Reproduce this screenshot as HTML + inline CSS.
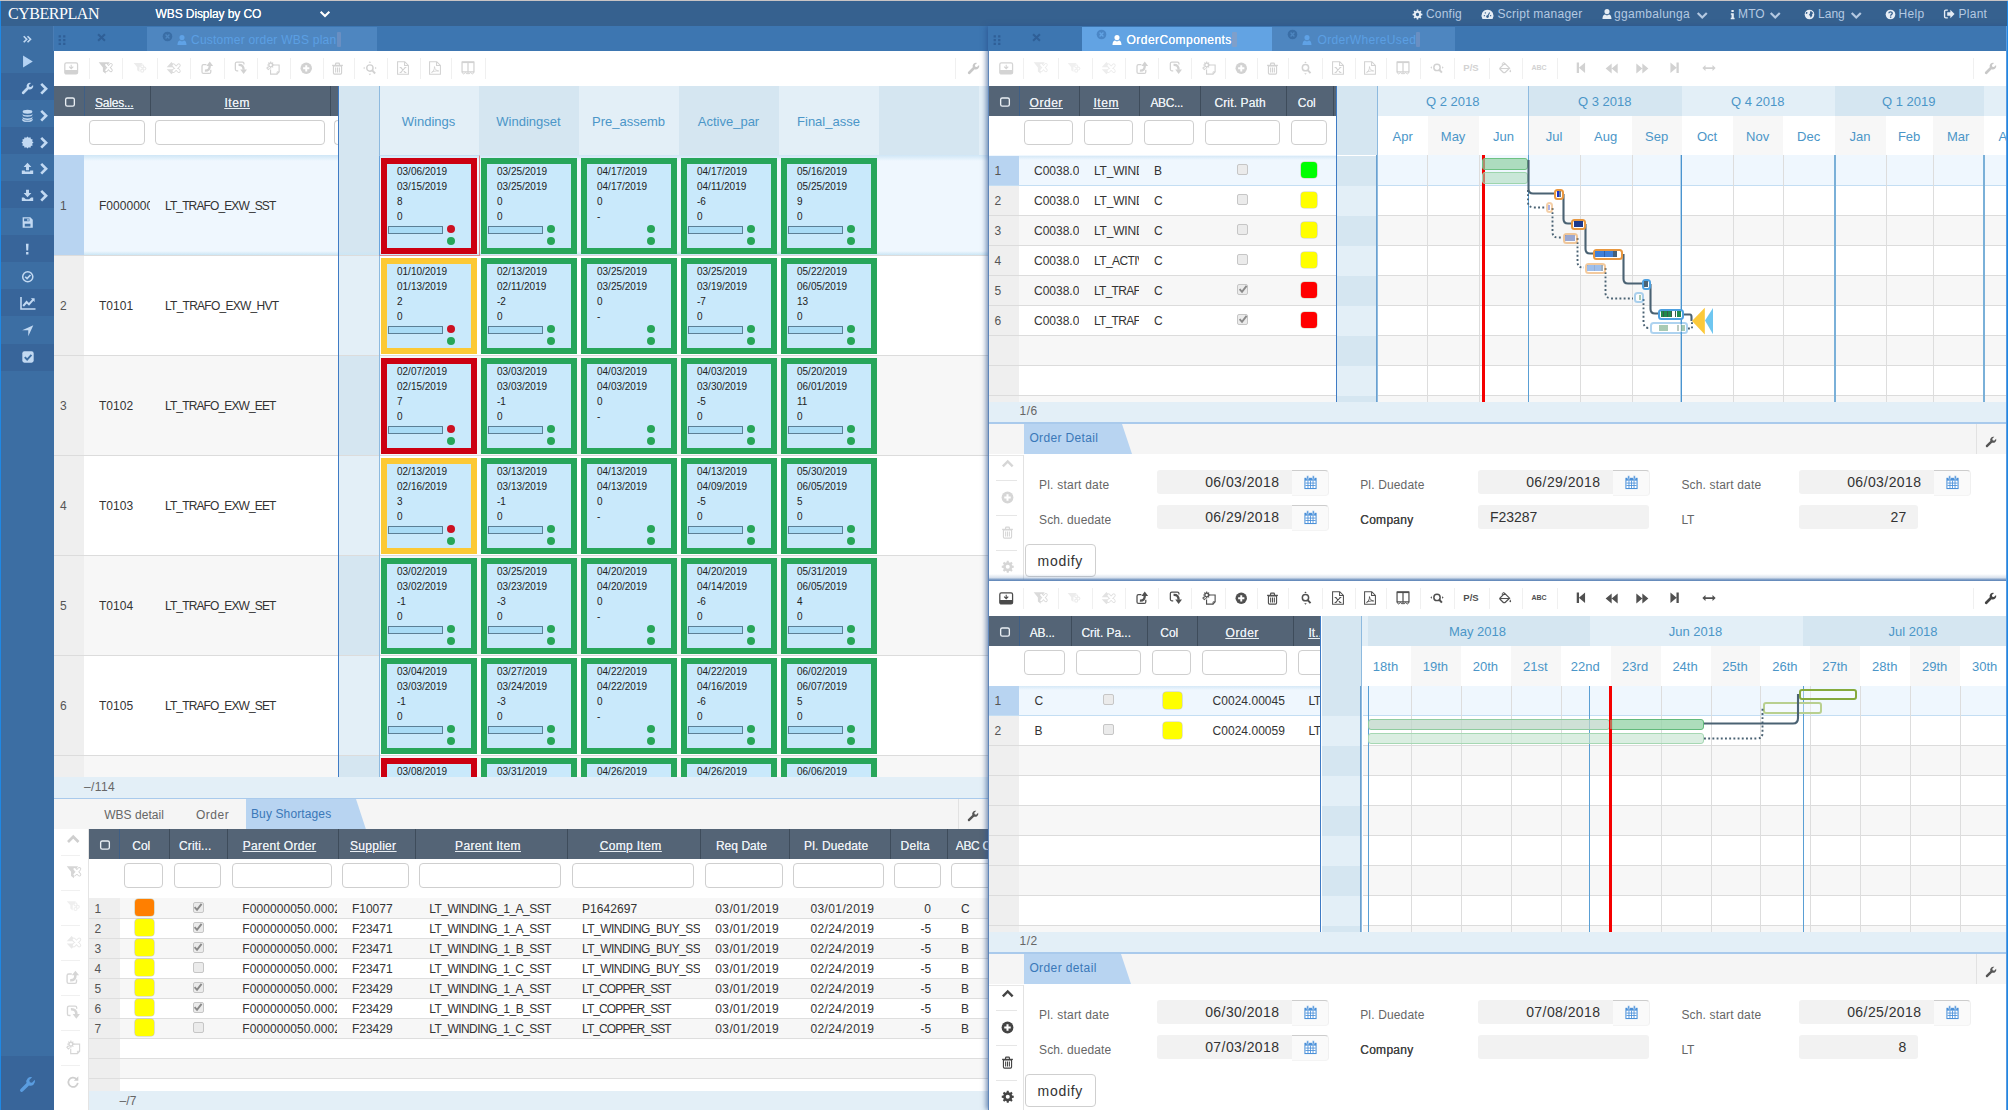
<!DOCTYPE html>
<html lang="en"><head><meta charset="utf-8"><title>Cyberplan</title>
<style>
*{box-sizing:border-box;margin:0;padding:0}
html,body{width:2008px;height:1110px;overflow:hidden;background:#fff}
body{position:relative;font-family:"Liberation Sans",sans-serif;font-size:12px;color:#333}
div,svg,span.a{position:absolute}
svg{overflow:visible}
.clip{overflow:hidden}
.fi{border:1px solid #cfcfcf;border-radius:4px;background:#fff}
.hd{background:#546476}
.u{text-decoration:underline}
</style></head>
<body>
<div style="left:0px;top:0px;width:2008px;height:1px;background:#c9c4c4"></div>
<div style="left:0px;top:1px;width:2008px;height:25px;background:#36618f"></div>
<div style="left:8px;top:3px;height:22px;line-height:22px;font-family:'Liberation Serif',serif;font-size:16px;color:#fff;letter-spacing:-.45px;white-space:nowrap">CYBERPLAN</div>
<div style="left:155.5px;top:5.0px;height:18px;line-height:18px;font-size:12px;color:#fff;letter-spacing:-0.09px;white-space:nowrap;text-shadow:0 0 .4px #fff;">WBS Display by CO</div>
<svg viewBox="0 0 16 16" style="left:319.0px;top:8.0px;width:12px;height:12px;color:#fff;"><path d="M2.2 5 L8 10.8 L13.8 5" fill="none" stroke="currentColor" stroke-width="2.8"/></svg>
<svg viewBox="0 0 16 16" style="left:1412.0px;top:8.5px;width:11px;height:11px;color:#e6edf5;"><path d="M15.11 6.87 L15.11 9.13 L13.23 9.34 L12.65 10.75 L13.82 12.23 L12.23 13.82 L10.75 12.65 L9.34 13.23 L9.13 15.11 L6.87 15.11 L6.66 13.23 L5.25 12.65 L3.77 13.82 L2.18 12.23 L3.35 10.75 L2.77 9.34 L0.89 9.13 L0.89 6.87 L2.77 6.66 L3.35 5.25 L2.18 3.77 L3.77 2.18 L5.25 3.35 L6.66 2.77 L6.87 0.89 L9.13 0.89 L9.34 2.77 L10.75 3.35 L12.23 2.18 L13.82 3.77 L12.65 5.25 L13.23 6.66Z M10.4 8 A2.4 2.4 0 1 0 5.6 8 A2.4 2.4 0 1 0 10.4 8Z" fill="currentColor" fill-rule="evenodd"/></svg>
<div style="left:1426px;top:5.1px;height:18px;line-height:18px;font-size:12px;color:#b4c9e2;letter-spacing:0.20px;white-space:nowrap;">Config</div>
<svg viewBox="0 0 16 16" style="left:1481.0px;top:7.5px;width:13px;height:13px;color:#e6edf5;"><path d="M8 2 A7.4 7.4 0 0 1 14.2 13.4 H1.8 A7.4 7.4 0 0 1 8 2Z" fill="currentColor"/><circle cx="8" cy="10.6" r="1.6" fill="#36618f"/><path d="M8 10.4 L10.6 5.6" stroke="#36618f" stroke-width="1.3"/><circle cx="4.2" cy="9.4" r=".9" fill="#36618f"/><circle cx="5.4" cy="6" r=".9" fill="#36618f"/><circle cx="11.8" cy="9.4" r=".9" fill="#36618f"/></svg>
<div style="left:1497.5px;top:5.1px;height:18px;line-height:18px;font-size:12px;color:#b4c9e2;letter-spacing:0.26px;white-space:nowrap;">Script manager</div>
<svg viewBox="0 0 16 16" style="left:1600.5px;top:8.0px;width:12px;height:12px;color:#e6edf5;"><path d="M8 1.2 A3.4 3.6 0 0 1 8 8.4 A3.4 3.6 0 0 1 8 1.2Z M2 14.8 C2 10 4 8.6 5.6 8.6 C6.4 9.4 7.2 9.7 8 9.7 C8.8 9.7 9.6 9.4 10.4 8.6 C12 8.6 14 10 14 14.8Z" fill="currentColor"/></svg>
<div style="left:1614px;top:5.1px;height:18px;line-height:18px;font-size:12px;color:#b4c9e2;letter-spacing:0.30px;white-space:nowrap;">ggambalunga</div>
<svg viewBox="0 0 16 16" style="left:1726.5px;top:8.5px;width:11px;height:11px;color:#e6edf5;"><path d="M6.4 1.4 H9.8 V4.4 H6.4Z M5.6 6.2 H9.9 V12.8 H11 V14.8 H5.4 V12.8 H6.6 V8.2 H5.6Z" fill="currentColor"/></svg>
<div style="left:1738px;top:5.1px;height:18px;line-height:18px;font-size:12px;color:#b4c9e2;letter-spacing:0.13px;white-space:nowrap;">MTO</div>
<svg viewBox="0 0 16 16" style="left:1804.0px;top:8.5px;width:11px;height:11px;color:#e6edf5;"><circle cx="8" cy="8" r="7" fill="currentColor"/><path d="M9.5 2.6 C11 4 12.6 4.4 13.6 6.6 C12 6.2 11.4 7.6 12.2 9 C11.2 10.6 10.6 11.8 9.8 12.8 C9 11.6 9.4 10.2 8.4 9.6 C7 9.2 7.2 7.6 8.2 7 C9.4 6.4 8.2 5 9 4.2Z" fill="#36618f"/><path d="M3.2 4.4 C4.4 4 5.4 4.8 5 6 C4.6 6.8 3.6 6.6 2.8 7.4 C2.4 6.4 2.6 5.2 3.2 4.4Z" fill="#36618f"/></svg>
<div style="left:1818px;top:5.1px;height:18px;line-height:18px;font-size:12px;color:#b4c9e2;letter-spacing:0.03px;white-space:nowrap;">Lang</div>
<svg viewBox="0 0 16 16" style="left:1884.5px;top:8.5px;width:11px;height:11px;color:#e6edf5;"><circle cx="8" cy="8" r="7" fill="currentColor"/><path d="M5.6 6.2 C5.6 3.4 10.6 3.4 10.6 6.2 C10.6 8 8.2 8 8.2 9.8" fill="none" stroke="#36618f" stroke-width="1.9"/><rect x="7.2" y="10.9" width="2" height="1.9" fill="#36618f"/></svg>
<div style="left:1898.6px;top:5.1px;height:18px;line-height:18px;font-size:12px;color:#b4c9e2;letter-spacing:0.33px;white-space:nowrap;">Help</div>
<svg viewBox="0 0 16 16" style="left:1943.0px;top:8.0px;width:12px;height:12px;color:#e6edf5;"><path d="M6.4 2 H3.6 A2.4 2.4 0 0 0 1.2 4.4 V11.6 A2.4 2.4 0 0 0 3.6 14 H6.4 V12.2 H3.8 A.8 .8 0 0 1 3 11.4 V4.6 A.8 .8 0 0 1 3.8 3.8 H6.4Z M9.8 2.4 L15.4 8 L9.8 13.6 V10.2 H5.6 V5.8 H9.8Z" fill="currentColor"/></svg>
<div style="left:1958.6px;top:5.1px;height:18px;line-height:18px;font-size:12px;color:#b4c9e2;letter-spacing:0.23px;white-space:nowrap;">Plant</div>
<svg viewBox="0 0 16 16" style="left:1695.8px;top:8.6px;width:12.5px;height:12.5px;color:#b4c9e2;"><path d="M2.2 5 L8 10.8 L13.8 5" fill="none" stroke="currentColor" stroke-width="2.8"/></svg>
<svg viewBox="0 0 16 16" style="left:1769.2px;top:8.6px;width:12.5px;height:12.5px;color:#b4c9e2;"><path d="M2.2 5 L8 10.8 L13.8 5" fill="none" stroke="currentColor" stroke-width="2.8"/></svg>
<svg viewBox="0 0 16 16" style="left:1849.8px;top:8.6px;width:12.5px;height:12.5px;color:#b4c9e2;"><path d="M2.2 5 L8 10.8 L13.8 5" fill="none" stroke="currentColor" stroke-width="2.8"/></svg>
<div style="left:0px;top:26px;width:54px;height:1084px;background:#3c6ea3"></div>
<div style="left:0px;top:73px;width:54px;height:27px;background:#38659a"></div>
<div style="left:0px;top:127.1px;width:54px;height:27.099999999999994px;background:#38659a"></div>
<div style="left:0px;top:181.2px;width:54px;height:27.0px;background:#38659a"></div>
<div style="left:0px;top:235.3px;width:54px;height:27.0px;background:#38659a"></div>
<div style="left:0px;top:289.4px;width:54px;height:27.0px;background:#38659a"></div>
<div style="left:0px;top:343.5px;width:54px;height:27.0px;background:#38659a"></div>
<div style="left:0px;top:1056px;width:54px;height:54px;background:#38659a"></div>
<div style="left:0px;top:1px;width:1px;height:1109px;background:#1e88e5"></div>
<svg viewBox="0 0 16 16" style="left:21.8px;top:34.0px;width:10.5px;height:10.5px;color:#c2d9f2;"><path d="M2.6 3.4 L7.2 8 L2.6 12.6 M8.4 3.4 L13 8 L8.4 12.6" fill="none" stroke="currentColor" stroke-width="2.5"/></svg>
<svg viewBox="0 0 16 16" style="left:20.5px;top:54.5px;width:13px;height:13px;color:#b5d3f3;"><path d="M2.5 0.5 L14.5 8 L2.5 15.5Z" fill="currentColor"/></svg>
<svg viewBox="0 0 16 16" style="left:21.0px;top:81.5px;width:13px;height:13px;color:#c2d9f2;"><path d="M14.9 3.6 L12.2 6.3 L10.2 5.8 L9.7 3.8 L12.4 1.1 A4.3 4.3 0 0 0 7.1 6.6 L1.3 12.4 A1.65 1.65 0 0 0 3.6 14.7 L9.4 8.9 A4.3 4.3 0 0 0 14.9 3.6Z" fill="currentColor"/></svg>
<svg viewBox="0 0 16 16" style="left:36.8px;top:81.8px;width:13.5px;height:13.5px;color:#c2d9f2;"><path d="M5 2.2 L10.8 8 L5 13.8" fill="none" stroke="currentColor" stroke-width="3.1" stroke-linejoin="miter"/></svg>
<svg viewBox="0 0 16 16" style="left:21.0px;top:108.5px;width:13px;height:13px;color:#c2d9f2;"><path d="M2 3.4 A6 2.4 0 0 1 14 3.4 A6 2.4 0 0 1 2 3.4Z M2 5.4 A6 2.4 0 0 0 14 5.4 V7.2 A6 2.4 0 0 1 2 7.2Z M2 9.2 A6 2.4 0 0 0 14 9.2 V11 A6 2.4 0 0 1 2 11Z M2 13 A6 2.4 0 0 0 14 13 V13.4 A6 2.4 0 0 1 2 13.4Z" fill="currentColor"/><path d="M2 12.6 A6 2.4 0 0 0 14 12.6" fill="none" stroke="currentColor" stroke-width="1.6"/></svg>
<svg viewBox="0 0 16 16" style="left:36.8px;top:108.8px;width:13.5px;height:13.5px;color:#c2d9f2;"><path d="M5 2.2 L10.8 8 L5 13.8" fill="none" stroke="currentColor" stroke-width="3.1" stroke-linejoin="miter"/></svg>
<svg viewBox="0 0 16 16" style="left:21.0px;top:135.5px;width:13px;height:13px;color:#c2d9f2;"><path d="M15.40 8.00 L13.70 9.53 L14.41 11.70 L12.17 12.17 L11.70 14.41 L9.53 13.70 L8.00 15.40 L6.47 13.70 L4.30 14.41 L3.83 12.17 L1.59 11.70 L2.30 9.53 L0.60 8.00 L2.30 6.47 L1.59 4.30 L3.83 3.83 L4.30 1.59 L6.47 2.30 L8.00 0.60 L9.53 2.30 L11.70 1.59 L12.17 3.83 L14.41 4.30 L13.70 6.47Z" fill="currentColor"/></svg>
<svg viewBox="0 0 16 16" style="left:36.8px;top:135.8px;width:13.5px;height:13.5px;color:#c2d9f2;"><path d="M5 2.2 L10.8 8 L5 13.8" fill="none" stroke="currentColor" stroke-width="3.1" stroke-linejoin="miter"/></svg>
<svg viewBox="0 0 16 16" style="left:21.0px;top:162.0px;width:13px;height:13px;color:#c2d9f2;"><path d="M8 0.8 L12.8 6 H9.8 V10 H6.2 V6 H3.2Z M1 10.5 H4.8 V11.6 H11.2 V10.5 H15 V14.8 H1Z" fill="currentColor"/></svg>
<svg viewBox="0 0 16 16" style="left:36.8px;top:162.2px;width:13.5px;height:13.5px;color:#c2d9f2;"><path d="M5 2.2 L10.8 8 L5 13.8" fill="none" stroke="currentColor" stroke-width="3.1" stroke-linejoin="miter"/></svg>
<svg viewBox="0 0 16 16" style="left:21.0px;top:189.0px;width:13px;height:13px;color:#c2d9f2;"><path d="M6.2 0.8 H9.8 V5 H12.8 L8 10.2 L3.2 5 H6.2Z M1 10.5 H3.6 L6 12.6 H10 L12.4 10.5 H15 V14.8 H1Z" fill="currentColor"/></svg>
<svg viewBox="0 0 16 16" style="left:36.8px;top:189.2px;width:13.5px;height:13.5px;color:#c2d9f2;"><path d="M5 2.2 L10.8 8 L5 13.8" fill="none" stroke="currentColor" stroke-width="3.1" stroke-linejoin="miter"/></svg>
<svg viewBox="0 0 16 16" style="left:21.0px;top:216.0px;width:13px;height:13px;color:#c2d9f2;"><path d="M2 1.5 H11.5 L14.5 4.5 V14.5 H2Z M3.8 3.2 V6.6 H10.4 V3.2Z M4.6 9.4 V12.9 H11.6 V9.4Z" fill="currentColor" fill-rule="evenodd"/><rect x="7.8" y="3.6" width="1.6" height="2.4" fill="currentColor"/></svg>
<svg viewBox="0 0 16 16" style="left:21.2px;top:242.8px;width:12.5px;height:12.5px;color:#c2d9f2;"><path d="M6.3 1 H9.7 L9.2 9.6 H6.8Z M6.5 11.6 H9.5 V14.8 H6.5Z" fill="currentColor"/></svg>
<svg viewBox="0 0 16 16" style="left:20.8px;top:269.6px;width:13.5px;height:13.5px;color:#c2d9f2;"><circle cx="8" cy="8" r="6" fill="none" stroke="currentColor" stroke-width="1.8"/><path d="M5 8 L7.2 10.2 L11.2 5.9" fill="none" stroke="currentColor" stroke-width="2"/></svg>
<svg viewBox="0 0 16 16" style="left:19.5px;top:295.0px;width:16px;height:16px;color:#c2d9f2;"><path d="M1 2 V14 H15.5" fill="none" stroke="currentColor" stroke-width="1.6"/><path d="M3.2 11 L6.6 7 L9 9.4 L13.6 4.2" fill="none" stroke="currentColor" stroke-width="2"/><path d="M10.8 3.2 H14.6 V7Z" fill="currentColor"/></svg>
<svg viewBox="0 0 16 16" style="left:20.8px;top:323.8px;width:13.5px;height:13.5px;color:#c2d9f2;"><path d="M14.6 1.4 L8.6 14.6 V7.4 H1.4Z" fill="currentColor"/></svg>
<svg viewBox="0 0 16 16" style="left:20.5px;top:350.0px;width:14px;height:14px;color:#c2d9f2;"><rect x="1.5" y="1.5" width="13" height="13" rx="2.4" fill="currentColor"/><path d="M4.3 8.2 L7 10.9 L11.9 5.6" fill="none" stroke="#3c6ea3" stroke-width="2.2"/></svg>
<svg viewBox="0 0 16 16" style="left:19.0px;top:1075.5px;width:17px;height:17px;color:#5a9de0;"><path d="M14.9 3.6 L12.2 6.3 L10.2 5.8 L9.7 3.8 L12.4 1.1 A4.3 4.3 0 0 0 7.1 6.6 L1.3 12.4 A1.65 1.65 0 0 0 3.6 14.7 L9.4 8.9 A4.3 4.3 0 0 0 14.9 3.6Z" fill="currentColor"/></svg>
<div style="left:54px;top:26px;width:1954px;height:25px;background:#3d76b1"></div>
<div style="left:53px;top:26px;width:1px;height:25px;background:#4a7db5"></div>
<svg viewBox="0 0 16 16" style="left:55.5px;top:33.5px;width:12px;height:12px;color:#2f5f97;"><path d="M3.5 1.5 h3 v3 h-3Z M9.5 1.5 h3 v3 h-3Z M3.5 6.5 h3 v3 h-3Z M9.5 6.5 h3 v3 h-3Z M3.5 11.5 h3 v3 h-3Z M9.5 11.5 h3 v3 h-3Z" fill="currentColor"/></svg>
<svg viewBox="0 0 16 16" style="left:96.0px;top:32.0px;width:11px;height:11px;color:#2f5f97;"><path d="M3 3.4 L13 12.6 M13 3.4 L3 12.6" stroke="currentColor" stroke-width="3" fill="none"/></svg>
<div style="left:146.5px;top:27px;width:230px;height:24px;background:#4e86c0"></div>
<svg viewBox="0 0 16 16" style="left:161.5px;top:31.0px;width:11px;height:11px;color:#3a6ea6;"><circle cx="8" cy="8" r="7" fill="currentColor"/><path d="M5.2 5.2 L10.8 10.8 M10.8 5.2 L5.2 10.8" stroke="#4e86c0" stroke-width="2" fill="none"/></svg>
<svg viewBox="0 0 16 16" style="left:175.5px;top:34.0px;width:12px;height:12px;color:#5fa2e6;"><path d="M8 1.2 A3.4 3.6 0 0 1 8 8.4 A3.4 3.6 0 0 1 8 1.2Z M2 14.8 C2 10 4 8.6 5.6 8.6 C6.4 9.4 7.2 9.7 8 9.7 C8.8 9.7 9.6 9.4 10.4 8.6 C12 8.6 14 10 14 14.8Z" fill="currentColor"/></svg>
<div style="left:191px;top:30.5px;height:18px;line-height:18px;font-size:12px;color:#5b9fe3;letter-spacing:0.23px;white-space:nowrap;">Customer order WBS plan</div>
<div style="left:336.5px;top:31.5px;width:4.5px;height:15px;background:#6a8fc2;border-radius:1px"></div>
<div style="left:54px;top:51px;width:934px;height:35px;background:#fff"></div>
<div style="left:89px;top:58px;width:1px;height:21px;background:#f0f0f0"></div>
<div style="left:122px;top:58px;width:1px;height:21px;background:#f0f0f0"></div>
<div style="left:157px;top:58px;width:1px;height:21px;background:#f0f0f0"></div>
<div style="left:190px;top:58px;width:1px;height:21px;background:#f0f0f0"></div>
<div style="left:224px;top:58px;width:1px;height:21px;background:#f0f0f0"></div>
<div style="left:257px;top:58px;width:1px;height:21px;background:#f0f0f0"></div>
<div style="left:290px;top:58px;width:1px;height:21px;background:#f0f0f0"></div>
<div style="left:323px;top:58px;width:1px;height:21px;background:#f0f0f0"></div>
<div style="left:354px;top:58px;width:1px;height:21px;background:#f0f0f0"></div>
<div style="left:387px;top:58px;width:1px;height:21px;background:#f0f0f0"></div>
<div style="left:420px;top:58px;width:1px;height:21px;background:#f0f0f0"></div>
<div style="left:451px;top:58px;width:1px;height:21px;background:#f0f0f0"></div>
<div style="left:485px;top:58px;width:1px;height:21px;background:#f0f0f0"></div>
<div style="left:955px;top:58px;width:1px;height:21px;background:#f0f0f0"></div>
<svg viewBox="0 0 16 16" style="left:64.0px;top:60.8px;width:14.4px;height:14.4px;color:#d2d2d2;"><rect x="0.9" y="2.1" width="14.2" height="12.3" rx="1.7" fill="none" stroke="currentColor" stroke-width="1.4"/><path d="M0.9 9.9 H15.1 V13 A1.5 1.5 0 0 1 13.6 14.5 H2.4 A1.5 1.5 0 0 1 0.9 13Z" fill="currentColor"/><path d="M8 4.2 V8 M5.7 6.2 L8 8.5 L10.3 6.2" fill="none" stroke="currentColor" stroke-width="1.2"/></svg>
<svg viewBox="0 0 16 16" style="left:98.3px;top:61.0px;width:14px;height:14px;color:#d2d2d2;"><path d="M0.8 1.4 H13.4 L8.8 7.4 V14.6 L5.6 12 V7.4Z" fill="currentColor"/><path d="M9.3 4.4 L14.7 10.6 M14.7 4.4 L9.3 10.6" stroke="currentColor" stroke-width="4.2" stroke-linecap="round" fill="none"/><path d="M9.3 4.4 L14.7 10.6 M14.7 4.4 L9.3 10.6" stroke="#fff" stroke-width="2.2" stroke-linecap="round" fill="none"/></svg>
<svg viewBox="0 0 16 16" style="left:132.6px;top:61.0px;width:14px;height:14px;color:#ececec;"><path d="M0.8 2.4 H11 L7.4 7 V12.6 L4.8 10.6 V7Z" fill="currentColor"/><circle cx="10.5" cy="6" r="2.3" fill="currentColor"/><circle cx="13" cy="8.6" r="2.3" fill="currentColor"/><circle cx="10.5" cy="11" r="2.3" fill="currentColor"/><circle cx="10.5" cy="6" r="1" fill="#fff"/><circle cx="13" cy="8.6" r="1" fill="#fff"/><circle cx="10.5" cy="11" r="1" fill="#fff"/></svg>
<svg viewBox="0 0 16 16" style="left:165.8px;top:61.0px;width:14px;height:14px;color:#dcdcdc;"><path d="M0.8 7 L6.2 1.2 L11.6 7Z M0.8 9.4 L6.2 15.2 L11.6 9.4Z" fill="currentColor"/><path d="M8.6 5 L14.6 11.4 M14.6 5 L8.6 11.4" stroke="currentColor" stroke-width="4.4" stroke-linecap="round" fill="none"/><path d="M8.6 5 L14.6 11.4 M14.6 5 L8.6 11.4" stroke="#fff" stroke-width="2.3" stroke-linecap="round" fill="none"/></svg>
<svg viewBox="0 0 16 16" style="left:200.8px;top:61.2px;width:13.5px;height:13.5px;color:#d2d2d2;"><path d="M11.6 10.4 V13 A1.8 1.8 0 0 1 9.8 14.8 H3 A1.8 1.8 0 0 1 1.2 13 V6.2 A1.8 1.8 0 0 1 3 4.4 H6.4" fill="none" stroke="currentColor" stroke-width="1.5"/><path d="M4.6 11.4 C8.8 11.6 10.4 9.6 10.4 5.4" fill="none" stroke="currentColor" stroke-width="2.8"/><path d="M6.4 5.9 L10.4 0.7 L14.4 5.9Z" fill="currentColor"/></svg>
<svg viewBox="0 0 16 16" style="left:233.8px;top:61.2px;width:13.5px;height:13.5px;color:#d2d2d2;"><path d="M5 11.6 H3.4 A1.8 1.8 0 0 1 1.6 9.8 V3 A1.8 1.8 0 0 1 3.4 1.2 H10 A1.8 1.8 0 0 1 11.8 3 V4.2" fill="none" stroke="currentColor" stroke-width="1.5"/><path d="M5.4 4.6 C9.6 4.4 11.4 6.4 11.4 10.4" fill="none" stroke="currentColor" stroke-width="2.8"/><path d="M7.4 10 L11.4 15.3 L15.4 10Z" fill="currentColor"/></svg>
<svg viewBox="0 0 16 16" style="left:266.4px;top:61.0px;width:14px;height:14px;color:#d2d2d2;"><path d="M7.4 4.6 H15 V12.4 L12.6 15 H5.2 V9.6" fill="none" stroke="currentColor" stroke-width="1.3"/><path d="M15 12.4 H12.6 V15" fill="none" stroke="currentColor" stroke-width="1"/><g transform="translate(1.2 0.4) scale(.52)"><path d="M15.51 6.81 L15.51 9.19 L13.23 9.34 L12.65 10.75 L14.15 12.47 L12.47 14.15 L10.75 12.65 L9.34 13.23 L9.19 15.51 L6.81 15.51 L6.66 13.23 L5.25 12.65 L3.53 14.15 L1.85 12.47 L3.35 10.75 L2.77 9.34 L0.49 9.19 L0.49 6.81 L2.77 6.66 L3.35 5.25 L1.85 3.53 L3.53 1.85 L5.25 3.35 L6.66 2.77 L6.81 0.49 L9.19 0.49 L9.34 2.77 L10.75 3.35 L12.47 1.85 L14.15 3.53 L12.65 5.25 L13.23 6.66Z M10.6 8 A2.6 2.6 0 1 0 5.4 8 A2.6 2.6 0 1 0 10.6 8Z" fill="currentColor" fill-rule="evenodd"/></g><path d="M2.4 6.6 L1 8 L2.6 9.8 L4.2 8.4" fill="none" stroke="currentColor" stroke-width="1.2"/></svg>
<svg viewBox="0 0 16 16" style="left:299.8px;top:61.8px;width:12.5px;height:12.5px;color:#d2d2d2;"><circle cx="8" cy="8" r="7.3" fill="currentColor"/><path d="M8 4 V12 M4 8 H12" stroke="#fff" stroke-width="2.5"/></svg>
<svg viewBox="0 0 16 16" style="left:331.1px;top:61.5px;width:13px;height:13px;color:#d2d2d2;"><path d="M3 4.8 H13 V13.6 A1.3 1.3 0 0 1 11.7 14.9 H4.3 A1.3 1.3 0 0 1 3 13.6Z" fill="none" stroke="currentColor" stroke-width="1.4"/><path d="M1.4 4.2 H14.6" stroke="currentColor" stroke-width="1.6"/><path d="M5.6 3.8 V2.4 A1 1 0 0 1 6.6 1.4 H9.4 A1 1 0 0 1 10.4 2.4 V3.8" fill="none" stroke="currentColor" stroke-width="1.4"/><path d="M5.7 6.8 V12.8 M8 6.8 V12.8 M10.3 6.8 V12.8" stroke="currentColor" stroke-width="1.3"/></svg>
<svg viewBox="0 0 16 16" style="left:362.8px;top:60.8px;width:14.5px;height:14.5px;color:#d2d2d2;"><circle cx="7.6" cy="7.8" r="3.5" fill="none" stroke="currentColor" stroke-width="1.6"/><path d="M10.2 10.4 L13.4 13.8" stroke="currentColor" stroke-width="2.1"/><path d="M7.6 0.4 L9 2 H6.2Z M7.6 15.6 L9 14 H6.2Z M0.2 7.8 L1.8 6.4 V9.2Z M15 7.8 L13.4 6.4 V9.2Z" fill="currentColor"/></svg>
<svg viewBox="0 0 16 16" style="left:396.0px;top:61.0px;width:14px;height:14px;color:#d2d2d2;"><path d="M1.8 0.8 H10 L14.2 5 V15.2 H1.8Z M9.8 1 V5.2 H14" fill="none" stroke="currentColor" stroke-width="1.2"/><path d="M5.2 7.4 L10.8 13.2 M10.8 7.4 L5.2 13.2 M4.2 7.4 H6.4 M9.6 7.4 H11.8 M4.2 13.2 H6.4 M9.6 13.2 H11.8" stroke="currentColor" stroke-width="1.2" fill="none"/></svg>
<svg viewBox="0 0 16 16" style="left:428.2px;top:61.0px;width:14px;height:14px;color:#d2d2d2;"><path d="M1.8 0.8 H10 L14.2 5 V15.2 H1.8Z M9.8 1 V5.2 H14" fill="none" stroke="currentColor" stroke-width="1.2"/><path d="M4 13 C6.4 11.8 7.6 9.2 7.4 6.4 C7.8 9.6 9.6 11.2 12.2 11.4 C9.2 11 6.4 11.8 4 13Z" fill="none" stroke="currentColor" stroke-width="1"/></svg>
<svg viewBox="0 0 16 16" style="left:460.8px;top:61.0px;width:14px;height:14px;color:#d2d2d2;"><path d="M1.2 1.2 H14.8 V12.4 H1.2Z" fill="none" stroke="currentColor" stroke-width="1.4"/><path d="M1.2 1.4 H14.8" stroke="currentColor" stroke-width="2"/><path d="M8 1.4 V12.4" stroke="currentColor" stroke-width="1.4"/><path d="M1.2 12.4 L2.6 15 L5.4 13.2 L7 15 L8 13 L9 15 L10.6 13.2 L13.4 15 L14.8 12.4" fill="none" stroke="currentColor" stroke-width="1"/></svg>
<svg viewBox="0 0 16 16" style="left:966.5px;top:62.0px;width:13px;height:13px;color:#c8c8c8;"><path d="M14.9 3.6 L12.2 6.3 L10.2 5.8 L9.7 3.8 L12.4 1.1 A4.3 4.3 0 0 0 7.1 6.6 L1.3 12.4 A1.65 1.65 0 0 0 3.6 14.7 L9.4 8.9 A4.3 4.3 0 0 0 14.9 3.6Z" fill="currentColor"/></svg>
<div style="left:54px;top:86px;width:284px;height:30px;background:#546476"></div>
<svg viewBox="0 0 16 16" style="left:63.8px;top:96.0px;width:12px;height:12px;color:#e9eef3;"><rect x="2.2" y="2.6" width="11.6" height="10.8" rx="2.2" fill="none" stroke="currentColor" stroke-width="1.8"/></svg>
<div style="left:84px;top:86px;width:1px;height:30px;background:#3e4c5b"></div>
<div style="left:95.0px;top:93.7px;height:18px;line-height:18px;font-size:12px;color:#e9eef3;letter-spacing:-0.21px;white-space:nowrap;text-shadow:0 0 .3px #e9eef3;text-decoration:underline;">Sales...</div>
<div style="left:150px;top:86px;width:1px;height:30px;background:#3e4c5b"></div>
<div style="left:224.5px;top:93.7px;height:18px;line-height:18px;font-size:12px;color:#e9eef3;letter-spacing:0.53px;white-space:nowrap;text-shadow:0 0 .3px #e9eef3;text-decoration:underline;">Item</div>
<div style="left:330px;top:86px;width:1px;height:30px;background:#3e4c5b"></div>
<div style="left:338px;top:86px;width:1px;height:30px;background:#3e4c5b"></div>
<div style="left:84px;top:86px;width:1px;height:30px;background:#3f5f86"></div>
<div style="left:54px;top:116px;width:284px;height:39px;background:#fff"></div>
<div class="fi" style="left:89px;top:120px;width:56px;height:25px;"></div>
<div class="fi" style="left:155px;top:120px;width:170px;height:25px;"></div>
<div class="fi" style="left:334px;top:120px;width:10px;height:25px;border-right:0;border-radius:4px 0 0 4px"></div>
<div style="left:339px;top:86px;width:40px;height:691px;background:#d5e6f1"></div>
<div style="left:380px;top:86px;width:99px;height:69px;background:#e3eff7"></div>
<div style="left:479px;top:86px;width:100px;height:69px;background:#d5e6f1"></div>
<div style="left:579px;top:86px;width:100px;height:69px;background:#e3eff7"></div>
<div style="left:679px;top:86px;width:100px;height:69px;background:#d5e6f1"></div>
<div style="left:779px;top:86px;width:100px;height:69px;background:#e3eff7"></div>
<div style="left:879px;top:86px;width:100px;height:69px;background:#d5e6f1"></div>
<div style="left:979px;top:86px;width:9px;height:69px;background:#e3eff7"></div>
<div style="left:401.767734375px;top:112.0px;height:19px;line-height:19px;font-size:13px;color:#4b96c8;letter-spacing:0.00px;white-space:nowrap;">Windings</div>
<div style="left:496.34734375px;top:112.0px;height:19px;line-height:19px;font-size:13px;color:#4b96c8;letter-spacing:0.00px;white-space:nowrap;">Windingset</div>
<div style="left:592.01265625px;top:112.0px;height:19px;line-height:19px;font-size:13px;color:#4b96c8;letter-spacing:0.00px;white-space:nowrap;">Pre_assemb</div>
<div style="left:697.7915625px;top:112.0px;height:19px;line-height:19px;font-size:13px;color:#4b96c8;letter-spacing:0.00px;white-space:nowrap;">Active_par</div>
<div style="left:797.0684375px;top:112.0px;height:19px;line-height:19px;font-size:13px;color:#4b96c8;letter-spacing:0.00px;white-space:nowrap;">Final_asse</div>
<div style="left:84px;top:155px;width:254px;height:101px;background:#eff7fe"></div>
<div style="left:54px;top:155px;width:30px;height:101px;background:#b8d4f1"></div>
<div style="left:380px;top:155px;width:608px;height:101px;background:#eff7fe"></div>
<div style="left:84px;top:155px;width:254px;height:6px;background:linear-gradient(#cfe6f6,#eff7fe)"></div>
<div style="left:380px;top:155px;width:608px;height:6px;background:linear-gradient(#cfe6f6,#eff7fe)"></div>
<div style="left:84px;top:251px;width:904px;height:4px;background:linear-gradient(rgba(200,230,245,0),#cbe6f5)"></div>
<div style="left:54px;top:255px;width:934px;height:1px;background:#dcdcdc"></div>
<div style="left:60px;top:196.5px;height:18px;line-height:18px;font-size:12px;color:#555;letter-spacing:0.19px;white-space:nowrap;">1</div>
<div class="clip" style="left:99px;top:196px;width:51px;height:20px"><div style="left:0px;top:1.0px;height:18px;line-height:18px;font-size:12px;color:#333;letter-spacing:0.02px;white-space:nowrap;">F0000000</div></div>
<div style="left:165px;top:196.5px;height:18px;line-height:18px;font-size:12px;color:#333;letter-spacing:-0.88px;white-space:nowrap;">LT_TRAFO_EXW_SST</div>
<div style="left:84px;top:256px;width:254px;height:100px;background:#fff"></div>
<div style="left:54px;top:256px;width:30px;height:100px;background:#efefef"></div>
<div style="left:380px;top:256px;width:608px;height:100px;background:#fff"></div>
<div style="left:339px;top:256px;width:40px;height:100px;background:#e3eff7"></div>
<div style="left:54px;top:355px;width:934px;height:1px;background:#dcdcdc"></div>
<div style="left:60px;top:296.5px;height:18px;line-height:18px;font-size:12px;color:#555;letter-spacing:0.19px;white-space:nowrap;">2</div>
<div class="clip" style="left:99px;top:296px;width:51px;height:20px"><div style="left:0px;top:1.0px;height:18px;line-height:18px;font-size:12px;color:#333;letter-spacing:0.01px;white-space:nowrap;">T0101</div></div>
<div style="left:165px;top:296.5px;height:18px;line-height:18px;font-size:12px;color:#333;letter-spacing:-0.74px;white-space:nowrap;">LT_TRAFO_EXW_HVT</div>
<div style="left:84px;top:356px;width:254px;height:100px;background:#f7f7f7"></div>
<div style="left:54px;top:356px;width:30px;height:100px;background:#efefef"></div>
<div style="left:380px;top:356px;width:608px;height:100px;background:#f7f7f7"></div>
<div style="left:54px;top:455px;width:934px;height:1px;background:#dcdcdc"></div>
<div style="left:60px;top:396.5px;height:18px;line-height:18px;font-size:12px;color:#555;letter-spacing:0.19px;white-space:nowrap;">3</div>
<div class="clip" style="left:99px;top:396px;width:51px;height:20px"><div style="left:0px;top:1.0px;height:18px;line-height:18px;font-size:12px;color:#333;letter-spacing:0.01px;white-space:nowrap;">T0102</div></div>
<div style="left:165px;top:396.5px;height:18px;line-height:18px;font-size:12px;color:#333;letter-spacing:-0.87px;white-space:nowrap;">LT_TRAFO_EXW_EET</div>
<div style="left:84px;top:456px;width:254px;height:100px;background:#fff"></div>
<div style="left:54px;top:456px;width:30px;height:100px;background:#efefef"></div>
<div style="left:380px;top:456px;width:608px;height:100px;background:#fff"></div>
<div style="left:339px;top:456px;width:40px;height:100px;background:#e3eff7"></div>
<div style="left:54px;top:555px;width:934px;height:1px;background:#dcdcdc"></div>
<div style="left:60px;top:496.5px;height:18px;line-height:18px;font-size:12px;color:#555;letter-spacing:0.19px;white-space:nowrap;">4</div>
<div class="clip" style="left:99px;top:496px;width:51px;height:20px"><div style="left:0px;top:1.0px;height:18px;line-height:18px;font-size:12px;color:#333;letter-spacing:0.01px;white-space:nowrap;">T0103</div></div>
<div style="left:165px;top:496.5px;height:18px;line-height:18px;font-size:12px;color:#333;letter-spacing:-0.87px;white-space:nowrap;">LT_TRAFO_EXW_EET</div>
<div style="left:84px;top:556px;width:254px;height:100px;background:#f7f7f7"></div>
<div style="left:54px;top:556px;width:30px;height:100px;background:#efefef"></div>
<div style="left:380px;top:556px;width:608px;height:100px;background:#f7f7f7"></div>
<div style="left:54px;top:655px;width:934px;height:1px;background:#dcdcdc"></div>
<div style="left:60px;top:596.5px;height:18px;line-height:18px;font-size:12px;color:#555;letter-spacing:0.19px;white-space:nowrap;">5</div>
<div class="clip" style="left:99px;top:596px;width:51px;height:20px"><div style="left:0px;top:1.0px;height:18px;line-height:18px;font-size:12px;color:#333;letter-spacing:0.01px;white-space:nowrap;">T0104</div></div>
<div style="left:165px;top:596.5px;height:18px;line-height:18px;font-size:12px;color:#333;letter-spacing:-0.87px;white-space:nowrap;">LT_TRAFO_EXW_SET</div>
<div style="left:84px;top:656px;width:254px;height:100px;background:#fff"></div>
<div style="left:54px;top:656px;width:30px;height:100px;background:#efefef"></div>
<div style="left:380px;top:656px;width:608px;height:100px;background:#fff"></div>
<div style="left:339px;top:656px;width:40px;height:100px;background:#e3eff7"></div>
<div style="left:54px;top:755px;width:934px;height:1px;background:#dcdcdc"></div>
<div style="left:60px;top:696.5px;height:18px;line-height:18px;font-size:12px;color:#555;letter-spacing:0.19px;white-space:nowrap;">6</div>
<div class="clip" style="left:99px;top:696px;width:51px;height:20px"><div style="left:0px;top:1.0px;height:18px;line-height:18px;font-size:12px;color:#333;letter-spacing:0.01px;white-space:nowrap;">T0105</div></div>
<div style="left:165px;top:696.5px;height:18px;line-height:18px;font-size:12px;color:#333;letter-spacing:-0.87px;white-space:nowrap;">LT_TRAFO_EXW_SET</div>
<div style="left:84px;top:756px;width:254px;height:21px;background:#f7f7f7"></div>
<div style="left:54px;top:756px;width:30px;height:21px;background:#efefef"></div>
<div style="left:380px;top:756px;width:608px;height:21px;background:#f7f7f7"></div>
<div style="left:338px;top:86px;width:1px;height:691px;background:#3f7bc4"></div>
<div style="left:379px;top:86px;width:1px;height:691px;background:#8ebadf"></div>
<div class="clip" style="left:380px;top:155px;width:608px;height:622px">
<div style="left:1px;top:3px;width:96px;height:96px;border:6px solid #cc0011;background:#c9e9fb"></div>
<div style="left:17px;top:9px;height:15px;line-height:15px;font-size:10px;color:#222;white-space:nowrap">03/06/2019</div>
<div style="left:17px;top:24px;height:15px;line-height:15px;font-size:10px;color:#222;white-space:nowrap">03/15/2019</div>
<div style="left:17px;top:39px;height:15px;line-height:15px;font-size:10px;color:#222;white-space:nowrap">8</div>
<div style="left:17px;top:54px;height:15px;line-height:15px;font-size:10px;color:#222;white-space:nowrap">0</div>
<div style="left:8px;top:71px;width:55px;height:8px;border:1px solid #5b7f95;background:#a9dcf6"></div>
<div style="left:67px;top:70px;width:8px;height:8px;border-radius:50%;background:#cc1122"></div>
<div style="left:67px;top:82px;width:8px;height:8px;border-radius:50%;background:#27a558"></div>
<div style="left:101px;top:3px;width:96px;height:96px;border:6px solid #27a65a;background:#c9e9fb"></div>
<div style="left:117px;top:9px;height:15px;line-height:15px;font-size:10px;color:#222;white-space:nowrap">03/25/2019</div>
<div style="left:117px;top:24px;height:15px;line-height:15px;font-size:10px;color:#222;white-space:nowrap">03/25/2019</div>
<div style="left:117px;top:39px;height:15px;line-height:15px;font-size:10px;color:#222;white-space:nowrap">0</div>
<div style="left:117px;top:54px;height:15px;line-height:15px;font-size:10px;color:#222;white-space:nowrap">0</div>
<div style="left:108px;top:71px;width:55px;height:8px;border:1px solid #5b7f95;background:#a9dcf6"></div>
<div style="left:167px;top:70px;width:8px;height:8px;border-radius:50%;background:#27a558"></div>
<div style="left:167px;top:82px;width:8px;height:8px;border-radius:50%;background:#27a558"></div>
<div style="left:201px;top:3px;width:96px;height:96px;border:6px solid #27a65a;background:#c9e9fb"></div>
<div style="left:217px;top:9px;height:15px;line-height:15px;font-size:10px;color:#222;white-space:nowrap">04/17/2019</div>
<div style="left:217px;top:24px;height:15px;line-height:15px;font-size:10px;color:#222;white-space:nowrap">04/17/2019</div>
<div style="left:217px;top:39px;height:15px;line-height:15px;font-size:10px;color:#222;white-space:nowrap">0</div>
<div style="left:217px;top:54px;height:15px;line-height:15px;font-size:10px;color:#222;white-space:nowrap">-</div>
<div style="left:267px;top:70px;width:8px;height:8px;border-radius:50%;background:#27a558"></div>
<div style="left:267px;top:82px;width:8px;height:8px;border-radius:50%;background:#27a558"></div>
<div style="left:301px;top:3px;width:96px;height:96px;border:6px solid #27a65a;background:#c9e9fb"></div>
<div style="left:317px;top:9px;height:15px;line-height:15px;font-size:10px;color:#222;white-space:nowrap">04/17/2019</div>
<div style="left:317px;top:24px;height:15px;line-height:15px;font-size:10px;color:#222;white-space:nowrap">04/11/2019</div>
<div style="left:317px;top:39px;height:15px;line-height:15px;font-size:10px;color:#222;white-space:nowrap">-6</div>
<div style="left:317px;top:54px;height:15px;line-height:15px;font-size:10px;color:#222;white-space:nowrap">0</div>
<div style="left:308px;top:71px;width:55px;height:8px;border:1px solid #5b7f95;background:#a9dcf6"></div>
<div style="left:367px;top:70px;width:8px;height:8px;border-radius:50%;background:#27a558"></div>
<div style="left:367px;top:82px;width:8px;height:8px;border-radius:50%;background:#27a558"></div>
<div style="left:401px;top:3px;width:96px;height:96px;border:6px solid #27a65a;background:#c9e9fb"></div>
<div style="left:417px;top:9px;height:15px;line-height:15px;font-size:10px;color:#222;white-space:nowrap">05/16/2019</div>
<div style="left:417px;top:24px;height:15px;line-height:15px;font-size:10px;color:#222;white-space:nowrap">05/25/2019</div>
<div style="left:417px;top:39px;height:15px;line-height:15px;font-size:10px;color:#222;white-space:nowrap">9</div>
<div style="left:417px;top:54px;height:15px;line-height:15px;font-size:10px;color:#222;white-space:nowrap">0</div>
<div style="left:408px;top:71px;width:55px;height:8px;border:1px solid #5b7f95;background:#a9dcf6"></div>
<div style="left:467px;top:70px;width:8px;height:8px;border-radius:50%;background:#27a558"></div>
<div style="left:467px;top:82px;width:8px;height:8px;border-radius:50%;background:#27a558"></div>
<div style="left:1px;top:103px;width:96px;height:96px;border:6px solid #fcc935;background:#c9e9fb"></div>
<div style="left:17px;top:109px;height:15px;line-height:15px;font-size:10px;color:#222;white-space:nowrap">01/10/2019</div>
<div style="left:17px;top:124px;height:15px;line-height:15px;font-size:10px;color:#222;white-space:nowrap">01/13/2019</div>
<div style="left:17px;top:139px;height:15px;line-height:15px;font-size:10px;color:#222;white-space:nowrap">2</div>
<div style="left:17px;top:154px;height:15px;line-height:15px;font-size:10px;color:#222;white-space:nowrap">0</div>
<div style="left:8px;top:171px;width:55px;height:8px;border:1px solid #5b7f95;background:#a9dcf6"></div>
<div style="left:67px;top:170px;width:8px;height:8px;border-radius:50%;background:#cc1122"></div>
<div style="left:67px;top:182px;width:8px;height:8px;border-radius:50%;background:#27a558"></div>
<div style="left:101px;top:103px;width:96px;height:96px;border:6px solid #27a65a;background:#c9e9fb"></div>
<div style="left:117px;top:109px;height:15px;line-height:15px;font-size:10px;color:#222;white-space:nowrap">02/13/2019</div>
<div style="left:117px;top:124px;height:15px;line-height:15px;font-size:10px;color:#222;white-space:nowrap">02/11/2019</div>
<div style="left:117px;top:139px;height:15px;line-height:15px;font-size:10px;color:#222;white-space:nowrap">-2</div>
<div style="left:117px;top:154px;height:15px;line-height:15px;font-size:10px;color:#222;white-space:nowrap">0</div>
<div style="left:108px;top:171px;width:55px;height:8px;border:1px solid #5b7f95;background:#a9dcf6"></div>
<div style="left:167px;top:170px;width:8px;height:8px;border-radius:50%;background:#27a558"></div>
<div style="left:167px;top:182px;width:8px;height:8px;border-radius:50%;background:#27a558"></div>
<div style="left:201px;top:103px;width:96px;height:96px;border:6px solid #27a65a;background:#c9e9fb"></div>
<div style="left:217px;top:109px;height:15px;line-height:15px;font-size:10px;color:#222;white-space:nowrap">03/25/2019</div>
<div style="left:217px;top:124px;height:15px;line-height:15px;font-size:10px;color:#222;white-space:nowrap">03/25/2019</div>
<div style="left:217px;top:139px;height:15px;line-height:15px;font-size:10px;color:#222;white-space:nowrap">0</div>
<div style="left:217px;top:154px;height:15px;line-height:15px;font-size:10px;color:#222;white-space:nowrap">-</div>
<div style="left:267px;top:170px;width:8px;height:8px;border-radius:50%;background:#27a558"></div>
<div style="left:267px;top:182px;width:8px;height:8px;border-radius:50%;background:#27a558"></div>
<div style="left:301px;top:103px;width:96px;height:96px;border:6px solid #27a65a;background:#c9e9fb"></div>
<div style="left:317px;top:109px;height:15px;line-height:15px;font-size:10px;color:#222;white-space:nowrap">03/25/2019</div>
<div style="left:317px;top:124px;height:15px;line-height:15px;font-size:10px;color:#222;white-space:nowrap">03/19/2019</div>
<div style="left:317px;top:139px;height:15px;line-height:15px;font-size:10px;color:#222;white-space:nowrap">-7</div>
<div style="left:317px;top:154px;height:15px;line-height:15px;font-size:10px;color:#222;white-space:nowrap">0</div>
<div style="left:308px;top:171px;width:55px;height:8px;border:1px solid #5b7f95;background:#a9dcf6"></div>
<div style="left:367px;top:170px;width:8px;height:8px;border-radius:50%;background:#27a558"></div>
<div style="left:367px;top:182px;width:8px;height:8px;border-radius:50%;background:#27a558"></div>
<div style="left:401px;top:103px;width:96px;height:96px;border:6px solid #27a65a;background:#c9e9fb"></div>
<div style="left:417px;top:109px;height:15px;line-height:15px;font-size:10px;color:#222;white-space:nowrap">05/22/2019</div>
<div style="left:417px;top:124px;height:15px;line-height:15px;font-size:10px;color:#222;white-space:nowrap">06/05/2019</div>
<div style="left:417px;top:139px;height:15px;line-height:15px;font-size:10px;color:#222;white-space:nowrap">13</div>
<div style="left:417px;top:154px;height:15px;line-height:15px;font-size:10px;color:#222;white-space:nowrap">0</div>
<div style="left:408px;top:171px;width:55px;height:8px;border:1px solid #5b7f95;background:#a9dcf6"></div>
<div style="left:467px;top:170px;width:8px;height:8px;border-radius:50%;background:#27a558"></div>
<div style="left:467px;top:182px;width:8px;height:8px;border-radius:50%;background:#27a558"></div>
<div style="left:1px;top:203px;width:96px;height:96px;border:6px solid #cc0011;background:#c9e9fb"></div>
<div style="left:17px;top:209px;height:15px;line-height:15px;font-size:10px;color:#222;white-space:nowrap">02/07/2019</div>
<div style="left:17px;top:224px;height:15px;line-height:15px;font-size:10px;color:#222;white-space:nowrap">02/15/2019</div>
<div style="left:17px;top:239px;height:15px;line-height:15px;font-size:10px;color:#222;white-space:nowrap">7</div>
<div style="left:17px;top:254px;height:15px;line-height:15px;font-size:10px;color:#222;white-space:nowrap">0</div>
<div style="left:8px;top:271px;width:55px;height:8px;border:1px solid #5b7f95;background:#a9dcf6"></div>
<div style="left:67px;top:270px;width:8px;height:8px;border-radius:50%;background:#cc1122"></div>
<div style="left:67px;top:282px;width:8px;height:8px;border-radius:50%;background:#27a558"></div>
<div style="left:101px;top:203px;width:96px;height:96px;border:6px solid #27a65a;background:#c9e9fb"></div>
<div style="left:117px;top:209px;height:15px;line-height:15px;font-size:10px;color:#222;white-space:nowrap">03/03/2019</div>
<div style="left:117px;top:224px;height:15px;line-height:15px;font-size:10px;color:#222;white-space:nowrap">03/03/2019</div>
<div style="left:117px;top:239px;height:15px;line-height:15px;font-size:10px;color:#222;white-space:nowrap">-1</div>
<div style="left:117px;top:254px;height:15px;line-height:15px;font-size:10px;color:#222;white-space:nowrap">0</div>
<div style="left:108px;top:271px;width:55px;height:8px;border:1px solid #5b7f95;background:#a9dcf6"></div>
<div style="left:167px;top:270px;width:8px;height:8px;border-radius:50%;background:#27a558"></div>
<div style="left:167px;top:282px;width:8px;height:8px;border-radius:50%;background:#27a558"></div>
<div style="left:201px;top:203px;width:96px;height:96px;border:6px solid #27a65a;background:#c9e9fb"></div>
<div style="left:217px;top:209px;height:15px;line-height:15px;font-size:10px;color:#222;white-space:nowrap">04/03/2019</div>
<div style="left:217px;top:224px;height:15px;line-height:15px;font-size:10px;color:#222;white-space:nowrap">04/03/2019</div>
<div style="left:217px;top:239px;height:15px;line-height:15px;font-size:10px;color:#222;white-space:nowrap">0</div>
<div style="left:217px;top:254px;height:15px;line-height:15px;font-size:10px;color:#222;white-space:nowrap">-</div>
<div style="left:267px;top:270px;width:8px;height:8px;border-radius:50%;background:#27a558"></div>
<div style="left:267px;top:282px;width:8px;height:8px;border-radius:50%;background:#27a558"></div>
<div style="left:301px;top:203px;width:96px;height:96px;border:6px solid #27a65a;background:#c9e9fb"></div>
<div style="left:317px;top:209px;height:15px;line-height:15px;font-size:10px;color:#222;white-space:nowrap">04/03/2019</div>
<div style="left:317px;top:224px;height:15px;line-height:15px;font-size:10px;color:#222;white-space:nowrap">03/30/2019</div>
<div style="left:317px;top:239px;height:15px;line-height:15px;font-size:10px;color:#222;white-space:nowrap">-5</div>
<div style="left:317px;top:254px;height:15px;line-height:15px;font-size:10px;color:#222;white-space:nowrap">0</div>
<div style="left:308px;top:271px;width:55px;height:8px;border:1px solid #5b7f95;background:#a9dcf6"></div>
<div style="left:367px;top:270px;width:8px;height:8px;border-radius:50%;background:#27a558"></div>
<div style="left:367px;top:282px;width:8px;height:8px;border-radius:50%;background:#27a558"></div>
<div style="left:401px;top:203px;width:96px;height:96px;border:6px solid #27a65a;background:#c9e9fb"></div>
<div style="left:417px;top:209px;height:15px;line-height:15px;font-size:10px;color:#222;white-space:nowrap">05/20/2019</div>
<div style="left:417px;top:224px;height:15px;line-height:15px;font-size:10px;color:#222;white-space:nowrap">06/01/2019</div>
<div style="left:417px;top:239px;height:15px;line-height:15px;font-size:10px;color:#222;white-space:nowrap">11</div>
<div style="left:417px;top:254px;height:15px;line-height:15px;font-size:10px;color:#222;white-space:nowrap">0</div>
<div style="left:408px;top:271px;width:55px;height:8px;border:1px solid #5b7f95;background:#a9dcf6"></div>
<div style="left:467px;top:270px;width:8px;height:8px;border-radius:50%;background:#27a558"></div>
<div style="left:467px;top:282px;width:8px;height:8px;border-radius:50%;background:#27a558"></div>
<div style="left:1px;top:303px;width:96px;height:96px;border:6px solid #fcc935;background:#c9e9fb"></div>
<div style="left:17px;top:309px;height:15px;line-height:15px;font-size:10px;color:#222;white-space:nowrap">02/13/2019</div>
<div style="left:17px;top:324px;height:15px;line-height:15px;font-size:10px;color:#222;white-space:nowrap">02/16/2019</div>
<div style="left:17px;top:339px;height:15px;line-height:15px;font-size:10px;color:#222;white-space:nowrap">3</div>
<div style="left:17px;top:354px;height:15px;line-height:15px;font-size:10px;color:#222;white-space:nowrap">0</div>
<div style="left:8px;top:371px;width:55px;height:8px;border:1px solid #5b7f95;background:#a9dcf6"></div>
<div style="left:67px;top:370px;width:8px;height:8px;border-radius:50%;background:#cc1122"></div>
<div style="left:67px;top:382px;width:8px;height:8px;border-radius:50%;background:#27a558"></div>
<div style="left:101px;top:303px;width:96px;height:96px;border:6px solid #27a65a;background:#c9e9fb"></div>
<div style="left:117px;top:309px;height:15px;line-height:15px;font-size:10px;color:#222;white-space:nowrap">03/13/2019</div>
<div style="left:117px;top:324px;height:15px;line-height:15px;font-size:10px;color:#222;white-space:nowrap">03/13/2019</div>
<div style="left:117px;top:339px;height:15px;line-height:15px;font-size:10px;color:#222;white-space:nowrap">-1</div>
<div style="left:117px;top:354px;height:15px;line-height:15px;font-size:10px;color:#222;white-space:nowrap">0</div>
<div style="left:108px;top:371px;width:55px;height:8px;border:1px solid #5b7f95;background:#a9dcf6"></div>
<div style="left:167px;top:370px;width:8px;height:8px;border-radius:50%;background:#27a558"></div>
<div style="left:167px;top:382px;width:8px;height:8px;border-radius:50%;background:#27a558"></div>
<div style="left:201px;top:303px;width:96px;height:96px;border:6px solid #27a65a;background:#c9e9fb"></div>
<div style="left:217px;top:309px;height:15px;line-height:15px;font-size:10px;color:#222;white-space:nowrap">04/13/2019</div>
<div style="left:217px;top:324px;height:15px;line-height:15px;font-size:10px;color:#222;white-space:nowrap">04/13/2019</div>
<div style="left:217px;top:339px;height:15px;line-height:15px;font-size:10px;color:#222;white-space:nowrap">0</div>
<div style="left:217px;top:354px;height:15px;line-height:15px;font-size:10px;color:#222;white-space:nowrap">-</div>
<div style="left:267px;top:370px;width:8px;height:8px;border-radius:50%;background:#27a558"></div>
<div style="left:267px;top:382px;width:8px;height:8px;border-radius:50%;background:#27a558"></div>
<div style="left:301px;top:303px;width:96px;height:96px;border:6px solid #27a65a;background:#c9e9fb"></div>
<div style="left:317px;top:309px;height:15px;line-height:15px;font-size:10px;color:#222;white-space:nowrap">04/13/2019</div>
<div style="left:317px;top:324px;height:15px;line-height:15px;font-size:10px;color:#222;white-space:nowrap">04/09/2019</div>
<div style="left:317px;top:339px;height:15px;line-height:15px;font-size:10px;color:#222;white-space:nowrap">-5</div>
<div style="left:317px;top:354px;height:15px;line-height:15px;font-size:10px;color:#222;white-space:nowrap">0</div>
<div style="left:308px;top:371px;width:55px;height:8px;border:1px solid #5b7f95;background:#a9dcf6"></div>
<div style="left:367px;top:370px;width:8px;height:8px;border-radius:50%;background:#27a558"></div>
<div style="left:367px;top:382px;width:8px;height:8px;border-radius:50%;background:#27a558"></div>
<div style="left:401px;top:303px;width:96px;height:96px;border:6px solid #27a65a;background:#c9e9fb"></div>
<div style="left:417px;top:309px;height:15px;line-height:15px;font-size:10px;color:#222;white-space:nowrap">05/30/2019</div>
<div style="left:417px;top:324px;height:15px;line-height:15px;font-size:10px;color:#222;white-space:nowrap">06/05/2019</div>
<div style="left:417px;top:339px;height:15px;line-height:15px;font-size:10px;color:#222;white-space:nowrap">5</div>
<div style="left:417px;top:354px;height:15px;line-height:15px;font-size:10px;color:#222;white-space:nowrap">0</div>
<div style="left:408px;top:371px;width:55px;height:8px;border:1px solid #5b7f95;background:#a9dcf6"></div>
<div style="left:467px;top:370px;width:8px;height:8px;border-radius:50%;background:#27a558"></div>
<div style="left:467px;top:382px;width:8px;height:8px;border-radius:50%;background:#27a558"></div>
<div style="left:1px;top:403px;width:96px;height:96px;border:6px solid #27a65a;background:#c9e9fb"></div>
<div style="left:17px;top:409px;height:15px;line-height:15px;font-size:10px;color:#222;white-space:nowrap">03/02/2019</div>
<div style="left:17px;top:424px;height:15px;line-height:15px;font-size:10px;color:#222;white-space:nowrap">03/02/2019</div>
<div style="left:17px;top:439px;height:15px;line-height:15px;font-size:10px;color:#222;white-space:nowrap">-1</div>
<div style="left:17px;top:454px;height:15px;line-height:15px;font-size:10px;color:#222;white-space:nowrap">0</div>
<div style="left:8px;top:471px;width:55px;height:8px;border:1px solid #5b7f95;background:#a9dcf6"></div>
<div style="left:67px;top:470px;width:8px;height:8px;border-radius:50%;background:#27a558"></div>
<div style="left:67px;top:482px;width:8px;height:8px;border-radius:50%;background:#27a558"></div>
<div style="left:101px;top:403px;width:96px;height:96px;border:6px solid #27a65a;background:#c9e9fb"></div>
<div style="left:117px;top:409px;height:15px;line-height:15px;font-size:10px;color:#222;white-space:nowrap">03/25/2019</div>
<div style="left:117px;top:424px;height:15px;line-height:15px;font-size:10px;color:#222;white-space:nowrap">03/23/2019</div>
<div style="left:117px;top:439px;height:15px;line-height:15px;font-size:10px;color:#222;white-space:nowrap">-3</div>
<div style="left:117px;top:454px;height:15px;line-height:15px;font-size:10px;color:#222;white-space:nowrap">0</div>
<div style="left:108px;top:471px;width:55px;height:8px;border:1px solid #5b7f95;background:#a9dcf6"></div>
<div style="left:167px;top:470px;width:8px;height:8px;border-radius:50%;background:#27a558"></div>
<div style="left:167px;top:482px;width:8px;height:8px;border-radius:50%;background:#27a558"></div>
<div style="left:201px;top:403px;width:96px;height:96px;border:6px solid #27a65a;background:#c9e9fb"></div>
<div style="left:217px;top:409px;height:15px;line-height:15px;font-size:10px;color:#222;white-space:nowrap">04/20/2019</div>
<div style="left:217px;top:424px;height:15px;line-height:15px;font-size:10px;color:#222;white-space:nowrap">04/20/2019</div>
<div style="left:217px;top:439px;height:15px;line-height:15px;font-size:10px;color:#222;white-space:nowrap">0</div>
<div style="left:217px;top:454px;height:15px;line-height:15px;font-size:10px;color:#222;white-space:nowrap">-</div>
<div style="left:267px;top:470px;width:8px;height:8px;border-radius:50%;background:#27a558"></div>
<div style="left:267px;top:482px;width:8px;height:8px;border-radius:50%;background:#27a558"></div>
<div style="left:301px;top:403px;width:96px;height:96px;border:6px solid #27a65a;background:#c9e9fb"></div>
<div style="left:317px;top:409px;height:15px;line-height:15px;font-size:10px;color:#222;white-space:nowrap">04/20/2019</div>
<div style="left:317px;top:424px;height:15px;line-height:15px;font-size:10px;color:#222;white-space:nowrap">04/14/2019</div>
<div style="left:317px;top:439px;height:15px;line-height:15px;font-size:10px;color:#222;white-space:nowrap">-6</div>
<div style="left:317px;top:454px;height:15px;line-height:15px;font-size:10px;color:#222;white-space:nowrap">0</div>
<div style="left:308px;top:471px;width:55px;height:8px;border:1px solid #5b7f95;background:#a9dcf6"></div>
<div style="left:367px;top:470px;width:8px;height:8px;border-radius:50%;background:#27a558"></div>
<div style="left:367px;top:482px;width:8px;height:8px;border-radius:50%;background:#27a558"></div>
<div style="left:401px;top:403px;width:96px;height:96px;border:6px solid #27a65a;background:#c9e9fb"></div>
<div style="left:417px;top:409px;height:15px;line-height:15px;font-size:10px;color:#222;white-space:nowrap">05/31/2019</div>
<div style="left:417px;top:424px;height:15px;line-height:15px;font-size:10px;color:#222;white-space:nowrap">06/05/2019</div>
<div style="left:417px;top:439px;height:15px;line-height:15px;font-size:10px;color:#222;white-space:nowrap">4</div>
<div style="left:417px;top:454px;height:15px;line-height:15px;font-size:10px;color:#222;white-space:nowrap">0</div>
<div style="left:408px;top:471px;width:55px;height:8px;border:1px solid #5b7f95;background:#a9dcf6"></div>
<div style="left:467px;top:470px;width:8px;height:8px;border-radius:50%;background:#27a558"></div>
<div style="left:467px;top:482px;width:8px;height:8px;border-radius:50%;background:#27a558"></div>
<div style="left:1px;top:503px;width:96px;height:96px;border:6px solid #27a65a;background:#c9e9fb"></div>
<div style="left:17px;top:509px;height:15px;line-height:15px;font-size:10px;color:#222;white-space:nowrap">03/04/2019</div>
<div style="left:17px;top:524px;height:15px;line-height:15px;font-size:10px;color:#222;white-space:nowrap">03/03/2019</div>
<div style="left:17px;top:539px;height:15px;line-height:15px;font-size:10px;color:#222;white-space:nowrap">-1</div>
<div style="left:17px;top:554px;height:15px;line-height:15px;font-size:10px;color:#222;white-space:nowrap">0</div>
<div style="left:8px;top:571px;width:55px;height:8px;border:1px solid #5b7f95;background:#a9dcf6"></div>
<div style="left:67px;top:570px;width:8px;height:8px;border-radius:50%;background:#27a558"></div>
<div style="left:67px;top:582px;width:8px;height:8px;border-radius:50%;background:#27a558"></div>
<div style="left:101px;top:503px;width:96px;height:96px;border:6px solid #27a65a;background:#c9e9fb"></div>
<div style="left:117px;top:509px;height:15px;line-height:15px;font-size:10px;color:#222;white-space:nowrap">03/27/2019</div>
<div style="left:117px;top:524px;height:15px;line-height:15px;font-size:10px;color:#222;white-space:nowrap">03/24/2019</div>
<div style="left:117px;top:539px;height:15px;line-height:15px;font-size:10px;color:#222;white-space:nowrap">-3</div>
<div style="left:117px;top:554px;height:15px;line-height:15px;font-size:10px;color:#222;white-space:nowrap">0</div>
<div style="left:108px;top:571px;width:55px;height:8px;border:1px solid #5b7f95;background:#a9dcf6"></div>
<div style="left:167px;top:570px;width:8px;height:8px;border-radius:50%;background:#27a558"></div>
<div style="left:167px;top:582px;width:8px;height:8px;border-radius:50%;background:#27a558"></div>
<div style="left:201px;top:503px;width:96px;height:96px;border:6px solid #27a65a;background:#c9e9fb"></div>
<div style="left:217px;top:509px;height:15px;line-height:15px;font-size:10px;color:#222;white-space:nowrap">04/22/2019</div>
<div style="left:217px;top:524px;height:15px;line-height:15px;font-size:10px;color:#222;white-space:nowrap">04/22/2019</div>
<div style="left:217px;top:539px;height:15px;line-height:15px;font-size:10px;color:#222;white-space:nowrap">0</div>
<div style="left:217px;top:554px;height:15px;line-height:15px;font-size:10px;color:#222;white-space:nowrap">-</div>
<div style="left:267px;top:570px;width:8px;height:8px;border-radius:50%;background:#27a558"></div>
<div style="left:267px;top:582px;width:8px;height:8px;border-radius:50%;background:#27a558"></div>
<div style="left:301px;top:503px;width:96px;height:96px;border:6px solid #27a65a;background:#c9e9fb"></div>
<div style="left:317px;top:509px;height:15px;line-height:15px;font-size:10px;color:#222;white-space:nowrap">04/22/2019</div>
<div style="left:317px;top:524px;height:15px;line-height:15px;font-size:10px;color:#222;white-space:nowrap">04/16/2019</div>
<div style="left:317px;top:539px;height:15px;line-height:15px;font-size:10px;color:#222;white-space:nowrap">-6</div>
<div style="left:317px;top:554px;height:15px;line-height:15px;font-size:10px;color:#222;white-space:nowrap">0</div>
<div style="left:308px;top:571px;width:55px;height:8px;border:1px solid #5b7f95;background:#a9dcf6"></div>
<div style="left:367px;top:570px;width:8px;height:8px;border-radius:50%;background:#27a558"></div>
<div style="left:367px;top:582px;width:8px;height:8px;border-radius:50%;background:#27a558"></div>
<div style="left:401px;top:503px;width:96px;height:96px;border:6px solid #27a65a;background:#c9e9fb"></div>
<div style="left:417px;top:509px;height:15px;line-height:15px;font-size:10px;color:#222;white-space:nowrap">06/02/2019</div>
<div style="left:417px;top:524px;height:15px;line-height:15px;font-size:10px;color:#222;white-space:nowrap">06/07/2019</div>
<div style="left:417px;top:539px;height:15px;line-height:15px;font-size:10px;color:#222;white-space:nowrap">5</div>
<div style="left:417px;top:554px;height:15px;line-height:15px;font-size:10px;color:#222;white-space:nowrap">0</div>
<div style="left:408px;top:571px;width:55px;height:8px;border:1px solid #5b7f95;background:#a9dcf6"></div>
<div style="left:467px;top:570px;width:8px;height:8px;border-radius:50%;background:#27a558"></div>
<div style="left:467px;top:582px;width:8px;height:8px;border-radius:50%;background:#27a558"></div>
<div style="left:1px;top:603px;width:96px;height:96px;border:6px solid #cc0011;background:#c9e9fb"></div>
<div style="left:17px;top:609px;height:15px;line-height:15px;font-size:10px;color:#222;white-space:nowrap">03/08/2019</div>
<div style="left:17px;top:624px;height:15px;line-height:15px;font-size:10px;color:#222;white-space:nowrap"></div>
<div style="left:17px;top:639px;height:15px;line-height:15px;font-size:10px;color:#222;white-space:nowrap"></div>
<div style="left:17px;top:654px;height:15px;line-height:15px;font-size:10px;color:#222;white-space:nowrap"></div>
<div style="left:8px;top:671px;width:55px;height:8px;border:1px solid #5b7f95;background:#a9dcf6"></div>
<div style="left:67px;top:670px;width:8px;height:8px;border-radius:50%;background:#27a558"></div>
<div style="left:67px;top:682px;width:8px;height:8px;border-radius:50%;background:#27a558"></div>
<div style="left:101px;top:603px;width:96px;height:96px;border:6px solid #27a65a;background:#c9e9fb"></div>
<div style="left:117px;top:609px;height:15px;line-height:15px;font-size:10px;color:#222;white-space:nowrap">03/31/2019</div>
<div style="left:117px;top:624px;height:15px;line-height:15px;font-size:10px;color:#222;white-space:nowrap"></div>
<div style="left:117px;top:639px;height:15px;line-height:15px;font-size:10px;color:#222;white-space:nowrap"></div>
<div style="left:117px;top:654px;height:15px;line-height:15px;font-size:10px;color:#222;white-space:nowrap"></div>
<div style="left:108px;top:671px;width:55px;height:8px;border:1px solid #5b7f95;background:#a9dcf6"></div>
<div style="left:167px;top:670px;width:8px;height:8px;border-radius:50%;background:#27a558"></div>
<div style="left:167px;top:682px;width:8px;height:8px;border-radius:50%;background:#27a558"></div>
<div style="left:201px;top:603px;width:96px;height:96px;border:6px solid #27a65a;background:#c9e9fb"></div>
<div style="left:217px;top:609px;height:15px;line-height:15px;font-size:10px;color:#222;white-space:nowrap">04/26/2019</div>
<div style="left:217px;top:624px;height:15px;line-height:15px;font-size:10px;color:#222;white-space:nowrap"></div>
<div style="left:217px;top:639px;height:15px;line-height:15px;font-size:10px;color:#222;white-space:nowrap"></div>
<div style="left:217px;top:654px;height:15px;line-height:15px;font-size:10px;color:#222;white-space:nowrap"></div>
<div style="left:208px;top:671px;width:55px;height:8px;border:1px solid #5b7f95;background:#a9dcf6"></div>
<div style="left:267px;top:670px;width:8px;height:8px;border-radius:50%;background:#27a558"></div>
<div style="left:267px;top:682px;width:8px;height:8px;border-radius:50%;background:#27a558"></div>
<div style="left:301px;top:603px;width:96px;height:96px;border:6px solid #27a65a;background:#c9e9fb"></div>
<div style="left:317px;top:609px;height:15px;line-height:15px;font-size:10px;color:#222;white-space:nowrap">04/26/2019</div>
<div style="left:317px;top:624px;height:15px;line-height:15px;font-size:10px;color:#222;white-space:nowrap"></div>
<div style="left:317px;top:639px;height:15px;line-height:15px;font-size:10px;color:#222;white-space:nowrap"></div>
<div style="left:317px;top:654px;height:15px;line-height:15px;font-size:10px;color:#222;white-space:nowrap"></div>
<div style="left:308px;top:671px;width:55px;height:8px;border:1px solid #5b7f95;background:#a9dcf6"></div>
<div style="left:367px;top:670px;width:8px;height:8px;border-radius:50%;background:#27a558"></div>
<div style="left:367px;top:682px;width:8px;height:8px;border-radius:50%;background:#27a558"></div>
<div style="left:401px;top:603px;width:96px;height:96px;border:6px solid #27a65a;background:#c9e9fb"></div>
<div style="left:417px;top:609px;height:15px;line-height:15px;font-size:10px;color:#222;white-space:nowrap">06/06/2019</div>
<div style="left:417px;top:624px;height:15px;line-height:15px;font-size:10px;color:#222;white-space:nowrap"></div>
<div style="left:417px;top:639px;height:15px;line-height:15px;font-size:10px;color:#222;white-space:nowrap"></div>
<div style="left:417px;top:654px;height:15px;line-height:15px;font-size:10px;color:#222;white-space:nowrap"></div>
<div style="left:408px;top:671px;width:55px;height:8px;border:1px solid #5b7f95;background:#a9dcf6"></div>
<div style="left:467px;top:670px;width:8px;height:8px;border-radius:50%;background:#27a558"></div>
<div style="left:467px;top:682px;width:8px;height:8px;border-radius:50%;background:#27a558"></div>
</div>
<div style="left:379px;top:155px;width:101px;height:101px;border:1px solid #e08a8a;border-left-color:#6aa4dc;border-top-color:#c4def3"></div>
<div style="left:54px;top:777px;width:934px;height:21px;background:#e3eff7"></div>
<div style="left:84px;top:777.5px;height:18px;line-height:18px;font-size:12px;color:#666;letter-spacing:0.37px;white-space:nowrap;">–/114</div>
<div style="left:54px;top:797.5px;width:934px;height:1.5px;background:#a9caec"></div>
<div style="left:54px;top:798.5px;width:934px;height:312px;background:#fff"></div>
<div style="left:54px;top:798.5px;width:934px;height:30.5px;background:#f5f5f5"></div>
<svg viewBox="0 0 120 31" preserveAspectRatio="none" style="left:246px;top:798.5px;width:120px;height:30.5px"><path d="M0 0 H110 L120 31 H0Z" fill="#b8d4f1"/></svg>
<div style="left:104.2px;top:805.7px;height:18px;line-height:18px;font-size:12px;color:#666;letter-spacing:0.03px;white-space:nowrap;">WBS detail</div>
<div style="left:196px;top:805.7px;height:18px;line-height:18px;font-size:12px;color:#666;letter-spacing:0.51px;white-space:nowrap;">Order</div>
<div style="left:251px;top:804.7px;height:18px;line-height:18px;font-size:12px;color:#3a78b8;letter-spacing:0.12px;white-space:nowrap;">Buy Shortages</div>
<div style="left:958px;top:798.5px;width:1px;height:30.5px;background:#e2e2e2"></div>
<svg viewBox="0 0 16 16" style="left:967.0px;top:810.0px;width:12px;height:12px;color:#555;"><path d="M14.9 3.6 L12.2 6.3 L10.2 5.8 L9.7 3.8 L12.4 1.1 A4.3 4.3 0 0 0 7.1 6.6 L1.3 12.4 A1.65 1.65 0 0 0 3.6 14.7 L9.4 8.9 A4.3 4.3 0 0 0 14.9 3.6Z" fill="currentColor"/></svg>
<svg viewBox="0 0 16 16" style="left:65.5px;top:831.5px;width:14.5px;height:14.5px;color:#cfcfcf;"><path d="M2.2 11 L8 5.2 L13.8 11" fill="none" stroke="currentColor" stroke-width="2.9"/></svg>
<svg viewBox="0 0 16 16" style="left:65.5px;top:864.8px;width:14.5px;height:14.5px;color:#d6d6d6;"><path d="M0.8 1.4 H13.4 L8.8 7.4 V14.6 L5.6 12 V7.4Z" fill="currentColor"/><path d="M9.3 4.4 L14.7 10.6 M14.7 4.4 L9.3 10.6" stroke="currentColor" stroke-width="4.2" stroke-linecap="round" fill="none"/><path d="M9.3 4.4 L14.7 10.6 M14.7 4.4 L9.3 10.6" stroke="#fff" stroke-width="2.2" stroke-linecap="round" fill="none"/></svg>
<svg viewBox="0 0 16 16" style="left:65.5px;top:899.4px;width:14.5px;height:14.5px;color:#efefef;"><path d="M0.8 2.4 H11 L7.4 7 V12.6 L4.8 10.6 V7Z" fill="currentColor"/><circle cx="10.5" cy="6" r="2.3" fill="currentColor"/><circle cx="13" cy="8.6" r="2.3" fill="currentColor"/><circle cx="10.5" cy="11" r="2.3" fill="currentColor"/><circle cx="10.5" cy="6" r="1" fill="#fff"/><circle cx="13" cy="8.6" r="1" fill="#fff"/><circle cx="10.5" cy="11" r="1" fill="#fff"/></svg>
<svg viewBox="0 0 16 16" style="left:65.5px;top:934.8px;width:14.5px;height:14.5px;color:#e9e9e9;"><path d="M0.8 7 L6.2 1.2 L11.6 7Z M0.8 9.4 L6.2 15.2 L11.6 9.4Z" fill="currentColor"/><path d="M8.6 5 L14.6 11.4 M14.6 5 L8.6 11.4" stroke="currentColor" stroke-width="4.4" stroke-linecap="round" fill="none"/><path d="M8.6 5 L14.6 11.4 M14.6 5 L8.6 11.4" stroke="#fff" stroke-width="2.3" stroke-linecap="round" fill="none"/></svg>
<svg viewBox="0 0 16 16" style="left:65.5px;top:970.2px;width:14.5px;height:14.5px;color:#d6d6d6;"><path d="M11.6 10.4 V13 A1.8 1.8 0 0 1 9.8 14.8 H3 A1.8 1.8 0 0 1 1.2 13 V6.2 A1.8 1.8 0 0 1 3 4.4 H6.4" fill="none" stroke="currentColor" stroke-width="1.5"/><path d="M4.6 11.4 C8.8 11.6 10.4 9.6 10.4 5.4" fill="none" stroke="currentColor" stroke-width="2.8"/><path d="M6.4 5.9 L10.4 0.7 L14.4 5.9Z" fill="currentColor"/></svg>
<svg viewBox="0 0 16 16" style="left:65.5px;top:1004.8px;width:14.5px;height:14.5px;color:#d6d6d6;"><path d="M5 11.6 H3.4 A1.8 1.8 0 0 1 1.6 9.8 V3 A1.8 1.8 0 0 1 3.4 1.2 H10 A1.8 1.8 0 0 1 11.8 3 V4.2" fill="none" stroke="currentColor" stroke-width="1.5"/><path d="M5.4 4.6 C9.6 4.4 11.4 6.4 11.4 10.4" fill="none" stroke="currentColor" stroke-width="2.8"/><path d="M7.4 10 L11.4 15.3 L15.4 10Z" fill="currentColor"/></svg>
<svg viewBox="0 0 16 16" style="left:65.5px;top:1040.2px;width:14.5px;height:14.5px;color:#d6d6d6;"><path d="M7.4 4.6 H15 V12.4 L12.6 15 H5.2 V9.6" fill="none" stroke="currentColor" stroke-width="1.3"/><path d="M15 12.4 H12.6 V15" fill="none" stroke="currentColor" stroke-width="1"/><g transform="translate(1.2 0.4) scale(.52)"><path d="M15.51 6.81 L15.51 9.19 L13.23 9.34 L12.65 10.75 L14.15 12.47 L12.47 14.15 L10.75 12.65 L9.34 13.23 L9.19 15.51 L6.81 15.51 L6.66 13.23 L5.25 12.65 L3.53 14.15 L1.85 12.47 L3.35 10.75 L2.77 9.34 L0.49 9.19 L0.49 6.81 L2.77 6.66 L3.35 5.25 L1.85 3.53 L3.53 1.85 L5.25 3.35 L6.66 2.77 L6.81 0.49 L9.19 0.49 L9.34 2.77 L10.75 3.35 L12.47 1.85 L14.15 3.53 L12.65 5.25 L13.23 6.66Z M10.6 8 A2.6 2.6 0 1 0 5.4 8 A2.6 2.6 0 1 0 10.6 8Z" fill="currentColor" fill-rule="evenodd"/></g><path d="M2.4 6.6 L1 8 L2.6 9.8 L4.2 8.4" fill="none" stroke="currentColor" stroke-width="1.2"/></svg>
<svg viewBox="0 0 16 16" style="left:65.5px;top:1074.8px;width:14.5px;height:14.5px;color:#cfcfcf;"><path d="M13 8.6 A5.2 5.2 0 1 1 11.4 4.2" fill="none" stroke="currentColor" stroke-width="1.9"/><path d="M13.6 1.4 V6.4 H8.6Z" fill="currentColor"/></svg>
<div style="left:61px;top:855px;width:19px;height:1px;background:#f0f0f0"></div>
<div style="left:61px;top:890px;width:19px;height:1px;background:#f0f0f0"></div>
<div style="left:61px;top:925px;width:19px;height:1px;background:#f0f0f0"></div>
<div style="left:61px;top:960px;width:19px;height:1px;background:#f0f0f0"></div>
<div style="left:61px;top:995px;width:19px;height:1px;background:#f0f0f0"></div>
<div style="left:61px;top:1030px;width:19px;height:1px;background:#f0f0f0"></div>
<div style="left:61px;top:1065px;width:19px;height:1px;background:#f0f0f0"></div>
<div style="left:88px;top:829px;width:1px;height:281px;background:#e4e4e4"></div>
<div class="clip" style="left:0;top:829px;width:988px;height:281px">
<div style="left:89px;top:0px;width:899px;height:30px;background:#546476"></div>
<svg viewBox="0 0 16 16" style="left:98.8px;top:10.0px;width:12px;height:12px;color:#e9eef3;"><rect x="2.2" y="2.6" width="11.6" height="10.8" rx="2.2" fill="none" stroke="currentColor" stroke-width="1.8"/></svg>
<div style="left:119px;top:0px;width:1px;height:30px;background:#3e4c5b"></div>
<div style="left:132.3px;top:7.699999999999999px;height:18px;line-height:18px;font-size:12px;color:#e9eef3;letter-spacing:-0.05px;white-space:nowrap;text-shadow:0 0 .3px #e9eef3;">Col</div>
<div style="left:169px;top:0px;width:1px;height:30px;background:#3e4c5b"></div>
<div style="left:179.0px;top:7.699999999999999px;height:18px;line-height:18px;font-size:12px;color:#e9eef3;letter-spacing:0.13px;white-space:nowrap;text-shadow:0 0 .3px #e9eef3;">Criti...</div>
<div style="left:227px;top:0px;width:1px;height:30px;background:#3e4c5b"></div>
<div style="left:242.7px;top:7.699999999999999px;height:18px;line-height:18px;font-size:12px;color:#e9eef3;letter-spacing:0.34px;white-space:nowrap;text-shadow:0 0 .3px #e9eef3;text-decoration:underline;">Parent Order</div>
<div style="left:337.5px;top:0px;width:1px;height:30px;background:#3e4c5b"></div>
<div style="left:350.0px;top:7.699999999999999px;height:18px;line-height:18px;font-size:12px;color:#e9eef3;letter-spacing:0.29px;white-space:nowrap;text-shadow:0 0 .3px #e9eef3;text-decoration:underline;">Supplier</div>
<div style="left:414.5px;top:0px;width:1px;height:30px;background:#3e4c5b"></div>
<div style="left:455.1px;top:7.699999999999999px;height:18px;line-height:18px;font-size:12px;color:#e9eef3;letter-spacing:0.34px;white-space:nowrap;text-shadow:0 0 .3px #e9eef3;text-decoration:underline;">Parent Item</div>
<div style="left:567px;top:0px;width:1px;height:30px;background:#3e4c5b"></div>
<div style="left:599.7px;top:7.699999999999999px;height:18px;line-height:18px;font-size:12px;color:#e9eef3;letter-spacing:0.36px;white-space:nowrap;text-shadow:0 0 .3px #e9eef3;text-decoration:underline;">Comp Item</div>
<div style="left:700px;top:0px;width:1px;height:30px;background:#3e4c5b"></div>
<div style="left:715.9px;top:7.699999999999999px;height:18px;line-height:18px;font-size:12px;color:#e9eef3;letter-spacing:0.04px;white-space:nowrap;text-shadow:0 0 .3px #e9eef3;">Req Date</div>
<div style="left:788.5px;top:0px;width:1px;height:30px;background:#3e4c5b"></div>
<div style="left:804.0px;top:7.699999999999999px;height:18px;line-height:18px;font-size:12px;color:#e9eef3;letter-spacing:0.15px;white-space:nowrap;text-shadow:0 0 .3px #e9eef3;">Pl. Duedate</div>
<div style="left:889.5px;top:0px;width:1px;height:30px;background:#3e4c5b"></div>
<div style="left:900.5px;top:7.699999999999999px;height:18px;line-height:18px;font-size:12px;color:#e9eef3;letter-spacing:0.28px;white-space:nowrap;text-shadow:0 0 .3px #e9eef3;">Delta</div>
<div style="left:946.5px;top:0px;width:1px;height:30px;background:#3e4c5b"></div>
<div style="left:955.8px;top:7.699999999999999px;height:18px;line-height:18px;font-size:12px;color:#e9eef3;letter-spacing:-0.34px;white-space:nowrap;text-shadow:0 0 .3px #e9eef3;">ABC Cl...</div>
<div style="left:1017px;top:0px;width:1px;height:30px;background:#3e4c5b"></div>
<div style="left:119px;top:0px;width:1px;height:30px;background:#3f5f86"></div>
<div class="fi" style="left:123.5px;top:34px;width:39.5px;height:25px;"></div>
<div class="fi" style="left:173.5px;top:34px;width:47.5px;height:25px;"></div>
<div class="fi" style="left:231.5px;top:34px;width:100.0px;height:25px;"></div>
<div class="fi" style="left:342.0px;top:34px;width:66.5px;height:25px;"></div>
<div class="fi" style="left:419.0px;top:34px;width:142.0px;height:25px;"></div>
<div class="fi" style="left:571.5px;top:34px;width:122.5px;height:25px;"></div>
<div class="fi" style="left:704.5px;top:34px;width:78.0px;height:25px;"></div>
<div class="fi" style="left:793.0px;top:34px;width:90.5px;height:25px;"></div>
<div class="fi" style="left:894.0px;top:34px;width:46.5px;height:25px;"></div>
<div class="fi" style="left:951.0px;top:34px;width:60.0px;height:25px;"></div>
<div style="left:119.5px;top:69px;width:870px;height:20px;background:#f7f7f7"></div>
<div style="left:89px;top:69px;width:30.5px;height:20px;background:#eeeeee"></div>
<div style="left:119.5px;top:89px;width:870px;height:20px;background:#fff"></div>
<div style="left:89px;top:89px;width:30.5px;height:20px;background:#eeeeee"></div>
<div style="left:119.5px;top:109px;width:870px;height:20px;background:#f7f7f7"></div>
<div style="left:89px;top:109px;width:30.5px;height:20px;background:#eeeeee"></div>
<div style="left:119.5px;top:129px;width:870px;height:20px;background:#fff"></div>
<div style="left:89px;top:129px;width:30.5px;height:20px;background:#eeeeee"></div>
<div style="left:119.5px;top:149px;width:870px;height:20px;background:#f7f7f7"></div>
<div style="left:89px;top:149px;width:30.5px;height:20px;background:#eeeeee"></div>
<div style="left:119.5px;top:169px;width:870px;height:20px;background:#fff"></div>
<div style="left:89px;top:169px;width:30.5px;height:20px;background:#eeeeee"></div>
<div style="left:119.5px;top:189px;width:870px;height:20px;background:#f7f7f7"></div>
<div style="left:89px;top:189px;width:30.5px;height:20px;background:#eeeeee"></div>
<div style="left:119.5px;top:209px;width:870px;height:20px;background:#fff"></div>
<div style="left:89px;top:209px;width:30.5px;height:20px;background:#eeeeee"></div>
<div style="left:119.5px;top:229px;width:870px;height:20px;background:#f7f7f7"></div>
<div style="left:89px;top:229px;width:30.5px;height:20px;background:#eeeeee"></div>
<div style="left:119.5px;top:249px;width:870px;height:13px;background:#fff"></div>
<div style="left:89px;top:249px;width:30.5px;height:13px;background:#eeeeee"></div>
<div style="left:89px;top:89px;width:900px;height:1px;background:#dedede"></div>
<div style="left:89px;top:109px;width:900px;height:1px;background:#dedede"></div>
<div style="left:89px;top:129px;width:900px;height:1px;background:#dedede"></div>
<div style="left:89px;top:149px;width:900px;height:1px;background:#dedede"></div>
<div style="left:89px;top:169px;width:900px;height:1px;background:#dedede"></div>
<div style="left:89px;top:189px;width:900px;height:1px;background:#dedede"></div>
<div style="left:89px;top:209px;width:900px;height:1px;background:#dedede"></div>
<div style="left:89px;top:229px;width:900px;height:1px;background:#dedede"></div>
<div style="left:89px;top:249px;width:900px;height:1px;background:#dedede"></div>
<div style="left:94.5px;top:70.5px;height:18px;line-height:18px;font-size:12px;color:#555;letter-spacing:0.19px;white-space:nowrap;">1</div>
<div style="left:134.5px;top:70.0px;width:19px;height:17px;border-radius:3.5px;background:#ff7f00;box-shadow:0 0 0 .6px rgba(170,170,120,.55)"></div>
<div style="left:192.5px;top:72.5px;width:11px;height:11px;border:1px solid #c6c6c6;border-radius:2px;background:#ebebeb"></div><svg viewBox="0 0 12 12" style="left:192.0px;top:71.5px;width:12px;height:12px"><path d="M2.6 6.2 L5 8.8 L9.6 2.8" fill="none" stroke="#8a8a8a" stroke-width="1.9"/></svg>
<div class="clip" style="left:242.3px;top:69.5px;width:95.2px;height:20px"><div style="left:0px;top:1.0px;height:18px;line-height:18px;font-size:12px;color:#333;letter-spacing:0.08px;white-space:nowrap;">F000000050.0002</div></div>
<div class="clip" style="left:352px;top:69.5px;width:62px;height:20px"><div style="left:0px;top:1.0px;height:18px;line-height:18px;font-size:12px;color:#333;letter-spacing:-0.03px;white-space:nowrap;">F10077</div></div>
<div class="clip" style="left:429.3px;top:69.5px;width:137px;height:20px"><div style="left:0px;top:1.0px;height:18px;line-height:18px;font-size:12px;color:#333;letter-spacing:-0.53px;white-space:nowrap;">LT_WINDING_1_A_SST</div></div>
<div class="clip" style="left:582px;top:69.5px;width:118px;height:20px"><div style="left:0px;top:1.0px;height:18px;line-height:18px;font-size:12px;color:#333;letter-spacing:0.07px;white-space:nowrap;">P1642697</div></div>
<div class="clip" style="left:715.3px;top:69.5px;width:73px;height:20px"><div style="left:0px;top:1.0px;height:18px;line-height:18px;font-size:12px;color:#333;letter-spacing:0.37px;white-space:nowrap;">03/01/2019</div></div>
<div class="clip" style="left:800px;top:69.5px;width:74.3px;height:20px"><div style="left:0px;top:1.0px;height:18px;line-height:18px;font-size:12px;color:#333;letter-spacing:0.37px;white-space:nowrap;width:74.3px;text-align:right;text-indent:-0.37px;">03/01/2019</div></div>
<div class="clip" style="left:900px;top:69.5px;width:31.2px;height:20px"><div style="left:0px;top:1.0px;height:18px;line-height:18px;font-size:12px;color:#333;letter-spacing:0.19px;white-space:nowrap;width:31.2px;text-align:right;text-indent:-0.19px;">0</div></div>
<div class="clip" style="left:961px;top:69.5px;width:27px;height:20px"><div style="left:0px;top:1.0px;height:18px;line-height:18px;font-size:12px;color:#333;letter-spacing:-1.09px;white-space:nowrap;">C</div></div>
<div style="left:94.5px;top:90.5px;height:18px;line-height:18px;font-size:12px;color:#555;letter-spacing:0.19px;white-space:nowrap;">2</div>
<div style="left:134.5px;top:90.0px;width:19px;height:17px;border-radius:3.5px;background:#ffff00;box-shadow:0 0 0 .6px rgba(170,170,120,.55)"></div>
<div style="left:192.5px;top:92.5px;width:11px;height:11px;border:1px solid #c6c6c6;border-radius:2px;background:#ebebeb"></div><svg viewBox="0 0 12 12" style="left:192.0px;top:91.5px;width:12px;height:12px"><path d="M2.6 6.2 L5 8.8 L9.6 2.8" fill="none" stroke="#8a8a8a" stroke-width="1.9"/></svg>
<div class="clip" style="left:242.3px;top:89.5px;width:95.2px;height:20px"><div style="left:0px;top:1.0px;height:18px;line-height:18px;font-size:12px;color:#333;letter-spacing:0.08px;white-space:nowrap;">F000000050.0002</div></div>
<div class="clip" style="left:352px;top:89.5px;width:62px;height:20px"><div style="left:0px;top:1.0px;height:18px;line-height:18px;font-size:12px;color:#333;letter-spacing:-0.03px;white-space:nowrap;">F23471</div></div>
<div class="clip" style="left:429.3px;top:89.5px;width:137px;height:20px"><div style="left:0px;top:1.0px;height:18px;line-height:18px;font-size:12px;color:#333;letter-spacing:-0.53px;white-space:nowrap;">LT_WINDING_1_A_SST</div></div>
<div class="clip" style="left:582px;top:89.5px;width:118px;height:20px"><div style="left:0px;top:1.0px;height:18px;line-height:18px;font-size:12px;color:#333;letter-spacing:-0.52px;white-space:nowrap;">LT_WINDING_BUY_SST</div></div>
<div class="clip" style="left:715.3px;top:89.5px;width:73px;height:20px"><div style="left:0px;top:1.0px;height:18px;line-height:18px;font-size:12px;color:#333;letter-spacing:0.37px;white-space:nowrap;">03/01/2019</div></div>
<div class="clip" style="left:800px;top:89.5px;width:74.3px;height:20px"><div style="left:0px;top:1.0px;height:18px;line-height:18px;font-size:12px;color:#333;letter-spacing:0.37px;white-space:nowrap;width:74.3px;text-align:right;text-indent:-0.37px;">02/24/2019</div></div>
<div class="clip" style="left:900px;top:89.5px;width:31.2px;height:20px"><div style="left:0px;top:1.0px;height:18px;line-height:18px;font-size:12px;color:#333;letter-spacing:0.03px;white-space:nowrap;width:31.2px;text-align:right;text-indent:-0.03px;">-5</div></div>
<div class="clip" style="left:961px;top:89.5px;width:27px;height:20px"><div style="left:0px;top:1.0px;height:18px;line-height:18px;font-size:12px;color:#333;letter-spacing:-0.23px;white-space:nowrap;">B</div></div>
<div style="left:94.5px;top:110.5px;height:18px;line-height:18px;font-size:12px;color:#555;letter-spacing:0.19px;white-space:nowrap;">3</div>
<div style="left:134.5px;top:110.0px;width:19px;height:17px;border-radius:3.5px;background:#ffff00;box-shadow:0 0 0 .6px rgba(170,170,120,.55)"></div>
<div style="left:192.5px;top:112.5px;width:11px;height:11px;border:1px solid #c6c6c6;border-radius:2px;background:#ebebeb"></div><svg viewBox="0 0 12 12" style="left:192.0px;top:111.5px;width:12px;height:12px"><path d="M2.6 6.2 L5 8.8 L9.6 2.8" fill="none" stroke="#8a8a8a" stroke-width="1.9"/></svg>
<div class="clip" style="left:242.3px;top:109.5px;width:95.2px;height:20px"><div style="left:0px;top:1.0px;height:18px;line-height:18px;font-size:12px;color:#333;letter-spacing:0.08px;white-space:nowrap;">F000000050.0002</div></div>
<div class="clip" style="left:352px;top:109.5px;width:62px;height:20px"><div style="left:0px;top:1.0px;height:18px;line-height:18px;font-size:12px;color:#333;letter-spacing:-0.03px;white-space:nowrap;">F23471</div></div>
<div class="clip" style="left:429.3px;top:109.5px;width:137px;height:20px"><div style="left:0px;top:1.0px;height:18px;line-height:18px;font-size:12px;color:#333;letter-spacing:-0.52px;white-space:nowrap;">LT_WINDING_1_B_SST</div></div>
<div class="clip" style="left:582px;top:109.5px;width:118px;height:20px"><div style="left:0px;top:1.0px;height:18px;line-height:18px;font-size:12px;color:#333;letter-spacing:-0.52px;white-space:nowrap;">LT_WINDING_BUY_SST</div></div>
<div class="clip" style="left:715.3px;top:109.5px;width:73px;height:20px"><div style="left:0px;top:1.0px;height:18px;line-height:18px;font-size:12px;color:#333;letter-spacing:0.37px;white-space:nowrap;">03/01/2019</div></div>
<div class="clip" style="left:800px;top:109.5px;width:74.3px;height:20px"><div style="left:0px;top:1.0px;height:18px;line-height:18px;font-size:12px;color:#333;letter-spacing:0.37px;white-space:nowrap;width:74.3px;text-align:right;text-indent:-0.37px;">02/24/2019</div></div>
<div class="clip" style="left:900px;top:109.5px;width:31.2px;height:20px"><div style="left:0px;top:1.0px;height:18px;line-height:18px;font-size:12px;color:#333;letter-spacing:0.03px;white-space:nowrap;width:31.2px;text-align:right;text-indent:-0.03px;">-5</div></div>
<div class="clip" style="left:961px;top:109.5px;width:27px;height:20px"><div style="left:0px;top:1.0px;height:18px;line-height:18px;font-size:12px;color:#333;letter-spacing:-0.23px;white-space:nowrap;">B</div></div>
<div style="left:94.5px;top:130.5px;height:18px;line-height:18px;font-size:12px;color:#555;letter-spacing:0.19px;white-space:nowrap;">4</div>
<div style="left:134.5px;top:130.0px;width:19px;height:17px;border-radius:3.5px;background:#ffff00;box-shadow:0 0 0 .6px rgba(170,170,120,.55)"></div>
<div style="left:192.5px;top:132.5px;width:11px;height:11px;border:1px solid #c6c6c6;border-radius:2px;background:#ebebeb"></div>
<div class="clip" style="left:242.3px;top:129.5px;width:95.2px;height:20px"><div style="left:0px;top:1.0px;height:18px;line-height:18px;font-size:12px;color:#333;letter-spacing:0.08px;white-space:nowrap;">F000000050.0002</div></div>
<div class="clip" style="left:352px;top:129.5px;width:62px;height:20px"><div style="left:0px;top:1.0px;height:18px;line-height:18px;font-size:12px;color:#333;letter-spacing:-0.03px;white-space:nowrap;">F23471</div></div>
<div class="clip" style="left:429.3px;top:129.5px;width:137px;height:20px"><div style="left:0px;top:1.0px;height:18px;line-height:18px;font-size:12px;color:#333;letter-spacing:-0.56px;white-space:nowrap;">LT_WINDING_1_C_SST</div></div>
<div class="clip" style="left:582px;top:129.5px;width:118px;height:20px"><div style="left:0px;top:1.0px;height:18px;line-height:18px;font-size:12px;color:#333;letter-spacing:-0.52px;white-space:nowrap;">LT_WINDING_BUY_SST</div></div>
<div class="clip" style="left:715.3px;top:129.5px;width:73px;height:20px"><div style="left:0px;top:1.0px;height:18px;line-height:18px;font-size:12px;color:#333;letter-spacing:0.37px;white-space:nowrap;">03/01/2019</div></div>
<div class="clip" style="left:800px;top:129.5px;width:74.3px;height:20px"><div style="left:0px;top:1.0px;height:18px;line-height:18px;font-size:12px;color:#333;letter-spacing:0.37px;white-space:nowrap;width:74.3px;text-align:right;text-indent:-0.37px;">02/24/2019</div></div>
<div class="clip" style="left:900px;top:129.5px;width:31.2px;height:20px"><div style="left:0px;top:1.0px;height:18px;line-height:18px;font-size:12px;color:#333;letter-spacing:0.03px;white-space:nowrap;width:31.2px;text-align:right;text-indent:-0.03px;">-5</div></div>
<div class="clip" style="left:961px;top:129.5px;width:27px;height:20px"><div style="left:0px;top:1.0px;height:18px;line-height:18px;font-size:12px;color:#333;letter-spacing:-0.23px;white-space:nowrap;">B</div></div>
<div style="left:94.5px;top:150.5px;height:18px;line-height:18px;font-size:12px;color:#555;letter-spacing:0.19px;white-space:nowrap;">5</div>
<div style="left:134.5px;top:150.0px;width:19px;height:17px;border-radius:3.5px;background:#ffff00;box-shadow:0 0 0 .6px rgba(170,170,120,.55)"></div>
<div style="left:192.5px;top:152.5px;width:11px;height:11px;border:1px solid #c6c6c6;border-radius:2px;background:#ebebeb"></div><svg viewBox="0 0 12 12" style="left:192.0px;top:151.5px;width:12px;height:12px"><path d="M2.6 6.2 L5 8.8 L9.6 2.8" fill="none" stroke="#8a8a8a" stroke-width="1.9"/></svg>
<div class="clip" style="left:242.3px;top:149.5px;width:95.2px;height:20px"><div style="left:0px;top:1.0px;height:18px;line-height:18px;font-size:12px;color:#333;letter-spacing:0.08px;white-space:nowrap;">F000000050.0002</div></div>
<div class="clip" style="left:352px;top:149.5px;width:62px;height:20px"><div style="left:0px;top:1.0px;height:18px;line-height:18px;font-size:12px;color:#333;letter-spacing:-0.03px;white-space:nowrap;">F23429</div></div>
<div class="clip" style="left:429.3px;top:149.5px;width:137px;height:20px"><div style="left:0px;top:1.0px;height:18px;line-height:18px;font-size:12px;color:#333;letter-spacing:-0.53px;white-space:nowrap;">LT_WINDING_1_A_SST</div></div>
<div class="clip" style="left:582px;top:149.5px;width:118px;height:20px"><div style="left:0px;top:1.0px;height:18px;line-height:18px;font-size:12px;color:#333;letter-spacing:-0.90px;white-space:nowrap;">LT_COPPER_SST</div></div>
<div class="clip" style="left:715.3px;top:149.5px;width:73px;height:20px"><div style="left:0px;top:1.0px;height:18px;line-height:18px;font-size:12px;color:#333;letter-spacing:0.37px;white-space:nowrap;">03/01/2019</div></div>
<div class="clip" style="left:800px;top:149.5px;width:74.3px;height:20px"><div style="left:0px;top:1.0px;height:18px;line-height:18px;font-size:12px;color:#333;letter-spacing:0.37px;white-space:nowrap;width:74.3px;text-align:right;text-indent:-0.37px;">02/24/2019</div></div>
<div class="clip" style="left:900px;top:149.5px;width:31.2px;height:20px"><div style="left:0px;top:1.0px;height:18px;line-height:18px;font-size:12px;color:#333;letter-spacing:0.03px;white-space:nowrap;width:31.2px;text-align:right;text-indent:-0.03px;">-5</div></div>
<div class="clip" style="left:961px;top:149.5px;width:27px;height:20px"><div style="left:0px;top:1.0px;height:18px;line-height:18px;font-size:12px;color:#333;letter-spacing:-0.23px;white-space:nowrap;">B</div></div>
<div style="left:94.5px;top:170.5px;height:18px;line-height:18px;font-size:12px;color:#555;letter-spacing:0.19px;white-space:nowrap;">6</div>
<div style="left:134.5px;top:170.0px;width:19px;height:17px;border-radius:3.5px;background:#ffff00;box-shadow:0 0 0 .6px rgba(170,170,120,.55)"></div>
<div style="left:192.5px;top:172.5px;width:11px;height:11px;border:1px solid #c6c6c6;border-radius:2px;background:#ebebeb"></div><svg viewBox="0 0 12 12" style="left:192.0px;top:171.5px;width:12px;height:12px"><path d="M2.6 6.2 L5 8.8 L9.6 2.8" fill="none" stroke="#8a8a8a" stroke-width="1.9"/></svg>
<div class="clip" style="left:242.3px;top:169.5px;width:95.2px;height:20px"><div style="left:0px;top:1.0px;height:18px;line-height:18px;font-size:12px;color:#333;letter-spacing:0.08px;white-space:nowrap;">F000000050.0002</div></div>
<div class="clip" style="left:352px;top:169.5px;width:62px;height:20px"><div style="left:0px;top:1.0px;height:18px;line-height:18px;font-size:12px;color:#333;letter-spacing:-0.03px;white-space:nowrap;">F23429</div></div>
<div class="clip" style="left:429.3px;top:169.5px;width:137px;height:20px"><div style="left:0px;top:1.0px;height:18px;line-height:18px;font-size:12px;color:#333;letter-spacing:-0.52px;white-space:nowrap;">LT_WINDING_1_B_SST</div></div>
<div class="clip" style="left:582px;top:169.5px;width:118px;height:20px"><div style="left:0px;top:1.0px;height:18px;line-height:18px;font-size:12px;color:#333;letter-spacing:-0.90px;white-space:nowrap;">LT_COPPER_SST</div></div>
<div class="clip" style="left:715.3px;top:169.5px;width:73px;height:20px"><div style="left:0px;top:1.0px;height:18px;line-height:18px;font-size:12px;color:#333;letter-spacing:0.37px;white-space:nowrap;">03/01/2019</div></div>
<div class="clip" style="left:800px;top:169.5px;width:74.3px;height:20px"><div style="left:0px;top:1.0px;height:18px;line-height:18px;font-size:12px;color:#333;letter-spacing:0.37px;white-space:nowrap;width:74.3px;text-align:right;text-indent:-0.37px;">02/24/2019</div></div>
<div class="clip" style="left:900px;top:169.5px;width:31.2px;height:20px"><div style="left:0px;top:1.0px;height:18px;line-height:18px;font-size:12px;color:#333;letter-spacing:0.03px;white-space:nowrap;width:31.2px;text-align:right;text-indent:-0.03px;">-5</div></div>
<div class="clip" style="left:961px;top:169.5px;width:27px;height:20px"><div style="left:0px;top:1.0px;height:18px;line-height:18px;font-size:12px;color:#333;letter-spacing:-0.23px;white-space:nowrap;">B</div></div>
<div style="left:94.5px;top:190.5px;height:18px;line-height:18px;font-size:12px;color:#555;letter-spacing:0.19px;white-space:nowrap;">7</div>
<div style="left:134.5px;top:190.0px;width:19px;height:17px;border-radius:3.5px;background:#ffff00;box-shadow:0 0 0 .6px rgba(170,170,120,.55)"></div>
<div style="left:192.5px;top:192.5px;width:11px;height:11px;border:1px solid #c6c6c6;border-radius:2px;background:#ebebeb"></div>
<div class="clip" style="left:242.3px;top:189.5px;width:95.2px;height:20px"><div style="left:0px;top:1.0px;height:18px;line-height:18px;font-size:12px;color:#333;letter-spacing:0.08px;white-space:nowrap;">F000000050.0002</div></div>
<div class="clip" style="left:352px;top:189.5px;width:62px;height:20px"><div style="left:0px;top:1.0px;height:18px;line-height:18px;font-size:12px;color:#333;letter-spacing:-0.03px;white-space:nowrap;">F23429</div></div>
<div class="clip" style="left:429.3px;top:189.5px;width:137px;height:20px"><div style="left:0px;top:1.0px;height:18px;line-height:18px;font-size:12px;color:#333;letter-spacing:-0.56px;white-space:nowrap;">LT_WINDING_1_C_SST</div></div>
<div class="clip" style="left:582px;top:189.5px;width:118px;height:20px"><div style="left:0px;top:1.0px;height:18px;line-height:18px;font-size:12px;color:#333;letter-spacing:-0.90px;white-space:nowrap;">LT_COPPER_SST</div></div>
<div class="clip" style="left:715.3px;top:189.5px;width:73px;height:20px"><div style="left:0px;top:1.0px;height:18px;line-height:18px;font-size:12px;color:#333;letter-spacing:0.37px;white-space:nowrap;">03/01/2019</div></div>
<div class="clip" style="left:800px;top:189.5px;width:74.3px;height:20px"><div style="left:0px;top:1.0px;height:18px;line-height:18px;font-size:12px;color:#333;letter-spacing:0.37px;white-space:nowrap;width:74.3px;text-align:right;text-indent:-0.37px;">02/24/2019</div></div>
<div class="clip" style="left:900px;top:189.5px;width:31.2px;height:20px"><div style="left:0px;top:1.0px;height:18px;line-height:18px;font-size:12px;color:#333;letter-spacing:0.03px;white-space:nowrap;width:31.2px;text-align:right;text-indent:-0.03px;">-5</div></div>
<div class="clip" style="left:961px;top:189.5px;width:27px;height:20px"><div style="left:0px;top:1.0px;height:18px;line-height:18px;font-size:12px;color:#333;letter-spacing:-0.23px;white-space:nowrap;">B</div></div>
<div style="left:89px;top:262px;width:900px;height:19px;background:#e3eff7"></div>
<div style="left:119.4px;top:262.5px;height:18px;line-height:18px;font-size:12px;color:#666;letter-spacing:0.20px;white-space:nowrap;">–/7</div>
</div>
<div style="left:988px;top:26px;width:1020px;height:1084px;background:#5f86b9;box-shadow:-2px 0 5px rgba(40,80,140,.62)"></div>
<div style="left:988px;top:26px;width:1020px;height:25px;background:#3d76b1"></div>
<div style="left:989px;top:51px;width:1017px;height:1059px;background:#fff"></div>
<svg viewBox="0 0 16 16" style="left:991.0px;top:33.5px;width:12px;height:12px;color:#2f5f97;"><path d="M3.5 1.5 h3 v3 h-3Z M9.5 1.5 h3 v3 h-3Z M3.5 6.5 h3 v3 h-3Z M9.5 6.5 h3 v3 h-3Z M3.5 11.5 h3 v3 h-3Z M9.5 11.5 h3 v3 h-3Z" fill="currentColor"/></svg>
<svg viewBox="0 0 16 16" style="left:1031.0px;top:32.0px;width:11px;height:11px;color:#2f5f97;"><path d="M3 3.4 L13 12.6 M13 3.4 L3 12.6" stroke="currentColor" stroke-width="3" fill="none"/></svg>
<div style="left:1081.5px;top:27px;width:190px;height:24px;background:#62a3e3"></div>
<svg viewBox="0 0 16 16" style="left:1096.0px;top:29.0px;width:11px;height:11px;color:#4a86c6;"><circle cx="8" cy="8" r="7" fill="currentColor"/><path d="M5.2 5.2 L10.8 10.8 M10.8 5.2 L5.2 10.8" stroke="#62a3e3" stroke-width="2" fill="none"/></svg>
<svg viewBox="0 0 16 16" style="left:1111.0px;top:34.0px;width:12px;height:12px;color:#fff;"><path d="M8 1.2 A3.4 3.6 0 0 1 8 8.4 A3.4 3.6 0 0 1 8 1.2Z M2 14.8 C2 10 4 8.6 5.6 8.6 C6.4 9.4 7.2 9.7 8 9.7 C8.8 9.7 9.6 9.4 10.4 8.6 C12 8.6 14 10 14 14.8Z" fill="currentColor"/></svg>
<div style="left:1126.6px;top:30.5px;height:18px;line-height:18px;font-size:12px;color:#fff;letter-spacing:0.43px;white-space:nowrap;text-shadow:0 0 .4px #fff;">OrderComponents</div>
<div style="left:1232px;top:31.5px;width:4.5px;height:15px;background:#7f9fca;border-radius:1px"></div>
<div style="left:1272px;top:27px;width:183px;height:24px;background:#4e86c0"></div>
<svg viewBox="0 0 16 16" style="left:1287.0px;top:29.0px;width:11px;height:11px;color:#3a6ea6;"><circle cx="8" cy="8" r="7" fill="currentColor"/><path d="M5.2 5.2 L10.8 10.8 M10.8 5.2 L5.2 10.8" stroke="#4e86c0" stroke-width="2" fill="none"/></svg>
<svg viewBox="0 0 16 16" style="left:1301.0px;top:34.0px;width:12px;height:12px;color:#5fa2e6;"><path d="M8 1.2 A3.4 3.6 0 0 1 8 8.4 A3.4 3.6 0 0 1 8 1.2Z M2 14.8 C2 10 4 8.6 5.6 8.6 C6.4 9.4 7.2 9.7 8 9.7 C8.8 9.7 9.6 9.4 10.4 8.6 C12 8.6 14 10 14 14.8Z" fill="currentColor"/></svg>
<div style="left:1317.5px;top:30.5px;height:18px;line-height:18px;font-size:12px;color:#5b9fe3;letter-spacing:0.33px;white-space:nowrap;">OrderWhereUsed</div>
<div style="left:1415.5px;top:31.5px;width:4.5px;height:15px;background:#6a8fc2;border-radius:1px"></div>
<div style="left:989px;top:51px;width:1017px;height:36px;background:#fff"></div>
<div style="left:1023px;top:58px;width:1px;height:21px;background:#f0f0f0"></div>
<div style="left:1058px;top:58px;width:1px;height:21px;background:#f0f0f0"></div>
<div style="left:1092px;top:58px;width:1px;height:21px;background:#f0f0f0"></div>
<div style="left:1125px;top:58px;width:1px;height:21px;background:#f0f0f0"></div>
<div style="left:1158px;top:58px;width:1px;height:21px;background:#f0f0f0"></div>
<div style="left:1191px;top:58px;width:1px;height:21px;background:#f0f0f0"></div>
<div style="left:1225px;top:58px;width:1px;height:21px;background:#f0f0f0"></div>
<div style="left:1257px;top:58px;width:1px;height:21px;background:#f0f0f0"></div>
<div style="left:1288px;top:58px;width:1px;height:21px;background:#f0f0f0"></div>
<div style="left:1322px;top:58px;width:1px;height:21px;background:#f0f0f0"></div>
<div style="left:1355px;top:58px;width:1px;height:21px;background:#f0f0f0"></div>
<div style="left:1386px;top:58px;width:1px;height:21px;background:#f0f0f0"></div>
<div style="left:1420px;top:58px;width:1px;height:21px;background:#f0f0f0"></div>
<div style="left:1454px;top:58px;width:1px;height:21px;background:#f0f0f0"></div>
<div style="left:1489px;top:58px;width:1px;height:21px;background:#f0f0f0"></div>
<div style="left:1522px;top:58px;width:1px;height:21px;background:#f0f0f0"></div>
<div style="left:1557px;top:58px;width:1px;height:21px;background:#f0f0f0"></div>
<div style="left:1973px;top:58px;width:1px;height:21px;background:#f0f0f0"></div>
<svg viewBox="0 0 16 16" style="left:999.2px;top:60.8px;width:14.4px;height:14.4px;color:#d4d4d4;"><rect x="0.9" y="2.1" width="14.2" height="12.3" rx="1.7" fill="none" stroke="currentColor" stroke-width="1.4"/><path d="M0.9 9.9 H15.1 V13 A1.5 1.5 0 0 1 13.6 14.5 H2.4 A1.5 1.5 0 0 1 0.9 13Z" fill="currentColor"/><path d="M8 4.2 V8 M5.7 6.2 L8 8.5 L10.3 6.2" fill="none" stroke="currentColor" stroke-width="1.2"/></svg>
<svg viewBox="0 0 16 16" style="left:1033.0px;top:61.0px;width:14px;height:14px;color:#ececec;"><path d="M0.8 1.4 H13.4 L8.8 7.4 V14.6 L5.6 12 V7.4Z" fill="currentColor"/><path d="M9.3 4.4 L14.7 10.6 M14.7 4.4 L9.3 10.6" stroke="currentColor" stroke-width="4.2" stroke-linecap="round" fill="none"/><path d="M9.3 4.4 L14.7 10.6 M14.7 4.4 L9.3 10.6" stroke="#fff" stroke-width="2.2" stroke-linecap="round" fill="none"/></svg>
<svg viewBox="0 0 16 16" style="left:1067.0px;top:61.0px;width:14px;height:14px;color:#f0f0f0;"><path d="M0.8 2.4 H11 L7.4 7 V12.6 L4.8 10.6 V7Z" fill="currentColor"/><circle cx="10.5" cy="6" r="2.3" fill="currentColor"/><circle cx="13" cy="8.6" r="2.3" fill="currentColor"/><circle cx="10.5" cy="11" r="2.3" fill="currentColor"/><circle cx="10.5" cy="6" r="1" fill="#fff"/><circle cx="13" cy="8.6" r="1" fill="#fff"/><circle cx="10.5" cy="11" r="1" fill="#fff"/></svg>
<svg viewBox="0 0 16 16" style="left:1100.8px;top:61.0px;width:14px;height:14px;color:#ededed;"><path d="M0.8 7 L6.2 1.2 L11.6 7Z M0.8 9.4 L6.2 15.2 L11.6 9.4Z" fill="currentColor"/><path d="M8.6 5 L14.6 11.4 M14.6 5 L8.6 11.4" stroke="currentColor" stroke-width="4.4" stroke-linecap="round" fill="none"/><path d="M8.6 5 L14.6 11.4 M14.6 5 L8.6 11.4" stroke="#fff" stroke-width="2.3" stroke-linecap="round" fill="none"/></svg>
<svg viewBox="0 0 16 16" style="left:1135.8px;top:61.2px;width:13.5px;height:13.5px;color:#d2d2d2;"><path d="M11.6 10.4 V13 A1.8 1.8 0 0 1 9.8 14.8 H3 A1.8 1.8 0 0 1 1.2 13 V6.2 A1.8 1.8 0 0 1 3 4.4 H6.4" fill="none" stroke="currentColor" stroke-width="1.5"/><path d="M4.6 11.4 C8.8 11.6 10.4 9.6 10.4 5.4" fill="none" stroke="currentColor" stroke-width="2.8"/><path d="M6.4 5.9 L10.4 0.7 L14.4 5.9Z" fill="currentColor"/></svg>
<svg viewBox="0 0 16 16" style="left:1169.0px;top:61.2px;width:13.5px;height:13.5px;color:#d2d2d2;"><path d="M5 11.6 H3.4 A1.8 1.8 0 0 1 1.6 9.8 V3 A1.8 1.8 0 0 1 3.4 1.2 H10 A1.8 1.8 0 0 1 11.8 3 V4.2" fill="none" stroke="currentColor" stroke-width="1.5"/><path d="M5.4 4.6 C9.6 4.4 11.4 6.4 11.4 10.4" fill="none" stroke="currentColor" stroke-width="2.8"/><path d="M7.4 10 L11.4 15.3 L15.4 10Z" fill="currentColor"/></svg>
<svg viewBox="0 0 16 16" style="left:1201.6px;top:61.0px;width:14px;height:14px;color:#d2d2d2;"><path d="M7.4 4.6 H15 V12.4 L12.6 15 H5.2 V9.6" fill="none" stroke="currentColor" stroke-width="1.3"/><path d="M15 12.4 H12.6 V15" fill="none" stroke="currentColor" stroke-width="1"/><g transform="translate(1.2 0.4) scale(.52)"><path d="M15.51 6.81 L15.51 9.19 L13.23 9.34 L12.65 10.75 L14.15 12.47 L12.47 14.15 L10.75 12.65 L9.34 13.23 L9.19 15.51 L6.81 15.51 L6.66 13.23 L5.25 12.65 L3.53 14.15 L1.85 12.47 L3.35 10.75 L2.77 9.34 L0.49 9.19 L0.49 6.81 L2.77 6.66 L3.35 5.25 L1.85 3.53 L3.53 1.85 L5.25 3.35 L6.66 2.77 L6.81 0.49 L9.19 0.49 L9.34 2.77 L10.75 3.35 L12.47 1.85 L14.15 3.53 L12.65 5.25 L13.23 6.66Z M10.6 8 A2.6 2.6 0 1 0 5.4 8 A2.6 2.6 0 1 0 10.6 8Z" fill="currentColor" fill-rule="evenodd"/></g><path d="M2.4 6.6 L1 8 L2.6 9.8 L4.2 8.4" fill="none" stroke="currentColor" stroke-width="1.2"/></svg>
<svg viewBox="0 0 16 16" style="left:1234.8px;top:61.8px;width:12.5px;height:12.5px;color:#d2d2d2;"><circle cx="8" cy="8" r="7.3" fill="currentColor"/><path d="M8 4 V12 M4 8 H12" stroke="#fff" stroke-width="2.5"/></svg>
<svg viewBox="0 0 16 16" style="left:1266.1px;top:61.5px;width:13px;height:13px;color:#d2d2d2;"><path d="M3 4.8 H13 V13.6 A1.3 1.3 0 0 1 11.7 14.9 H4.3 A1.3 1.3 0 0 1 3 13.6Z" fill="none" stroke="currentColor" stroke-width="1.4"/><path d="M1.4 4.2 H14.6" stroke="currentColor" stroke-width="1.6"/><path d="M5.6 3.8 V2.4 A1 1 0 0 1 6.6 1.4 H9.4 A1 1 0 0 1 10.4 2.4 V3.8" fill="none" stroke="currentColor" stroke-width="1.4"/><path d="M5.7 6.8 V12.8 M8 6.8 V12.8 M10.3 6.8 V12.8" stroke="currentColor" stroke-width="1.3"/></svg>
<svg viewBox="0 0 16 16" style="left:1298.7px;top:61.0px;width:14px;height:14px;color:#d2d2d2;"><circle cx="7.4" cy="7.6" r="3.6" fill="none" stroke="currentColor" stroke-width="1.7"/><path d="M10 10.4 L13.2 13.8" stroke="currentColor" stroke-width="2.2"/><path d="M7.4 0.6 L8.8 2.2 H6Z M7.4 15.6 L8.8 14 H6Z" fill="currentColor"/></svg>
<svg viewBox="0 0 16 16" style="left:1331.0px;top:61.0px;width:14px;height:14px;color:#d2d2d2;"><path d="M1.8 0.8 H10 L14.2 5 V15.2 H1.8Z M9.8 1 V5.2 H14" fill="none" stroke="currentColor" stroke-width="1.2"/><path d="M5.2 7.4 L10.8 13.2 M10.8 7.4 L5.2 13.2 M4.2 7.4 H6.4 M9.6 7.4 H11.8 M4.2 13.2 H6.4 M9.6 13.2 H11.8" stroke="currentColor" stroke-width="1.2" fill="none"/></svg>
<svg viewBox="0 0 16 16" style="left:1362.8px;top:61.0px;width:14px;height:14px;color:#d2d2d2;"><path d="M1.8 0.8 H10 L14.2 5 V15.2 H1.8Z M9.8 1 V5.2 H14" fill="none" stroke="currentColor" stroke-width="1.2"/><path d="M4 13 C6.4 11.8 7.6 9.2 7.4 6.4 C7.8 9.6 9.6 11.2 12.2 11.4 C9.2 11 6.4 11.8 4 13Z" fill="none" stroke="currentColor" stroke-width="1"/></svg>
<svg viewBox="0 0 16 16" style="left:1396.0px;top:61.0px;width:14px;height:14px;color:#d2d2d2;"><path d="M1.2 1.2 H14.8 V12.4 H1.2Z" fill="none" stroke="currentColor" stroke-width="1.4"/><path d="M1.2 1.4 H14.8" stroke="currentColor" stroke-width="2"/><path d="M8 1.4 V12.4" stroke="currentColor" stroke-width="1.4"/><path d="M1.2 12.4 L2.6 15 L5.4 13.2 L7 15 L8 13 L9 15 L10.6 13.2 L13.4 15 L14.8 12.4" fill="none" stroke="currentColor" stroke-width="1"/></svg>
<svg viewBox="0 0 16 16" style="left:1429.8px;top:61.0px;width:14px;height:14px;color:#d2d2d2;"><circle cx="8" cy="7.4" r="3.6" fill="none" stroke="currentColor" stroke-width="1.7"/><path d="M10.6 10 L13.6 13.4" stroke="currentColor" stroke-width="2.2"/><path d="M0.4 7.4 L2.2 6 V8.8Z M15.6 7.4 L13.8 6 V8.8Z" fill="currentColor"/></svg>
<div style="left:1459px;top:61px;width:24px;height:14px;line-height:14px;text-align:center;font-size:9.5px;font-weight:bold;color:#d2d2d2">P/S</div>
<svg viewBox="0 0 16 16" style="left:1498.2px;top:61.0px;width:14px;height:14px;color:#d2d2d2;"><path d="M2.2 8.2 L7.6 2.6 L13.2 8.2 L8.4 12.8 C7.6 13.6 6.6 13.6 5.8 12.8 L2.4 9.4 C2 9 2 8.6 2.2 8.2Z" fill="none" stroke="currentColor" stroke-width="1.4"/><path d="M2 8.6 H13" stroke="currentColor" stroke-width="1.2"/><path d="M14 9.6 C15.2 11.2 15.4 12.6 14 12.8 C12.8 12.6 13 11.2 14 9.6Z" fill="currentColor"/><path d="M7.6 2.6 C6.6 1 4.4 1.6 5 4.8" fill="none" stroke="currentColor" stroke-width="1.1"/></svg>
<div style="left:1527px;top:61px;width:24px;height:14px;line-height:14px;text-align:center;font-size:7px;font-weight:bold;color:#d2d2d2">ABC</div>
<svg viewBox="0 0 16 16" style="left:1574.5px;top:62.2px;width:11.5px;height:11.5px;color:#d2d2d2;"><path d="M2.4 0.6 H5.6 V15.4 H2.4Z M14 0.6 V15.4 L5.4 8Z" fill="currentColor"/></svg>
<svg viewBox="0 0 16 16" style="left:1604.9px;top:61.5px;width:13px;height:13px;color:#d2d2d2;"><path d="M8.2 1.8 V14.2 L0.8 8Z M15.6 1.8 V14.2 L8.2 8Z" fill="currentColor"/></svg>
<svg viewBox="0 0 16 16" style="left:1636.2px;top:61.5px;width:13px;height:13px;color:#d2d2d2;"><path d="M0.4 1.8 V14.2 L7.8 8Z M7.8 1.8 V14.2 L15.2 8Z" fill="currentColor"/></svg>
<svg viewBox="0 0 16 16" style="left:1668.8px;top:62.2px;width:11.5px;height:11.5px;color:#d2d2d2;"><path d="M10.4 0.6 H13.6 V15.4 H10.4Z M2 0.6 V15.4 L10.6 8Z" fill="currentColor"/></svg>
<svg viewBox="0 0 16 16" style="left:1702.0px;top:61.0px;width:14px;height:14px;color:#d2d2d2;"><path d="M0.4 8 L4 4.6 V7 H12 V4.6 L15.6 8 L12 11.4 V9 H4 V11.4Z" fill="currentColor"/></svg>
<svg viewBox="0 0 16 16" style="left:1984.0px;top:62.0px;width:13px;height:13px;color:#c8c8c8;"><path d="M14.9 3.6 L12.2 6.3 L10.2 5.8 L9.7 3.8 L12.4 1.1 A4.3 4.3 0 0 0 7.1 6.6 L1.3 12.4 A1.65 1.65 0 0 0 3.6 14.7 L9.4 8.9 A4.3 4.3 0 0 0 14.9 3.6Z" fill="currentColor"/></svg>
<div style="left:989px;top:86px;width:347px;height:30px;background:#546476"></div>
<svg viewBox="0 0 16 16" style="left:998.8px;top:96.0px;width:12px;height:12px;color:#e9eef3;"><rect x="2.2" y="2.6" width="11.6" height="10.8" rx="2.2" fill="none" stroke="currentColor" stroke-width="1.8"/></svg>
<div style="left:1019px;top:86px;width:1px;height:30px;background:#3e4c5b"></div>
<div style="left:1029.6px;top:93.7px;height:18px;line-height:18px;font-size:12px;color:#e9eef3;letter-spacing:0.51px;white-space:nowrap;text-shadow:0 0 .3px #e9eef3;text-decoration:underline;">Order</div>
<div style="left:1079px;top:86px;width:1px;height:30px;background:#3e4c5b"></div>
<div style="left:1093.5px;top:93.7px;height:18px;line-height:18px;font-size:12px;color:#e9eef3;letter-spacing:0.53px;white-space:nowrap;text-shadow:0 0 .3px #e9eef3;text-decoration:underline;">Item</div>
<div style="left:1139px;top:86px;width:1px;height:30px;background:#3e4c5b"></div>
<div style="left:1150.4px;top:93.7px;height:18px;line-height:18px;font-size:12px;color:#e9eef3;letter-spacing:-0.36px;white-space:nowrap;text-shadow:0 0 .3px #e9eef3;">ABC...</div>
<div style="left:1200px;top:86px;width:1px;height:30px;background:#3e4c5b"></div>
<div style="left:1214.4px;top:93.7px;height:18px;line-height:18px;font-size:12px;color:#e9eef3;letter-spacing:0.15px;white-space:nowrap;text-shadow:0 0 .3px #e9eef3;">Crit. Path</div>
<div style="left:1286px;top:86px;width:1px;height:30px;background:#3e4c5b"></div>
<div style="left:1297.8px;top:93.7px;height:18px;line-height:18px;font-size:12px;color:#e9eef3;letter-spacing:-0.05px;white-space:nowrap;text-shadow:0 0 .3px #e9eef3;">Col</div>
<div style="left:1333px;top:86px;width:1px;height:30px;background:#3e4c5b"></div>
<div style="left:1019px;top:86px;width:1px;height:30px;background:#3f5f86"></div>
<div style="left:989px;top:116px;width:347px;height:39px;background:#fff"></div>
<div class="fi" style="left:1024px;top:120px;width:49px;height:25px;"></div>
<div class="fi" style="left:1084px;top:120px;width:49px;height:25px;"></div>
<div class="fi" style="left:1144px;top:120px;width:50px;height:25px;"></div>
<div class="fi" style="left:1205px;top:120px;width:75px;height:25px;"></div>
<div class="fi" style="left:1291px;top:120px;width:36px;height:25px;"></div>
<div style="left:989px;top:155px;width:347px;height:2px;background:#eff7fe"></div>
<div style="left:1019px;top:156px;width:317px;height:30px;background:#eff7fe"></div>
<div style="left:989px;top:156px;width:30px;height:30px;background:#b8d4f1"></div>
<div style="left:989px;top:185px;width:347px;height:1px;background:#c4def3"></div>
<div style="left:1019px;top:156px;width:317px;height:4px;background:linear-gradient(#d6e9f7,#eff7fe)"></div>
<div style="left:1019px;top:186px;width:317px;height:30px;background:#fff"></div>
<div style="left:989px;top:186px;width:30px;height:30px;background:#efefef"></div>
<div style="left:989px;top:215px;width:347px;height:1px;background:#dcdcdc"></div>
<div style="left:1019px;top:216px;width:317px;height:30px;background:#f7f7f7"></div>
<div style="left:989px;top:216px;width:30px;height:30px;background:#efefef"></div>
<div style="left:989px;top:245px;width:347px;height:1px;background:#dcdcdc"></div>
<div style="left:1019px;top:246px;width:317px;height:30px;background:#fff"></div>
<div style="left:989px;top:246px;width:30px;height:30px;background:#efefef"></div>
<div style="left:989px;top:275px;width:347px;height:1px;background:#dcdcdc"></div>
<div style="left:1019px;top:276px;width:317px;height:30px;background:#f7f7f7"></div>
<div style="left:989px;top:276px;width:30px;height:30px;background:#efefef"></div>
<div style="left:989px;top:305px;width:347px;height:1px;background:#dcdcdc"></div>
<div style="left:1019px;top:306px;width:317px;height:30px;background:#fff"></div>
<div style="left:989px;top:306px;width:30px;height:30px;background:#efefef"></div>
<div style="left:989px;top:335px;width:347px;height:1px;background:#dcdcdc"></div>
<div style="left:1019px;top:336px;width:317px;height:30px;background:#f7f7f7"></div>
<div style="left:989px;top:336px;width:30px;height:30px;background:#efefef"></div>
<div style="left:989px;top:365px;width:347px;height:1px;background:#dcdcdc"></div>
<div style="left:1019px;top:366px;width:317px;height:30px;background:#fff"></div>
<div style="left:989px;top:366px;width:30px;height:30px;background:#efefef"></div>
<div style="left:989px;top:395px;width:347px;height:1px;background:#dcdcdc"></div>
<div style="left:1019px;top:396px;width:317px;height:6px;background:#f7f7f7"></div>
<div style="left:989px;top:396px;width:30px;height:6px;background:#efefef"></div>
<div style="left:994.5px;top:161.5px;height:18px;line-height:18px;font-size:12px;color:#555;letter-spacing:0.19px;white-space:nowrap;">1</div>
<div class="clip" style="left:1034px;top:160.5px;width:45px;height:20px"><div style="left:0px;top:1.0px;height:18px;line-height:18px;font-size:12px;color:#333;letter-spacing:-0.01px;white-space:nowrap;">C0038.00</div></div>
<div class="clip" style="left:1094px;top:160.5px;width:45px;height:20px"><div style="left:0px;top:1.0px;height:18px;line-height:18px;font-size:12px;color:#333;letter-spacing:-0.20px;white-space:nowrap;">LT_WIND</div></div>
<div style="left:1154px;top:161.5px;height:18px;line-height:18px;font-size:12px;color:#333;letter-spacing:-0.23px;white-space:nowrap;">B</div>
<div style="left:1237.0px;top:163.5px;width:11px;height:11px;border:1px solid #c6c6c6;border-radius:2px;background:#ebebeb"></div>
<div style="left:1301.3px;top:162.0px;width:16px;height:16px;border-radius:3.5px;background:#00ff00;box-shadow:0 0 0 .6px rgba(170,170,120,.55)"></div>
<div style="left:994.5px;top:191.5px;height:18px;line-height:18px;font-size:12px;color:#555;letter-spacing:0.19px;white-space:nowrap;">2</div>
<div class="clip" style="left:1034px;top:190.5px;width:45px;height:20px"><div style="left:0px;top:1.0px;height:18px;line-height:18px;font-size:12px;color:#333;letter-spacing:-0.01px;white-space:nowrap;">C0038.00</div></div>
<div class="clip" style="left:1094px;top:190.5px;width:45px;height:20px"><div style="left:0px;top:1.0px;height:18px;line-height:18px;font-size:12px;color:#333;letter-spacing:-0.20px;white-space:nowrap;">LT_WIND</div></div>
<div style="left:1154px;top:191.5px;height:18px;line-height:18px;font-size:12px;color:#333;letter-spacing:-1.09px;white-space:nowrap;">C</div>
<div style="left:1237.0px;top:193.5px;width:11px;height:11px;border:1px solid #c6c6c6;border-radius:2px;background:#ebebeb"></div>
<div style="left:1301.3px;top:192.0px;width:16px;height:16px;border-radius:3.5px;background:#ffff00;box-shadow:0 0 0 .6px rgba(170,170,120,.55)"></div>
<div style="left:994.5px;top:221.5px;height:18px;line-height:18px;font-size:12px;color:#555;letter-spacing:0.19px;white-space:nowrap;">3</div>
<div class="clip" style="left:1034px;top:220.5px;width:45px;height:20px"><div style="left:0px;top:1.0px;height:18px;line-height:18px;font-size:12px;color:#333;letter-spacing:-0.01px;white-space:nowrap;">C0038.00</div></div>
<div class="clip" style="left:1094px;top:220.5px;width:45px;height:20px"><div style="left:0px;top:1.0px;height:18px;line-height:18px;font-size:12px;color:#333;letter-spacing:-0.20px;white-space:nowrap;">LT_WIND</div></div>
<div style="left:1154px;top:221.5px;height:18px;line-height:18px;font-size:12px;color:#333;letter-spacing:-1.09px;white-space:nowrap;">C</div>
<div style="left:1237.0px;top:223.5px;width:11px;height:11px;border:1px solid #c6c6c6;border-radius:2px;background:#ebebeb"></div>
<div style="left:1301.3px;top:222.0px;width:16px;height:16px;border-radius:3.5px;background:#ffff00;box-shadow:0 0 0 .6px rgba(170,170,120,.55)"></div>
<div style="left:994.5px;top:251.5px;height:18px;line-height:18px;font-size:12px;color:#555;letter-spacing:0.19px;white-space:nowrap;">4</div>
<div class="clip" style="left:1034px;top:250.5px;width:45px;height:20px"><div style="left:0px;top:1.0px;height:18px;line-height:18px;font-size:12px;color:#333;letter-spacing:-0.01px;white-space:nowrap;">C0038.00</div></div>
<div class="clip" style="left:1094px;top:250.5px;width:45px;height:20px"><div style="left:0px;top:1.0px;height:18px;line-height:18px;font-size:12px;color:#333;letter-spacing:-0.58px;white-space:nowrap;">LT_ACTIV</div></div>
<div style="left:1154px;top:251.5px;height:18px;line-height:18px;font-size:12px;color:#333;letter-spacing:-1.09px;white-space:nowrap;">C</div>
<div style="left:1237.0px;top:253.5px;width:11px;height:11px;border:1px solid #c6c6c6;border-radius:2px;background:#ebebeb"></div>
<div style="left:1301.3px;top:252.0px;width:16px;height:16px;border-radius:3.5px;background:#ffff00;box-shadow:0 0 0 .6px rgba(170,170,120,.55)"></div>
<div style="left:994.5px;top:281.5px;height:18px;line-height:18px;font-size:12px;color:#555;letter-spacing:0.19px;white-space:nowrap;">5</div>
<div class="clip" style="left:1034px;top:280.5px;width:45px;height:20px"><div style="left:0px;top:1.0px;height:18px;line-height:18px;font-size:12px;color:#333;letter-spacing:-0.01px;white-space:nowrap;">C0038.00</div></div>
<div class="clip" style="left:1094px;top:280.5px;width:45px;height:20px"><div style="left:0px;top:1.0px;height:18px;line-height:18px;font-size:12px;color:#333;letter-spacing:-0.73px;white-space:nowrap;">LT_TRAF</div></div>
<div style="left:1154px;top:281.5px;height:18px;line-height:18px;font-size:12px;color:#333;letter-spacing:-1.09px;white-space:nowrap;">C</div>
<div style="left:1237.0px;top:283.5px;width:11px;height:11px;border:1px solid #c6c6c6;border-radius:2px;background:#ebebeb"></div><svg viewBox="0 0 12 12" style="left:1236.5px;top:282.5px;width:12px;height:12px"><path d="M2.6 6.2 L5 8.8 L9.6 2.8" fill="none" stroke="#8a8a8a" stroke-width="1.9"/></svg>
<div style="left:1301.3px;top:282.0px;width:16px;height:16px;border-radius:3.5px;background:#ff0000;box-shadow:0 0 0 .6px rgba(170,170,120,.55)"></div>
<div style="left:994.5px;top:311.5px;height:18px;line-height:18px;font-size:12px;color:#555;letter-spacing:0.19px;white-space:nowrap;">6</div>
<div class="clip" style="left:1034px;top:310.5px;width:45px;height:20px"><div style="left:0px;top:1.0px;height:18px;line-height:18px;font-size:12px;color:#333;letter-spacing:-0.01px;white-space:nowrap;">C0038.00</div></div>
<div class="clip" style="left:1094px;top:310.5px;width:45px;height:20px"><div style="left:0px;top:1.0px;height:18px;line-height:18px;font-size:12px;color:#333;letter-spacing:-0.73px;white-space:nowrap;">LT_TRAF</div></div>
<div style="left:1154px;top:311.5px;height:18px;line-height:18px;font-size:12px;color:#333;letter-spacing:-1.09px;white-space:nowrap;">C</div>
<div style="left:1237.0px;top:313.5px;width:11px;height:11px;border:1px solid #c6c6c6;border-radius:2px;background:#ebebeb"></div><svg viewBox="0 0 12 12" style="left:1236.5px;top:312.5px;width:12px;height:12px"><path d="M2.6 6.2 L5 8.8 L9.6 2.8" fill="none" stroke="#8a8a8a" stroke-width="1.9"/></svg>
<div style="left:1301.3px;top:312.0px;width:16px;height:16px;border-radius:3.5px;background:#ff0000;box-shadow:0 0 0 .6px rgba(170,170,120,.55)"></div>
<div style="left:1337px;top:86px;width:669px;height:316px;background:#fff"></div>
<div style="left:1337px;top:86px;width:40px;height:69px;background:#d5e6f1"></div>
<div class="clip" style="left:0;top:0;width:2006px;height:402px">
<div style="left:1378px;top:86px;width:151px;height:30px;background:#e3eff7"></div>
<div style="left:1425.9596093750001px;top:92.0px;height:19px;line-height:19px;font-size:13px;color:#4b96c8;letter-spacing:0.00px;white-space:nowrap;">Q 2 2018</div>
<div style="left:1529px;top:86px;width:153px;height:30px;background:#d5e6f1"></div>
<div style="left:1577.9596093750001px;top:92.0px;height:19px;line-height:19px;font-size:13px;color:#4b96c8;letter-spacing:0.00px;white-space:nowrap;">Q 3 2018</div>
<div style="left:1682px;top:86px;width:153px;height:30px;background:#e3eff7"></div>
<div style="left:1730.9596093750001px;top:92.0px;height:19px;line-height:19px;font-size:13px;color:#4b96c8;letter-spacing:0.00px;white-space:nowrap;">Q 4 2018</div>
<div style="left:1835px;top:86px;width:149px;height:30px;background:#d5e6f1"></div>
<div style="left:1881.9596093750001px;top:92.0px;height:19px;line-height:19px;font-size:13px;color:#4b96c8;letter-spacing:0.00px;white-space:nowrap;">Q 1 2019</div>
<div style="left:1984px;top:86px;width:56px;height:30px;background:#e3eff7"></div>
<div style="left:1378px;top:116px;width:50px;height:39px;background:#fff"></div>
<div style="left:1392.4853906249998px;top:126.8px;height:19px;line-height:19px;font-size:13px;color:#4b96c8;letter-spacing:0.00px;white-space:nowrap;">Apr</div>
<div style="left:1428px;top:116px;width:51px;height:39px;background:#f7f7f7"></div>
<div style="left:1440.8210937499998px;top:126.8px;height:19px;line-height:19px;font-size:13px;color:#4b96c8;letter-spacing:0.00px;white-space:nowrap;">May</div>
<div style="left:1479px;top:116px;width:50px;height:39px;background:#fff"></div>
<div style="left:1493.12078125px;top:126.8px;height:19px;line-height:19px;font-size:13px;color:#4b96c8;letter-spacing:0.00px;white-space:nowrap;">Jun</div>
<div style="left:1529px;top:116px;width:51px;height:39px;background:#f7f7f7"></div>
<div style="left:1545.791171875px;top:126.8px;height:19px;line-height:19px;font-size:13px;color:#4b96c8;letter-spacing:0.00px;white-space:nowrap;">Jul</div>
<div style="left:1580px;top:116px;width:52px;height:39px;background:#fff"></div>
<div style="left:1594.035078125px;top:126.8px;height:19px;line-height:19px;font-size:13px;color:#4b96c8;letter-spacing:0.00px;white-space:nowrap;">Aug</div>
<div style="left:1632px;top:116px;width:50px;height:39px;background:#f7f7f7"></div>
<div style="left:1645.035078125px;top:126.8px;height:19px;line-height:19px;font-size:13px;color:#4b96c8;letter-spacing:0.00px;white-space:nowrap;">Sep</div>
<div style="left:1682px;top:116px;width:51px;height:39px;background:#fff"></div>
<div style="left:1696.9884375px;top:126.8px;height:19px;line-height:19px;font-size:13px;color:#4b96c8;letter-spacing:0.00px;white-space:nowrap;">Oct</div>
<div style="left:1733px;top:116px;width:50px;height:39px;background:#f7f7f7"></div>
<div style="left:1746.041171875px;top:126.8px;height:19px;line-height:19px;font-size:13px;color:#4b96c8;letter-spacing:0.00px;white-space:nowrap;">Nov</div>
<div style="left:1783px;top:116px;width:52px;height:39px;background:#fff"></div>
<div style="left:1797.041171875px;top:126.8px;height:19px;line-height:19px;font-size:13px;color:#4b96c8;letter-spacing:0.00px;white-space:nowrap;">Dec</div>
<div style="left:1835px;top:116px;width:51px;height:39px;background:#f7f7f7"></div>
<div style="left:1849.62078125px;top:126.8px;height:19px;line-height:19px;font-size:13px;color:#4b96c8;letter-spacing:0.00px;white-space:nowrap;">Jan</div>
<div style="left:1886px;top:116px;width:47px;height:39px;background:#fff"></div>
<div style="left:1897.9007031249998px;top:126.8px;height:19px;line-height:19px;font-size:13px;color:#4b96c8;letter-spacing:0.00px;white-space:nowrap;">Feb</div>
<div style="left:1933px;top:116px;width:51px;height:39px;background:#f7f7f7"></div>
<div style="left:1946.9067968749998px;top:126.8px;height:19px;line-height:19px;font-size:13px;color:#4b96c8;letter-spacing:0.00px;white-space:nowrap;">Mar</div>
<div style="left:1984px;top:116px;width:50px;height:39px;background:#fff"></div>
<div style="left:1998.4853906249998px;top:126.8px;height:19px;line-height:19px;font-size:13px;color:#4b96c8;letter-spacing:0.00px;white-space:nowrap;">Apr</div>
<div style="left:1378px;top:155px;width:628px;height:2px;background:#eff7fe"></div>
<div style="left:1378px;top:156px;width:628px;height:30px;background:#eff7fe"></div>
<div style="left:1337px;top:156px;width:40px;height:30px;background:#d5e6f1"></div>
<div style="left:1378px;top:185px;width:628px;height:1px;background:#c4def3"></div>
<div style="left:1378px;top:186px;width:628px;height:30px;background:#fff"></div>
<div style="left:1337px;top:186px;width:40px;height:30px;background:#e3eff7"></div>
<div style="left:1378px;top:215px;width:628px;height:1px;background:#dcdcdc"></div>
<div style="left:1378px;top:216px;width:628px;height:30px;background:#f7f7f7"></div>
<div style="left:1337px;top:216px;width:40px;height:30px;background:#d5e6f1"></div>
<div style="left:1378px;top:245px;width:628px;height:1px;background:#dcdcdc"></div>
<div style="left:1378px;top:246px;width:628px;height:30px;background:#fff"></div>
<div style="left:1337px;top:246px;width:40px;height:30px;background:#e3eff7"></div>
<div style="left:1378px;top:275px;width:628px;height:1px;background:#dcdcdc"></div>
<div style="left:1378px;top:276px;width:628px;height:30px;background:#f7f7f7"></div>
<div style="left:1337px;top:276px;width:40px;height:30px;background:#d5e6f1"></div>
<div style="left:1378px;top:305px;width:628px;height:1px;background:#dcdcdc"></div>
<div style="left:1378px;top:306px;width:628px;height:30px;background:#fff"></div>
<div style="left:1337px;top:306px;width:40px;height:30px;background:#e3eff7"></div>
<div style="left:1378px;top:335px;width:628px;height:1px;background:#dcdcdc"></div>
<div style="left:1378px;top:336px;width:628px;height:30px;background:#f7f7f7"></div>
<div style="left:1337px;top:336px;width:40px;height:30px;background:#d5e6f1"></div>
<div style="left:1378px;top:365px;width:628px;height:1px;background:#dcdcdc"></div>
<div style="left:1378px;top:366px;width:628px;height:30px;background:#fff"></div>
<div style="left:1337px;top:366px;width:40px;height:30px;background:#e3eff7"></div>
<div style="left:1378px;top:395px;width:628px;height:1px;background:#dcdcdc"></div>
<div style="left:1378px;top:396px;width:628px;height:6px;background:#f7f7f7"></div>
<div style="left:1337px;top:396px;width:40px;height:6px;background:#d5e6f1"></div>
<div style="left:1427px;top:155px;width:1px;height:247px;background:#dddddd"></div>
<div style="left:1479px;top:155px;width:1px;height:247px;background:#dddddd"></div>
<div style="left:1580px;top:155px;width:1px;height:247px;background:#dddddd"></div>
<div style="left:1632px;top:155px;width:1px;height:247px;background:#dddddd"></div>
<div style="left:1733px;top:155px;width:1px;height:247px;background:#dddddd"></div>
<div style="left:1783px;top:155px;width:1px;height:247px;background:#dddddd"></div>
<div style="left:1886px;top:155px;width:1px;height:247px;background:#dddddd"></div>
<div style="left:1933px;top:155px;width:1px;height:247px;background:#dddddd"></div>
<div style="left:1528px;top:155px;width:1px;height:247px;background:#5a9fd4"></div>
<div style="left:1528px;top:86px;width:1px;height:69px;background:#8fbbe0"></div>
<div style="left:1681px;top:155px;width:1px;height:247px;background:#4a94d0"></div>
<div style="left:1680px;top:155px;width:1px;height:247px;background:#b5d3ea"></div>
<div style="left:1834px;top:155px;width:2px;height:247px;background:#7ab0d8"></div>
<div style="left:1983px;top:155px;width:2px;height:247px;background:#7ab0d8"></div>
<div style="left:1377px;top:86px;width:1px;height:316px;background:#8ebadf"></div>
<div style="left:1376px;top:155px;width:1px;height:247px;background:#6aa0d0"></div>
<div style="left:1482px;top:155px;width:3px;height:247px;background:#f50000"></div>
<div style="left:1481.5px;top:158.0px;width:46.5px;height:12.0px;background:rgba(142,207,160,.68);border:1px solid #6ec283;border-radius:3px"></div>
<div style="left:1481.5px;top:172.0px;width:46.5px;height:11.5px;background:rgba(170,219,184,.55);border:1px solid #9dd5ac;border-radius:3px"></div>
<svg viewBox="0 0 700 260" style="left:1330px;top:150px;width:700px;height:260px"><g fill="none" stroke="#4a6273" stroke-width="2.1"><path d="M198.5 10 V39 Q198.5 43.5 203 43.5 H224"/><path d="M233.5 44 V69 Q233.5 73.5 238 73.5 H241"/><path d="M255.5 74 V99 Q255.5 103.5 260 103.5 H263"/><path d="M293.5 104 V129 Q293.5 133.5 298 133.5 H312"/><path d="M320.5 134 V159 Q320.5 163.5 325 163.5 H328"/><path d="M353 164.5 H360 Q361.5 164.5 361.5 167 V171"/></g><g fill="none" stroke="#4a6273" stroke-width="1.9" stroke-dasharray="1.9 2.3"><path d="M198 40 V52 Q198 57.5 204 57.5 H216"/><path d="M222.5 58 V82 Q222.5 87.5 228 87.5 H233"/><path d="M247.5 88 V112 Q247.5 117 252 117.5 H254"/><path d="M275.5 118 V143 Q275.5 148 281 148.5 H303"/><path d="M313.5 149 V172 Q313.5 177 318 178 H320"/><path d="M358 178.5 H362 V172"/></g></svg>
<div style="left:1554.0px;top:188.5px;width:10.0px;height:11.5px;border:2px solid #e8973f;border-radius:3.5px;background:#fff;opacity:1"></div><div style="left:1556.6px;top:191.3px;width:4.8px;height:5.9px;background:linear-gradient(90deg,#1a30c8 60%,#6b7a8a 60%);opacity:1"></div>
<div style="left:1545.5px;top:202.0px;width:7.0px;height:11.0px;border:2px solid #e8973f;border-radius:3.5px;background:#fff;opacity:0.45"></div><div style="left:1548.1px;top:204.8px;width:1.8px;height:5.4px;background:#4a55c8;opacity:0.45"></div>
<div style="left:1571.0px;top:218.5px;width:14.5px;height:11.5px;border:2px solid #e8973f;border-radius:3.5px;background:#fff;opacity:1"></div><div style="left:1573.6px;top:221.3px;width:9.3px;height:5.9px;background:#1e3a8c;opacity:1"></div>
<div style="left:1562.5px;top:232.5px;width:15.5px;height:11.0px;border:2px solid #e8973f;border-radius:3.5px;background:#fff;opacity:0.5"></div><div style="left:1565.1px;top:235.3px;width:10.3px;height:5.4px;background:#3a55a8;opacity:0.5"></div>
<div style="left:1592.5px;top:248.5px;width:30.5px;height:11.5px;border:2px solid #e8973f;border-radius:3.5px;background:#fff;opacity:1"></div><div style="left:1595.1px;top:251.3px;width:25.3px;height:5.9px;background:linear-gradient(90deg,#3f7fd8 0 35%,#2f5fa8 35% 40%,#3f7fd8 40% 72%,#44607a 72% 88%,#fff 88%);opacity:1"></div>
<div style="left:1584.5px;top:262.5px;width:21.0px;height:11.0px;border:2px solid #e8973f;border-radius:3.5px;background:#fff;opacity:0.5"></div><div style="left:1587.1px;top:265.3px;width:15.8px;height:5.4px;background:linear-gradient(90deg,#3f7fd8 0 45%,#2f5fa8 45% 52%,#3f7fd8 52% 85%,#44607a 85%);opacity:0.5"></div>
<div style="left:1641.5px;top:278.5px;width:9.0px;height:11.5px;border:2px solid #4da0e0;border-radius:3.5px;background:#fff;opacity:1"></div><div style="left:1644.1px;top:281.3px;width:3.8px;height:5.9px;background:#4a6273;opacity:1"></div>
<div style="left:1633.5px;top:292.0px;width:10.0px;height:11.0px;border:2px solid #4da0e0;border-radius:3.5px;background:#fff;opacity:0.45"></div><div style="left:1636.1px;top:294.8px;width:4.8px;height:5.4px;background:linear-gradient(90deg,#fff 55%,#3f8a5a 55%);opacity:0.45"></div>
<div style="left:1658.0px;top:308.5px;width:25.5px;height:11.5px;border:2px solid #4da0e0;border-radius:3.5px;background:#fff;opacity:1"></div><div style="left:1660.6px;top:311.3px;width:20.3px;height:5.9px;background:repeating-linear-gradient(90deg,#1f8a4c 0 2px,#3a5a4a 2px 3px,#1f8a4c 3px 4px) 0 0/11px 100% no-repeat,linear-gradient(90deg,#fff 0 68%,#3a5a4a 68% 76%,#fff 76% 82%,#1f8a4c 82%);opacity:1"></div>
<div style="left:1649.5px;top:322.0px;width:38.5px;height:11.5px;border:2px solid #4da0e0;border-radius:3.5px;background:#fff;opacity:0.45"></div><div style="left:1652.1px;top:324.8px;width:33.3px;height:5.9px;background:linear-gradient(90deg,#fff 0 20%,#3f8a5a 20% 50%,#fff 50% 76%,#6a8a7a 76% 82%,#fff 82% 88%,#3f8a5a 88%);opacity:0.45"></div>
<svg viewBox="0 0 30 30" style="left:1690px;top:306px;width:30px;height:30px"><path d="M2 15 L14.8 1.8 V28.6Z" fill="#fcc93a"/><path d="M15 14.6 L23 2 V28.2Z" fill="#6ec6f0"/></svg>
</div>
<div style="left:1336px;top:86px;width:1px;height:316px;background:#3f7bc4"></div>
<div style="left:989px;top:402px;width:1017px;height:21px;background:#e3eff7"></div>
<div style="left:1019.6px;top:401.7px;height:18px;line-height:18px;font-size:12px;color:#666;letter-spacing:0.48px;white-space:nowrap;">1/6</div>
<div style="left:989px;top:422.3px;width:1017px;height:1.8px;background:#a9caec"></div>
<div style="left:989px;top:424px;width:1017px;height:160px;background:#fff"></div>
<div style="left:989px;top:424px;width:1017px;height:30px;background:#f5f5f5"></div>
<svg viewBox="0 0 108 31" preserveAspectRatio="none" style="left:1024px;top:424px;width:108px;height:30px"><path d="M0 0 H98 L108 31 H0Z" fill="#b8d4f1"/></svg>
<div style="left:1029.4px;top:429.0px;height:18px;line-height:18px;font-size:12px;color:#3a78b8;letter-spacing:0.34px;white-space:nowrap;">Order Detail</div>
<div style="left:1975.5px;top:424px;width:1px;height:30px;background:#e2e2e2"></div>
<svg viewBox="0 0 16 16" style="left:1985.0px;top:435.5px;width:12px;height:12px;color:#555;"><path d="M14.9 3.6 L12.2 6.3 L10.2 5.8 L9.7 3.8 L12.4 1.1 A4.3 4.3 0 0 0 7.1 6.6 L1.3 12.4 A1.65 1.65 0 0 0 3.6 14.7 L9.4 8.9 A4.3 4.3 0 0 0 14.9 3.6Z" fill="currentColor"/></svg>
<svg viewBox="0 0 16 16" style="left:1000.8px;top:457.2px;width:13.5px;height:13.5px;color:#d6d6d6;"><path d="M2.2 11 L8 5.2 L13.8 11" fill="none" stroke="currentColor" stroke-width="2.9"/></svg>
<svg viewBox="0 0 16 16" style="left:1001.0px;top:491.0px;width:13px;height:13px;color:#d6d6d6;"><circle cx="8" cy="8" r="7.3" fill="currentColor"/><path d="M8 4 V12 M4 8 H12" stroke="#fff" stroke-width="2.5"/></svg>
<svg viewBox="0 0 16 16" style="left:1001.0px;top:525.5px;width:13px;height:13px;color:#d6d6d6;"><path d="M3 4.8 H13 V13.6 A1.3 1.3 0 0 1 11.7 14.9 H4.3 A1.3 1.3 0 0 1 3 13.6Z" fill="none" stroke="currentColor" stroke-width="1.4"/><path d="M1.4 4.2 H14.6" stroke="currentColor" stroke-width="1.6"/><path d="M5.6 3.8 V2.4 A1 1 0 0 1 6.6 1.4 H9.4 A1 1 0 0 1 10.4 2.4 V3.8" fill="none" stroke="currentColor" stroke-width="1.4"/><path d="M5.7 6.8 V12.8 M8 6.8 V12.8 M10.3 6.8 V12.8" stroke="currentColor" stroke-width="1.3"/></svg>
<svg viewBox="0 0 16 16" style="left:1000.8px;top:560.2px;width:13.5px;height:13.5px;color:#d6d6d6;"><path d="M15.11 6.87 L15.11 9.13 L13.23 9.34 L12.65 10.75 L13.82 12.23 L12.23 13.82 L10.75 12.65 L9.34 13.23 L9.13 15.11 L6.87 15.11 L6.66 13.23 L5.25 12.65 L3.77 13.82 L2.18 12.23 L3.35 10.75 L2.77 9.34 L0.89 9.13 L0.89 6.87 L2.77 6.66 L3.35 5.25 L2.18 3.77 L3.77 2.18 L5.25 3.35 L6.66 2.77 L6.87 0.89 L9.13 0.89 L9.34 2.77 L10.75 3.35 L12.23 2.18 L13.82 3.77 L12.65 5.25 L13.23 6.66Z M10.4 8 A2.4 2.4 0 1 0 5.6 8 A2.4 2.4 0 1 0 10.4 8Z" fill="currentColor" fill-rule="evenodd"/></svg>
<div style="left:996px;top:480px;width:21px;height:1px;background:#e6e6e6"></div>
<div style="left:996px;top:514.5px;width:21px;height:1px;background:#e6e6e6"></div>
<div style="left:996px;top:549.5px;width:21px;height:1px;background:#e6e6e6"></div>
<div style="left:1023px;top:455px;width:1px;height:130px;background:#e2e2e2"></div>
<div style="left:989px;top:454.5px;width:34px;height:1px;background:#e8e8e8"></div>
<div style="left:1039px;top:475.7px;height:18px;line-height:18px;font-size:12px;color:#666;letter-spacing:0.22px;white-space:nowrap;">Pl. start date</div>
<div style="left:1157px;top:469.5px;width:135px;height:24.5px;background:#f2f2f2;border-radius:3px 0 0 3px"></div>
<div style="left:1157px;top:471.5px;height:20px;line-height:20px;font-size:14px;color:#333;letter-spacing:0.43px;white-space:nowrap;width:122.5px;text-align:right;text-indent:-0.43px;">06/03/2018</div>
<div style="left:1292px;top:469.5px;width:37px;height:26.5px;background:#fafafa;border:1px solid #f0f0f0;border-top-color:#cdcdcd;border-radius:0 4px 4px 0;border-left:0;border-bottom-color:#f4f4f4"></div>
<svg viewBox="0 0 16 16" style="left:1302.5px;top:475.0px;width:15px;height:15px;color:#4a90d9;"><path d="M1.5 3 H14.5 V15 H1.5Z" fill="currentColor"/><path d="M2.6 6 H13.4 V13.9 H2.6Z" fill="#fff"/><path d="M2.6 8.6 H13.4 M2.6 11.2 H13.4 M5.3 6 V13.9 M8 6 V13.9 M10.7 6 V13.9" stroke="currentColor" stroke-width=".9"/><path d="M4 0.8 H6 V4.4 H4Z M10 0.8 H12 V4.4 H10Z" fill="currentColor" stroke="#fff" stroke-width=".5"/></svg>
<div style="left:1360.2px;top:475.7px;height:18px;line-height:18px;font-size:12px;color:#666;letter-spacing:0.15px;white-space:nowrap;">Pl. Duedate</div>
<div style="left:1478px;top:469.5px;width:135px;height:24.5px;background:#f2f2f2;border-radius:3px 0 0 3px"></div>
<div style="left:1478px;top:471.5px;height:20px;line-height:20px;font-size:14px;color:#333;letter-spacing:0.43px;white-space:nowrap;width:122.5px;text-align:right;text-indent:-0.43px;">06/29/2018</div>
<div style="left:1613px;top:469.5px;width:37px;height:26.5px;background:#fafafa;border:1px solid #f0f0f0;border-top-color:#cdcdcd;border-radius:0 4px 4px 0;border-left:0;border-bottom-color:#f4f4f4"></div>
<svg viewBox="0 0 16 16" style="left:1623.5px;top:475.0px;width:15px;height:15px;color:#4a90d9;"><path d="M1.5 3 H14.5 V15 H1.5Z" fill="currentColor"/><path d="M2.6 6 H13.4 V13.9 H2.6Z" fill="#fff"/><path d="M2.6 8.6 H13.4 M2.6 11.2 H13.4 M5.3 6 V13.9 M8 6 V13.9 M10.7 6 V13.9" stroke="currentColor" stroke-width=".9"/><path d="M4 0.8 H6 V4.4 H4Z M10 0.8 H12 V4.4 H10Z" fill="currentColor" stroke="#fff" stroke-width=".5"/></svg>
<div style="left:1681.4px;top:475.7px;height:18px;line-height:18px;font-size:12px;color:#666;letter-spacing:0.17px;white-space:nowrap;">Sch. start date</div>
<div style="left:1799px;top:469.5px;width:135px;height:24.5px;background:#f2f2f2;border-radius:3px 0 0 3px"></div>
<div style="left:1799px;top:471.5px;height:20px;line-height:20px;font-size:14px;color:#333;letter-spacing:0.43px;white-space:nowrap;width:122.5px;text-align:right;text-indent:-0.43px;">06/03/2018</div>
<div style="left:1934px;top:469.5px;width:37px;height:26.5px;background:#fafafa;border:1px solid #f0f0f0;border-top-color:#cdcdcd;border-radius:0 4px 4px 0;border-left:0;border-bottom-color:#f4f4f4"></div>
<svg viewBox="0 0 16 16" style="left:1944.5px;top:475.0px;width:15px;height:15px;color:#4a90d9;"><path d="M1.5 3 H14.5 V15 H1.5Z" fill="currentColor"/><path d="M2.6 6 H13.4 V13.9 H2.6Z" fill="#fff"/><path d="M2.6 8.6 H13.4 M2.6 11.2 H13.4 M5.3 6 V13.9 M8 6 V13.9 M10.7 6 V13.9" stroke="currentColor" stroke-width=".9"/><path d="M4 0.8 H6 V4.4 H4Z M10 0.8 H12 V4.4 H10Z" fill="currentColor" stroke="#fff" stroke-width=".5"/></svg>
<div style="left:1039px;top:510.7px;height:18px;line-height:18px;font-size:12px;color:#666;letter-spacing:0.14px;white-space:nowrap;">Sch. duedate</div>
<div style="left:1157px;top:504.5px;width:135px;height:24.5px;background:#f2f2f2;border-radius:3px 0 0 3px"></div>
<div style="left:1157px;top:506.5px;height:20px;line-height:20px;font-size:14px;color:#333;letter-spacing:0.43px;white-space:nowrap;width:122.5px;text-align:right;text-indent:-0.43px;">06/29/2018</div>
<div style="left:1292px;top:504.5px;width:37px;height:26.5px;background:#fafafa;border:1px solid #f0f0f0;border-top-color:#cdcdcd;border-radius:0 4px 4px 0;border-left:0;border-bottom-color:#f4f4f4"></div>
<svg viewBox="0 0 16 16" style="left:1302.5px;top:510.0px;width:15px;height:15px;color:#4a90d9;"><path d="M1.5 3 H14.5 V15 H1.5Z" fill="currentColor"/><path d="M2.6 6 H13.4 V13.9 H2.6Z" fill="#fff"/><path d="M2.6 8.6 H13.4 M2.6 11.2 H13.4 M5.3 6 V13.9 M8 6 V13.9 M10.7 6 V13.9" stroke="currentColor" stroke-width=".9"/><path d="M4 0.8 H6 V4.4 H4Z M10 0.8 H12 V4.4 H10Z" fill="currentColor" stroke="#fff" stroke-width=".5"/></svg>
<div style="left:1360.2px;top:510.7px;height:18px;line-height:18px;font-size:12px;color:#444;letter-spacing:0.29px;white-space:nowrap;text-shadow:0 0 .25px #444;">Company</div>
<div style="left:1478px;top:504.5px;width:171px;height:24.5px;background:#f2f2f2;border-radius:3px"></div>
<div style="left:1490px;top:506.5px;height:20px;line-height:20px;font-size:14px;color:#333;letter-spacing:-0.04px;white-space:nowrap;">F23287</div>
<div style="left:1681.4px;top:510.7px;height:18px;line-height:18px;font-size:12px;color:#666;letter-spacing:-0.12px;white-space:nowrap;">LT</div>
<div style="left:1799px;top:504.5px;width:118.5px;height:24.5px;background:#f2f2f2;border-radius:3px"></div>
<div style="left:1799px;top:506.5px;height:20px;line-height:20px;font-size:14px;color:#333;letter-spacing:0.22px;white-space:nowrap;width:107.5px;text-align:right;text-indent:-0.22px;">27</div>
<div style="left:1024.5px;top:544px;width:71.5px;height:33px;border:1px solid #cfcfcf;border-radius:4px;background:#fff"></div>
<div style="left:1037.6px;top:551.0px;height:20px;line-height:20px;font-size:14px;color:#333;letter-spacing:0.69px;white-space:nowrap;">modify</div>
<div style="left:989px;top:574px;width:1017px;height:8px;background:linear-gradient(rgba(80,120,170,0),rgba(80,120,170,.22) 45%,#6187b8 78%,#86a8d2)"></div>
<div style="left:989px;top:581px;width:1017px;height:36px;background:#fff"></div>
<div style="left:1023px;top:588px;width:1px;height:21px;background:#f0f0f0"></div>
<div style="left:1058px;top:588px;width:1px;height:21px;background:#f0f0f0"></div>
<div style="left:1092px;top:588px;width:1px;height:21px;background:#f0f0f0"></div>
<div style="left:1125px;top:588px;width:1px;height:21px;background:#f0f0f0"></div>
<div style="left:1158px;top:588px;width:1px;height:21px;background:#f0f0f0"></div>
<div style="left:1191px;top:588px;width:1px;height:21px;background:#f0f0f0"></div>
<div style="left:1225px;top:588px;width:1px;height:21px;background:#f0f0f0"></div>
<div style="left:1257px;top:588px;width:1px;height:21px;background:#f0f0f0"></div>
<div style="left:1288px;top:588px;width:1px;height:21px;background:#f0f0f0"></div>
<div style="left:1322px;top:588px;width:1px;height:21px;background:#f0f0f0"></div>
<div style="left:1355px;top:588px;width:1px;height:21px;background:#f0f0f0"></div>
<div style="left:1386px;top:588px;width:1px;height:21px;background:#f0f0f0"></div>
<div style="left:1420px;top:588px;width:1px;height:21px;background:#f0f0f0"></div>
<div style="left:1454px;top:588px;width:1px;height:21px;background:#f0f0f0"></div>
<div style="left:1489px;top:588px;width:1px;height:21px;background:#f0f0f0"></div>
<div style="left:1522px;top:588px;width:1px;height:21px;background:#f0f0f0"></div>
<div style="left:1557px;top:588px;width:1px;height:21px;background:#f0f0f0"></div>
<div style="left:1973px;top:588px;width:1px;height:21px;background:#f0f0f0"></div>
<svg viewBox="0 0 16 16" style="left:999.2px;top:590.8px;width:14.4px;height:14.4px;color:#4a4a4a;"><rect x="0.9" y="2.1" width="14.2" height="12.3" rx="1.7" fill="none" stroke="currentColor" stroke-width="1.4"/><path d="M0.9 9.9 H15.1 V13 A1.5 1.5 0 0 1 13.6 14.5 H2.4 A1.5 1.5 0 0 1 0.9 13Z" fill="currentColor"/><path d="M8 4.2 V8 M5.7 6.2 L8 8.5 L10.3 6.2" fill="none" stroke="currentColor" stroke-width="1.2"/></svg>
<svg viewBox="0 0 16 16" style="left:1033.0px;top:591.0px;width:14px;height:14px;color:#dadada;"><path d="M0.8 1.4 H13.4 L8.8 7.4 V14.6 L5.6 12 V7.4Z" fill="currentColor"/><path d="M9.3 4.4 L14.7 10.6 M14.7 4.4 L9.3 10.6" stroke="currentColor" stroke-width="4.2" stroke-linecap="round" fill="none"/><path d="M9.3 4.4 L14.7 10.6 M14.7 4.4 L9.3 10.6" stroke="#fff" stroke-width="2.2" stroke-linecap="round" fill="none"/></svg>
<svg viewBox="0 0 16 16" style="left:1067.0px;top:591.0px;width:14px;height:14px;color:#ececec;"><path d="M0.8 2.4 H11 L7.4 7 V12.6 L4.8 10.6 V7Z" fill="currentColor"/><circle cx="10.5" cy="6" r="2.3" fill="currentColor"/><circle cx="13" cy="8.6" r="2.3" fill="currentColor"/><circle cx="10.5" cy="11" r="2.3" fill="currentColor"/><circle cx="10.5" cy="6" r="1" fill="#fff"/><circle cx="13" cy="8.6" r="1" fill="#fff"/><circle cx="10.5" cy="11" r="1" fill="#fff"/></svg>
<svg viewBox="0 0 16 16" style="left:1100.8px;top:591.0px;width:14px;height:14px;color:#e2e2e2;"><path d="M0.8 7 L6.2 1.2 L11.6 7Z M0.8 9.4 L6.2 15.2 L11.6 9.4Z" fill="currentColor"/><path d="M8.6 5 L14.6 11.4 M14.6 5 L8.6 11.4" stroke="currentColor" stroke-width="4.4" stroke-linecap="round" fill="none"/><path d="M8.6 5 L14.6 11.4 M14.6 5 L8.6 11.4" stroke="#fff" stroke-width="2.3" stroke-linecap="round" fill="none"/></svg>
<svg viewBox="0 0 16 16" style="left:1135.8px;top:591.2px;width:13.5px;height:13.5px;color:#505050;"><path d="M11.6 10.4 V13 A1.8 1.8 0 0 1 9.8 14.8 H3 A1.8 1.8 0 0 1 1.2 13 V6.2 A1.8 1.8 0 0 1 3 4.4 H6.4" fill="none" stroke="currentColor" stroke-width="1.5"/><path d="M4.6 11.4 C8.8 11.6 10.4 9.6 10.4 5.4" fill="none" stroke="currentColor" stroke-width="2.8"/><path d="M6.4 5.9 L10.4 0.7 L14.4 5.9Z" fill="currentColor"/></svg>
<svg viewBox="0 0 16 16" style="left:1169.0px;top:591.2px;width:13.5px;height:13.5px;color:#505050;"><path d="M5 11.6 H3.4 A1.8 1.8 0 0 1 1.6 9.8 V3 A1.8 1.8 0 0 1 3.4 1.2 H10 A1.8 1.8 0 0 1 11.8 3 V4.2" fill="none" stroke="currentColor" stroke-width="1.5"/><path d="M5.4 4.6 C9.6 4.4 11.4 6.4 11.4 10.4" fill="none" stroke="currentColor" stroke-width="2.8"/><path d="M7.4 10 L11.4 15.3 L15.4 10Z" fill="currentColor"/></svg>
<svg viewBox="0 0 16 16" style="left:1201.6px;top:591.0px;width:14px;height:14px;color:#505050;"><path d="M7.4 4.6 H15 V12.4 L12.6 15 H5.2 V9.6" fill="none" stroke="currentColor" stroke-width="1.3"/><path d="M15 12.4 H12.6 V15" fill="none" stroke="currentColor" stroke-width="1"/><g transform="translate(1.2 0.4) scale(.52)"><path d="M15.51 6.81 L15.51 9.19 L13.23 9.34 L12.65 10.75 L14.15 12.47 L12.47 14.15 L10.75 12.65 L9.34 13.23 L9.19 15.51 L6.81 15.51 L6.66 13.23 L5.25 12.65 L3.53 14.15 L1.85 12.47 L3.35 10.75 L2.77 9.34 L0.49 9.19 L0.49 6.81 L2.77 6.66 L3.35 5.25 L1.85 3.53 L3.53 1.85 L5.25 3.35 L6.66 2.77 L6.81 0.49 L9.19 0.49 L9.34 2.77 L10.75 3.35 L12.47 1.85 L14.15 3.53 L12.65 5.25 L13.23 6.66Z M10.6 8 A2.6 2.6 0 1 0 5.4 8 A2.6 2.6 0 1 0 10.6 8Z" fill="currentColor" fill-rule="evenodd"/></g><path d="M2.4 6.6 L1 8 L2.6 9.8 L4.2 8.4" fill="none" stroke="currentColor" stroke-width="1.2"/></svg>
<svg viewBox="0 0 16 16" style="left:1234.8px;top:591.8px;width:12.5px;height:12.5px;color:#505050;"><circle cx="8" cy="8" r="7.3" fill="currentColor"/><path d="M8 4 V12 M4 8 H12" stroke="#fff" stroke-width="2.5"/></svg>
<svg viewBox="0 0 16 16" style="left:1266.1px;top:591.5px;width:13px;height:13px;color:#505050;"><path d="M3 4.8 H13 V13.6 A1.3 1.3 0 0 1 11.7 14.9 H4.3 A1.3 1.3 0 0 1 3 13.6Z" fill="none" stroke="currentColor" stroke-width="1.4"/><path d="M1.4 4.2 H14.6" stroke="currentColor" stroke-width="1.6"/><path d="M5.6 3.8 V2.4 A1 1 0 0 1 6.6 1.4 H9.4 A1 1 0 0 1 10.4 2.4 V3.8" fill="none" stroke="currentColor" stroke-width="1.4"/><path d="M5.7 6.8 V12.8 M8 6.8 V12.8 M10.3 6.8 V12.8" stroke="currentColor" stroke-width="1.3"/></svg>
<svg viewBox="0 0 16 16" style="left:1298.7px;top:591.0px;width:14px;height:14px;color:#505050;"><circle cx="7.4" cy="7.6" r="3.6" fill="none" stroke="currentColor" stroke-width="1.7"/><path d="M10 10.4 L13.2 13.8" stroke="currentColor" stroke-width="2.2"/><path d="M7.4 0.6 L8.8 2.2 H6Z M7.4 15.6 L8.8 14 H6Z" fill="currentColor"/></svg>
<svg viewBox="0 0 16 16" style="left:1331.0px;top:591.0px;width:14px;height:14px;color:#505050;"><path d="M1.8 0.8 H10 L14.2 5 V15.2 H1.8Z M9.8 1 V5.2 H14" fill="none" stroke="currentColor" stroke-width="1.2"/><path d="M5.2 7.4 L10.8 13.2 M10.8 7.4 L5.2 13.2 M4.2 7.4 H6.4 M9.6 7.4 H11.8 M4.2 13.2 H6.4 M9.6 13.2 H11.8" stroke="currentColor" stroke-width="1.2" fill="none"/></svg>
<svg viewBox="0 0 16 16" style="left:1362.8px;top:591.0px;width:14px;height:14px;color:#505050;"><path d="M1.8 0.8 H10 L14.2 5 V15.2 H1.8Z M9.8 1 V5.2 H14" fill="none" stroke="currentColor" stroke-width="1.2"/><path d="M4 13 C6.4 11.8 7.6 9.2 7.4 6.4 C7.8 9.6 9.6 11.2 12.2 11.4 C9.2 11 6.4 11.8 4 13Z" fill="none" stroke="currentColor" stroke-width="1"/></svg>
<svg viewBox="0 0 16 16" style="left:1396.0px;top:591.0px;width:14px;height:14px;color:#505050;"><path d="M1.2 1.2 H14.8 V12.4 H1.2Z" fill="none" stroke="currentColor" stroke-width="1.4"/><path d="M1.2 1.4 H14.8" stroke="currentColor" stroke-width="2"/><path d="M8 1.4 V12.4" stroke="currentColor" stroke-width="1.4"/><path d="M1.2 12.4 L2.6 15 L5.4 13.2 L7 15 L8 13 L9 15 L10.6 13.2 L13.4 15 L14.8 12.4" fill="none" stroke="currentColor" stroke-width="1"/></svg>
<svg viewBox="0 0 16 16" style="left:1429.8px;top:591.0px;width:14px;height:14px;color:#505050;"><circle cx="8" cy="7.4" r="3.6" fill="none" stroke="currentColor" stroke-width="1.7"/><path d="M10.6 10 L13.6 13.4" stroke="currentColor" stroke-width="2.2"/><path d="M0.4 7.4 L2.2 6 V8.8Z M15.6 7.4 L13.8 6 V8.8Z" fill="currentColor"/></svg>
<div style="left:1459px;top:591px;width:24px;height:14px;line-height:14px;text-align:center;font-size:9.5px;font-weight:bold;color:#505050">P/S</div>
<svg viewBox="0 0 16 16" style="left:1498.2px;top:591.0px;width:14px;height:14px;color:#505050;"><path d="M2.2 8.2 L7.6 2.6 L13.2 8.2 L8.4 12.8 C7.6 13.6 6.6 13.6 5.8 12.8 L2.4 9.4 C2 9 2 8.6 2.2 8.2Z" fill="none" stroke="currentColor" stroke-width="1.4"/><path d="M2 8.6 H13" stroke="currentColor" stroke-width="1.2"/><path d="M14 9.6 C15.2 11.2 15.4 12.6 14 12.8 C12.8 12.6 13 11.2 14 9.6Z" fill="currentColor"/><path d="M7.6 2.6 C6.6 1 4.4 1.6 5 4.8" fill="none" stroke="currentColor" stroke-width="1.1"/></svg>
<div style="left:1527px;top:591px;width:24px;height:14px;line-height:14px;text-align:center;font-size:7px;font-weight:bold;color:#505050">ABC</div>
<svg viewBox="0 0 16 16" style="left:1574.5px;top:592.2px;width:11.5px;height:11.5px;color:#505050;"><path d="M2.4 0.6 H5.6 V15.4 H2.4Z M14 0.6 V15.4 L5.4 8Z" fill="currentColor"/></svg>
<svg viewBox="0 0 16 16" style="left:1604.9px;top:591.5px;width:13px;height:13px;color:#505050;"><path d="M8.2 1.8 V14.2 L0.8 8Z M15.6 1.8 V14.2 L8.2 8Z" fill="currentColor"/></svg>
<svg viewBox="0 0 16 16" style="left:1636.2px;top:591.5px;width:13px;height:13px;color:#505050;"><path d="M0.4 1.8 V14.2 L7.8 8Z M7.8 1.8 V14.2 L15.2 8Z" fill="currentColor"/></svg>
<svg viewBox="0 0 16 16" style="left:1668.8px;top:592.2px;width:11.5px;height:11.5px;color:#505050;"><path d="M10.4 0.6 H13.6 V15.4 H10.4Z M2 0.6 V15.4 L10.6 8Z" fill="currentColor"/></svg>
<svg viewBox="0 0 16 16" style="left:1702.0px;top:591.0px;width:14px;height:14px;color:#505050;"><path d="M0.4 8 L4 4.6 V7 H12 V4.6 L15.6 8 L12 11.4 V9 H4 V11.4Z" fill="currentColor"/></svg>
<svg viewBox="0 0 16 16" style="left:1984.0px;top:592.0px;width:13px;height:13px;color:#444;"><path d="M14.9 3.6 L12.2 6.3 L10.2 5.8 L9.7 3.8 L12.4 1.1 A4.3 4.3 0 0 0 7.1 6.6 L1.3 12.4 A1.65 1.65 0 0 0 3.6 14.7 L9.4 8.9 A4.3 4.3 0 0 0 14.9 3.6Z" fill="currentColor"/></svg>
<div class="clip" style="left:0;top:0;width:1320px;height:932px">
<div style="left:989px;top:616px;width:331px;height:30px;background:#546476"></div>
<svg viewBox="0 0 16 16" style="left:998.8px;top:626.0px;width:12px;height:12px;color:#e9eef3;"><rect x="2.2" y="2.6" width="11.6" height="10.8" rx="2.2" fill="none" stroke="currentColor" stroke-width="1.8"/></svg>
<div style="left:1019px;top:616px;width:1px;height:30px;background:#3e4c5b"></div>
<div style="left:1029.7px;top:623.7px;height:18px;line-height:18px;font-size:12px;color:#e9eef3;letter-spacing:-0.21px;white-space:nowrap;text-shadow:0 0 .3px #e9eef3;">AB...</div>
<div style="left:1071px;top:616px;width:1px;height:30px;background:#3e4c5b"></div>
<div style="left:1081.4px;top:623.7px;height:18px;line-height:18px;font-size:12px;color:#e9eef3;letter-spacing:-0.04px;white-space:nowrap;text-shadow:0 0 .3px #e9eef3;">Crit. Pa...</div>
<div style="left:1147px;top:616px;width:1px;height:30px;background:#3e4c5b"></div>
<div style="left:1160.3px;top:623.7px;height:18px;line-height:18px;font-size:12px;color:#e9eef3;letter-spacing:-0.05px;white-space:nowrap;text-shadow:0 0 .3px #e9eef3;">Col</div>
<div style="left:1197px;top:616px;width:1px;height:30px;background:#3e4c5b"></div>
<div style="left:1225.6px;top:623.7px;height:18px;line-height:18px;font-size:12px;color:#e9eef3;letter-spacing:0.51px;white-space:nowrap;text-shadow:0 0 .3px #e9eef3;text-decoration:underline;">Order</div>
<div style="left:1293px;top:616px;width:1px;height:30px;background:#3e4c5b"></div>
<div style="left:1308.4px;top:623.7px;height:18px;line-height:18px;font-size:12px;color:#e9eef3;letter-spacing:0.10px;white-space:nowrap;text-shadow:0 0 .3px #e9eef3;text-decoration:underline;">It...</div>
<div style="left:1346.5px;top:616px;width:1px;height:30px;background:#3e4c5b"></div>
<div style="left:1019px;top:616px;width:1px;height:30px;background:#3f5f86"></div>
<div style="left:989px;top:646px;width:331px;height:40px;background:#fff"></div>
<div class="fi" style="left:1024px;top:650px;width:41px;height:25px;"></div>
<div class="fi" style="left:1076px;top:650px;width:65px;height:25px;"></div>
<div class="fi" style="left:1152px;top:650px;width:39px;height:25px;"></div>
<div class="fi" style="left:1202px;top:650px;width:85px;height:25px;"></div>
<div class="fi" style="left:1298px;top:650px;width:42.5px;height:25px;"></div>
<div style="left:1019px;top:686px;width:301px;height:30px;background:#eff7fe"></div>
<div style="left:989px;top:686px;width:30px;height:30px;background:#b8d4f1"></div>
<div style="left:989px;top:715px;width:331px;height:1px;background:#c4def3"></div>
<div style="left:1019px;top:686px;width:301px;height:4px;background:linear-gradient(#d6e9f7,#eff7fe)"></div>
<div style="left:1019px;top:716px;width:301px;height:30px;background:#fff"></div>
<div style="left:989px;top:716px;width:30px;height:30px;background:#efefef"></div>
<div style="left:989px;top:745px;width:331px;height:1px;background:#dcdcdc"></div>
<div style="left:1019px;top:746px;width:301px;height:30px;background:#f7f7f7"></div>
<div style="left:989px;top:746px;width:30px;height:30px;background:#efefef"></div>
<div style="left:989px;top:775px;width:331px;height:1px;background:#dcdcdc"></div>
<div style="left:1019px;top:776px;width:301px;height:30px;background:#fff"></div>
<div style="left:989px;top:776px;width:30px;height:30px;background:#efefef"></div>
<div style="left:989px;top:805px;width:331px;height:1px;background:#dcdcdc"></div>
<div style="left:1019px;top:806px;width:301px;height:30px;background:#f7f7f7"></div>
<div style="left:989px;top:806px;width:30px;height:30px;background:#efefef"></div>
<div style="left:989px;top:835px;width:331px;height:1px;background:#dcdcdc"></div>
<div style="left:1019px;top:836px;width:301px;height:30px;background:#fff"></div>
<div style="left:989px;top:836px;width:30px;height:30px;background:#efefef"></div>
<div style="left:989px;top:865px;width:331px;height:1px;background:#dcdcdc"></div>
<div style="left:1019px;top:866px;width:301px;height:30px;background:#f7f7f7"></div>
<div style="left:989px;top:866px;width:30px;height:30px;background:#efefef"></div>
<div style="left:989px;top:895px;width:331px;height:1px;background:#dcdcdc"></div>
<div style="left:1019px;top:896px;width:301px;height:30px;background:#fff"></div>
<div style="left:989px;top:896px;width:30px;height:30px;background:#efefef"></div>
<div style="left:989px;top:925px;width:331px;height:1px;background:#dcdcdc"></div>
<div style="left:1019px;top:926px;width:301px;height:6px;background:#f7f7f7"></div>
<div style="left:989px;top:926px;width:30px;height:6px;background:#efefef"></div>
<div style="left:994.5px;top:692.0px;height:18px;line-height:18px;font-size:12px;color:#555;letter-spacing:0.19px;white-space:nowrap;">1</div>
<div style="left:1034.5px;top:692.0px;height:18px;line-height:18px;font-size:12px;color:#333;letter-spacing:-1.09px;white-space:nowrap;">C</div>
<div style="left:1103.0px;top:694.0px;width:11px;height:11px;border:1px solid #c6c6c6;border-radius:2px;background:#ebebeb"></div>
<div style="left:1162.5px;top:692.0px;width:19px;height:17px;border-radius:3.5px;background:#ffff00;box-shadow:0 0 0 .6px rgba(170,170,120,.55)"></div>
<div style="left:1212.5px;top:692.0px;height:18px;line-height:18px;font-size:12px;color:#333;letter-spacing:0.04px;white-space:nowrap;">C0024.00045</div>
<div style="left:1308.5px;top:692.0px;height:18px;line-height:18px;font-size:12px;color:#333;letter-spacing:-0.54px;white-space:nowrap;">LT_</div>
<div style="left:994.5px;top:722.0px;height:18px;line-height:18px;font-size:12px;color:#555;letter-spacing:0.19px;white-space:nowrap;">2</div>
<div style="left:1034.5px;top:722.0px;height:18px;line-height:18px;font-size:12px;color:#333;letter-spacing:-0.23px;white-space:nowrap;">B</div>
<div style="left:1103.0px;top:724.0px;width:11px;height:11px;border:1px solid #c6c6c6;border-radius:2px;background:#ebebeb"></div>
<div style="left:1162.5px;top:722.0px;width:19px;height:17px;border-radius:3.5px;background:#ffff00;box-shadow:0 0 0 .6px rgba(170,170,120,.55)"></div>
<div style="left:1212.5px;top:722.0px;height:18px;line-height:18px;font-size:12px;color:#333;letter-spacing:0.04px;white-space:nowrap;">C0024.00059</div>
<div style="left:1308.5px;top:722.0px;height:18px;line-height:18px;font-size:12px;color:#333;letter-spacing:-0.54px;white-space:nowrap;">LT_</div>
</div>
<div style="left:1322px;top:616px;width:684px;height:316px;background:#fff"></div>
<div style="left:1322px;top:616px;width:40px;height:70px;background:#d5e6f1"></div>
<div class="clip" style="left:0;top:0;width:2006px;height:932px">
<div style="left:1362px;top:616px;width:6px;height:30px;background:#e3eff7"></div>
<div style="left:1368px;top:616px;width:222px;height:30px;background:#d5e6f1"></div>
<div style="left:1448.956875px;top:622.0px;height:19px;line-height:19px;font-size:13px;color:#4b96c8;letter-spacing:0.00px;white-space:nowrap;">May 2018</div>
<div style="left:1590px;top:616px;width:213px;height:30px;background:#e3eff7"></div>
<div style="left:1668.7565625px;top:622.0px;height:19px;line-height:19px;font-size:13px;color:#4b96c8;letter-spacing:0.00px;white-space:nowrap;">Jun 2018</div>
<div style="left:1803px;top:616px;width:257px;height:30px;background:#d5e6f1"></div>
<div style="left:1888.426953125px;top:622.0px;height:19px;line-height:19px;font-size:13px;color:#4b96c8;letter-spacing:0.00px;white-space:nowrap;">Jul 2018</div>
<div style="left:1362px;top:646px;width:49px;height:40px;background:#fff"></div>
<div style="left:1372.8153906250002px;top:656.8px;height:19px;line-height:19px;font-size:13px;color:#4b96c8;letter-spacing:0.00px;white-space:nowrap;">18th</div>
<div style="left:1411px;top:646px;width:50px;height:40px;background:#f7f7f7"></div>
<div style="left:1422.745390625px;top:656.8px;height:19px;line-height:19px;font-size:13px;color:#4b96c8;letter-spacing:0.00px;white-space:nowrap;">19th</div>
<div style="left:1461px;top:646px;width:50px;height:40px;background:#fff"></div>
<div style="left:1472.6753906249999px;top:656.8px;height:19px;line-height:19px;font-size:13px;color:#4b96c8;letter-spacing:0.00px;white-space:nowrap;">20th</div>
<div style="left:1511px;top:646px;width:50px;height:40px;background:#f7f7f7"></div>
<div style="left:1522.97px;top:656.8px;height:19px;line-height:19px;font-size:13px;color:#4b96c8;letter-spacing:0.00px;white-space:nowrap;">21st</div>
<div style="left:1561px;top:646px;width:50px;height:40px;background:#fff"></div>
<div style="left:1570.7265625px;top:656.8px;height:19px;line-height:19px;font-size:13px;color:#4b96c8;letter-spacing:0.00px;white-space:nowrap;">22nd</div>
<div style="left:1611px;top:646px;width:50px;height:40px;background:#f7f7f7"></div>
<div style="left:1622.106875px;top:656.8px;height:19px;line-height:19px;font-size:13px;color:#4b96c8;letter-spacing:0.00px;white-space:nowrap;">23rd</div>
<div style="left:1661px;top:646px;width:50px;height:40px;background:#fff"></div>
<div style="left:1672.3953906250001px;top:656.8px;height:19px;line-height:19px;font-size:13px;color:#4b96c8;letter-spacing:0.00px;white-space:nowrap;">24th</div>
<div style="left:1711px;top:646px;width:49px;height:40px;background:#f7f7f7"></div>
<div style="left:1722.325390625px;top:656.8px;height:19px;line-height:19px;font-size:13px;color:#4b96c8;letter-spacing:0.00px;white-space:nowrap;">25th</div>
<div style="left:1760px;top:646px;width:50px;height:40px;background:#fff"></div>
<div style="left:1772.255390625px;top:656.8px;height:19px;line-height:19px;font-size:13px;color:#4b96c8;letter-spacing:0.00px;white-space:nowrap;">26th</div>
<div style="left:1810px;top:646px;width:50px;height:40px;background:#f7f7f7"></div>
<div style="left:1822.185390625px;top:656.8px;height:19px;line-height:19px;font-size:13px;color:#4b96c8;letter-spacing:0.00px;white-space:nowrap;">27th</div>
<div style="left:1860px;top:646px;width:50px;height:40px;background:#fff"></div>
<div style="left:1872.115390625px;top:656.8px;height:19px;line-height:19px;font-size:13px;color:#4b96c8;letter-spacing:0.00px;white-space:nowrap;">28th</div>
<div style="left:1910px;top:646px;width:50px;height:40px;background:#f7f7f7"></div>
<div style="left:1922.045390625px;top:656.8px;height:19px;line-height:19px;font-size:13px;color:#4b96c8;letter-spacing:0.00px;white-space:nowrap;">29th</div>
<div style="left:1960px;top:646px;width:50px;height:40px;background:#fff"></div>
<div style="left:1971.975390625px;top:656.8px;height:19px;line-height:19px;font-size:13px;color:#4b96c8;letter-spacing:0.00px;white-space:nowrap;">30th</div>
<div style="left:2010px;top:646px;width:50px;height:40px;background:#f7f7f7"></div>
<div style="left:2022.27px;top:656.8px;height:19px;line-height:19px;font-size:13px;color:#4b96c8;letter-spacing:0.00px;white-space:nowrap;">31st</div>
<div style="left:1363px;top:686px;width:643px;height:30px;background:#eff7fe"></div>
<div style="left:1322px;top:686px;width:40px;height:30px;background:#d5e6f1"></div>
<div style="left:1363px;top:715px;width:643px;height:1px;background:#c4def3"></div>
<div style="left:1363px;top:716px;width:643px;height:30px;background:#fff"></div>
<div style="left:1322px;top:716px;width:40px;height:30px;background:#e3eff7"></div>
<div style="left:1363px;top:745px;width:643px;height:1px;background:#dcdcdc"></div>
<div style="left:1363px;top:746px;width:643px;height:30px;background:#f7f7f7"></div>
<div style="left:1322px;top:746px;width:40px;height:30px;background:#d5e6f1"></div>
<div style="left:1363px;top:775px;width:643px;height:1px;background:#dcdcdc"></div>
<div style="left:1363px;top:776px;width:643px;height:30px;background:#fff"></div>
<div style="left:1322px;top:776px;width:40px;height:30px;background:#e3eff7"></div>
<div style="left:1363px;top:805px;width:643px;height:1px;background:#dcdcdc"></div>
<div style="left:1363px;top:806px;width:643px;height:30px;background:#f7f7f7"></div>
<div style="left:1322px;top:806px;width:40px;height:30px;background:#d5e6f1"></div>
<div style="left:1363px;top:835px;width:643px;height:1px;background:#dcdcdc"></div>
<div style="left:1363px;top:836px;width:643px;height:30px;background:#fff"></div>
<div style="left:1322px;top:836px;width:40px;height:30px;background:#e3eff7"></div>
<div style="left:1363px;top:865px;width:643px;height:1px;background:#dcdcdc"></div>
<div style="left:1363px;top:866px;width:643px;height:30px;background:#f7f7f7"></div>
<div style="left:1322px;top:866px;width:40px;height:30px;background:#d5e6f1"></div>
<div style="left:1363px;top:895px;width:643px;height:1px;background:#dcdcdc"></div>
<div style="left:1363px;top:896px;width:643px;height:30px;background:#fff"></div>
<div style="left:1322px;top:896px;width:40px;height:30px;background:#e3eff7"></div>
<div style="left:1363px;top:925px;width:643px;height:1px;background:#dcdcdc"></div>
<div style="left:1363px;top:926px;width:643px;height:6px;background:#f7f7f7"></div>
<div style="left:1322px;top:926px;width:40px;height:6px;background:#d5e6f1"></div>
<div style="left:1411px;top:686px;width:1px;height:246px;background:#dddddd"></div>
<div style="left:1461px;top:686px;width:1px;height:246px;background:#dddddd"></div>
<div style="left:1511px;top:686px;width:1px;height:246px;background:#dddddd"></div>
<div style="left:1561px;top:686px;width:1px;height:246px;background:#dddddd"></div>
<div style="left:1611px;top:686px;width:1px;height:246px;background:#dddddd"></div>
<div style="left:1661px;top:686px;width:1px;height:246px;background:#dddddd"></div>
<div style="left:1711px;top:686px;width:1px;height:246px;background:#dddddd"></div>
<div style="left:1760px;top:686px;width:1px;height:246px;background:#dddddd"></div>
<div style="left:1810px;top:686px;width:1px;height:246px;background:#dddddd"></div>
<div style="left:1860px;top:686px;width:1px;height:246px;background:#dddddd"></div>
<div style="left:1910px;top:686px;width:1px;height:246px;background:#dddddd"></div>
<div style="left:1960px;top:686px;width:1px;height:246px;background:#dddddd"></div>
<div style="left:2010px;top:686px;width:1px;height:246px;background:#dddddd"></div>
<div style="left:1361px;top:616px;width:1px;height:316px;background:#8ebadf"></div>
<div style="left:1360px;top:686px;width:1px;height:246px;background:#6aa0d0"></div>
<div style="left:1368px;top:686px;width:1px;height:246px;background:#5a9fd4"></div>
<div style="left:1589px;top:686px;width:1px;height:246px;background:#5a9fd4"></div>
<div style="left:1803px;top:686px;width:1px;height:246px;background:#5a9fd4"></div>
<div style="left:1367.5px;top:718.5px;width:242.5px;height:11.5px;background:rgba(190,214,200,.75);border:1px solid #8fcc9f;border-radius:3px"></div>
<div style="left:1609.0px;top:718.5px;width:95.0px;height:11.5px;background:rgba(150,211,168,.78);border:1px solid #62ba7b;border-radius:3px"></div>
<div style="left:1367.5px;top:732.5px;width:336.5px;height:11.0px;background:rgba(196,228,206,.62);border:1px solid #a6d8b3;border-radius:3px"></div>
<div style="left:1609px;top:686px;width:3px;height:246px;background:#f50000"></div>
<div style="left:1609.5px;top:719.5px;width:3.5px;height:9.5px;background:rgba(150,211,168,.5);border:0px solid transparent;border-radius:0px"></div>
<div style="left:1798.5px;top:688.5px;width:58.5px;height:11.5px;background:rgba(255,255,255,.35);border:2px solid #86aa3c;border-radius:3px"></div>
<div style="left:1763.0px;top:702.0px;width:58.5px;height:11.5px;background:rgba(255,255,255,.35);border:2px solid #b9d08f;border-radius:3px"></div>
<svg viewBox="0 0 200 70" style="left:1700px;top:686px;width:200px;height:70px"><path d="M4 37.5 H93 Q98 37.5 98 32 V8" fill="none" stroke="#4a6273" stroke-width="2.1"/><path d="M4 52.5 H57 Q62.5 52.5 62.5 47 V22" fill="none" stroke="#4a6273" stroke-width="1.9" stroke-dasharray="1.9 2.3"/></svg>
</div>
<div style="left:1320px;top:616px;width:1px;height:316px;background:#3f7bc4"></div>
<div style="left:989px;top:932px;width:1017px;height:21px;background:#e3eff7"></div>
<div style="left:1019.6px;top:931.7px;height:18px;line-height:18px;font-size:12px;color:#666;letter-spacing:0.48px;white-space:nowrap;">1/2</div>
<div style="left:989px;top:952.3px;width:1017px;height:1.8px;background:#a9caec"></div>
<div style="left:989px;top:954px;width:1017px;height:160px;background:#fff"></div>
<div style="left:989px;top:954px;width:1017px;height:30px;background:#f5f5f5"></div>
<svg viewBox="0 0 107 31" preserveAspectRatio="none" style="left:1024px;top:954px;width:107px;height:30px"><path d="M0 0 H97 L107 31 H0Z" fill="#b8d4f1"/></svg>
<div style="left:1029.4px;top:959.0px;height:18px;line-height:18px;font-size:12px;color:#3a78b8;letter-spacing:0.39px;white-space:nowrap;">Order detail</div>
<div style="left:1975.5px;top:954px;width:1px;height:30px;background:#e2e2e2"></div>
<svg viewBox="0 0 16 16" style="left:1985.0px;top:965.5px;width:12px;height:12px;color:#555;"><path d="M14.9 3.6 L12.2 6.3 L10.2 5.8 L9.7 3.8 L12.4 1.1 A4.3 4.3 0 0 0 7.1 6.6 L1.3 12.4 A1.65 1.65 0 0 0 3.6 14.7 L9.4 8.9 A4.3 4.3 0 0 0 14.9 3.6Z" fill="currentColor"/></svg>
<svg viewBox="0 0 16 16" style="left:1000.8px;top:987.2px;width:13.5px;height:13.5px;color:#444;"><path d="M2.2 11 L8 5.2 L13.8 11" fill="none" stroke="currentColor" stroke-width="2.9"/></svg>
<svg viewBox="0 0 16 16" style="left:1001.0px;top:1021.0px;width:13px;height:13px;color:#444;"><circle cx="8" cy="8" r="7.3" fill="currentColor"/><path d="M8 4 V12 M4 8 H12" stroke="#fff" stroke-width="2.5"/></svg>
<svg viewBox="0 0 16 16" style="left:1001.0px;top:1055.5px;width:13px;height:13px;color:#444;"><path d="M3 4.8 H13 V13.6 A1.3 1.3 0 0 1 11.7 14.9 H4.3 A1.3 1.3 0 0 1 3 13.6Z" fill="none" stroke="currentColor" stroke-width="1.4"/><path d="M1.4 4.2 H14.6" stroke="currentColor" stroke-width="1.6"/><path d="M5.6 3.8 V2.4 A1 1 0 0 1 6.6 1.4 H9.4 A1 1 0 0 1 10.4 2.4 V3.8" fill="none" stroke="currentColor" stroke-width="1.4"/><path d="M5.7 6.8 V12.8 M8 6.8 V12.8 M10.3 6.8 V12.8" stroke="currentColor" stroke-width="1.3"/></svg>
<svg viewBox="0 0 16 16" style="left:1000.8px;top:1090.2px;width:13.5px;height:13.5px;color:#444;"><path d="M15.11 6.87 L15.11 9.13 L13.23 9.34 L12.65 10.75 L13.82 12.23 L12.23 13.82 L10.75 12.65 L9.34 13.23 L9.13 15.11 L6.87 15.11 L6.66 13.23 L5.25 12.65 L3.77 13.82 L2.18 12.23 L3.35 10.75 L2.77 9.34 L0.89 9.13 L0.89 6.87 L2.77 6.66 L3.35 5.25 L2.18 3.77 L3.77 2.18 L5.25 3.35 L6.66 2.77 L6.87 0.89 L9.13 0.89 L9.34 2.77 L10.75 3.35 L12.23 2.18 L13.82 3.77 L12.65 5.25 L13.23 6.66Z M10.4 8 A2.4 2.4 0 1 0 5.6 8 A2.4 2.4 0 1 0 10.4 8Z" fill="currentColor" fill-rule="evenodd"/></svg>
<div style="left:996px;top:1010px;width:21px;height:1px;background:#e6e6e6"></div>
<div style="left:996px;top:1044.5px;width:21px;height:1px;background:#e6e6e6"></div>
<div style="left:996px;top:1079.5px;width:21px;height:1px;background:#e6e6e6"></div>
<div style="left:1023px;top:985px;width:1px;height:130px;background:#e2e2e2"></div>
<div style="left:989px;top:984.5px;width:34px;height:1px;background:#e8e8e8"></div>
<div style="left:1039px;top:1005.7px;height:18px;line-height:18px;font-size:12px;color:#666;letter-spacing:0.22px;white-space:nowrap;">Pl. start date</div>
<div style="left:1157px;top:999.5px;width:135px;height:24.5px;background:#f2f2f2;border-radius:3px 0 0 3px"></div>
<div style="left:1157px;top:1001.5px;height:20px;line-height:20px;font-size:14px;color:#333;letter-spacing:0.43px;white-space:nowrap;width:122.5px;text-align:right;text-indent:-0.43px;">06/30/2018</div>
<div style="left:1292px;top:999.5px;width:37px;height:26.5px;background:#fafafa;border:1px solid #f0f0f0;border-top-color:#cdcdcd;border-radius:0 4px 4px 0;border-left:0;border-bottom-color:#f4f4f4"></div>
<svg viewBox="0 0 16 16" style="left:1302.5px;top:1005.0px;width:15px;height:15px;color:#4a90d9;"><path d="M1.5 3 H14.5 V15 H1.5Z" fill="currentColor"/><path d="M2.6 6 H13.4 V13.9 H2.6Z" fill="#fff"/><path d="M2.6 8.6 H13.4 M2.6 11.2 H13.4 M5.3 6 V13.9 M8 6 V13.9 M10.7 6 V13.9" stroke="currentColor" stroke-width=".9"/><path d="M4 0.8 H6 V4.4 H4Z M10 0.8 H12 V4.4 H10Z" fill="currentColor" stroke="#fff" stroke-width=".5"/></svg>
<div style="left:1360.2px;top:1005.7px;height:18px;line-height:18px;font-size:12px;color:#666;letter-spacing:0.15px;white-space:nowrap;">Pl. Duedate</div>
<div style="left:1478px;top:999.5px;width:135px;height:24.5px;background:#f2f2f2;border-radius:3px 0 0 3px"></div>
<div style="left:1478px;top:1001.5px;height:20px;line-height:20px;font-size:14px;color:#333;letter-spacing:0.43px;white-space:nowrap;width:122.5px;text-align:right;text-indent:-0.43px;">07/08/2018</div>
<div style="left:1613px;top:999.5px;width:37px;height:26.5px;background:#fafafa;border:1px solid #f0f0f0;border-top-color:#cdcdcd;border-radius:0 4px 4px 0;border-left:0;border-bottom-color:#f4f4f4"></div>
<svg viewBox="0 0 16 16" style="left:1623.5px;top:1005.0px;width:15px;height:15px;color:#4a90d9;"><path d="M1.5 3 H14.5 V15 H1.5Z" fill="currentColor"/><path d="M2.6 6 H13.4 V13.9 H2.6Z" fill="#fff"/><path d="M2.6 8.6 H13.4 M2.6 11.2 H13.4 M5.3 6 V13.9 M8 6 V13.9 M10.7 6 V13.9" stroke="currentColor" stroke-width=".9"/><path d="M4 0.8 H6 V4.4 H4Z M10 0.8 H12 V4.4 H10Z" fill="currentColor" stroke="#fff" stroke-width=".5"/></svg>
<div style="left:1681.4px;top:1005.7px;height:18px;line-height:18px;font-size:12px;color:#666;letter-spacing:0.17px;white-space:nowrap;">Sch. start date</div>
<div style="left:1799px;top:999.5px;width:135px;height:24.5px;background:#f2f2f2;border-radius:3px 0 0 3px"></div>
<div style="left:1799px;top:1001.5px;height:20px;line-height:20px;font-size:14px;color:#333;letter-spacing:0.43px;white-space:nowrap;width:122.5px;text-align:right;text-indent:-0.43px;">06/25/2018</div>
<div style="left:1934px;top:999.5px;width:37px;height:26.5px;background:#fafafa;border:1px solid #f0f0f0;border-top-color:#cdcdcd;border-radius:0 4px 4px 0;border-left:0;border-bottom-color:#f4f4f4"></div>
<svg viewBox="0 0 16 16" style="left:1944.5px;top:1005.0px;width:15px;height:15px;color:#4a90d9;"><path d="M1.5 3 H14.5 V15 H1.5Z" fill="currentColor"/><path d="M2.6 6 H13.4 V13.9 H2.6Z" fill="#fff"/><path d="M2.6 8.6 H13.4 M2.6 11.2 H13.4 M5.3 6 V13.9 M8 6 V13.9 M10.7 6 V13.9" stroke="currentColor" stroke-width=".9"/><path d="M4 0.8 H6 V4.4 H4Z M10 0.8 H12 V4.4 H10Z" fill="currentColor" stroke="#fff" stroke-width=".5"/></svg>
<div style="left:1039px;top:1040.7px;height:18px;line-height:18px;font-size:12px;color:#666;letter-spacing:0.14px;white-space:nowrap;">Sch. duedate</div>
<div style="left:1157px;top:1034.5px;width:135px;height:24.5px;background:#f2f2f2;border-radius:3px 0 0 3px"></div>
<div style="left:1157px;top:1036.5px;height:20px;line-height:20px;font-size:14px;color:#333;letter-spacing:0.43px;white-space:nowrap;width:122.5px;text-align:right;text-indent:-0.43px;">07/03/2018</div>
<div style="left:1292px;top:1034.5px;width:37px;height:26.5px;background:#fafafa;border:1px solid #f0f0f0;border-top-color:#cdcdcd;border-radius:0 4px 4px 0;border-left:0;border-bottom-color:#f4f4f4"></div>
<svg viewBox="0 0 16 16" style="left:1302.5px;top:1040.0px;width:15px;height:15px;color:#4a90d9;"><path d="M1.5 3 H14.5 V15 H1.5Z" fill="currentColor"/><path d="M2.6 6 H13.4 V13.9 H2.6Z" fill="#fff"/><path d="M2.6 8.6 H13.4 M2.6 11.2 H13.4 M5.3 6 V13.9 M8 6 V13.9 M10.7 6 V13.9" stroke="currentColor" stroke-width=".9"/><path d="M4 0.8 H6 V4.4 H4Z M10 0.8 H12 V4.4 H10Z" fill="currentColor" stroke="#fff" stroke-width=".5"/></svg>
<div style="left:1360.2px;top:1040.7px;height:18px;line-height:18px;font-size:12px;color:#444;letter-spacing:0.29px;white-space:nowrap;text-shadow:0 0 .25px #444;">Company</div>
<div style="left:1478px;top:1034.5px;width:171px;height:24.5px;background:#f2f2f2;border-radius:3px"></div>
<div style="left:1681.4px;top:1040.7px;height:18px;line-height:18px;font-size:12px;color:#666;letter-spacing:-0.12px;white-space:nowrap;">LT</div>
<div style="left:1799px;top:1034.5px;width:118.5px;height:24.5px;background:#f2f2f2;border-radius:3px"></div>
<div style="left:1799px;top:1036.5px;height:20px;line-height:20px;font-size:14px;color:#333;letter-spacing:0.22px;white-space:nowrap;width:107.5px;text-align:right;text-indent:-0.22px;">8</div>
<div style="left:1024.5px;top:1074px;width:71.5px;height:33px;border:1px solid #cfcfcf;border-radius:4px;background:#fff"></div>
<div style="left:1037.6px;top:1081.0px;height:20px;line-height:20px;font-size:14px;color:#333;letter-spacing:0.69px;white-space:nowrap;">modify</div>
<div style="left:2006px;top:26px;width:1px;height:1084px;background:#5c9ade"></div>
<div style="left:2007px;top:1px;width:1px;height:1109px;background:#1e88e5"></div>
</body></html>
